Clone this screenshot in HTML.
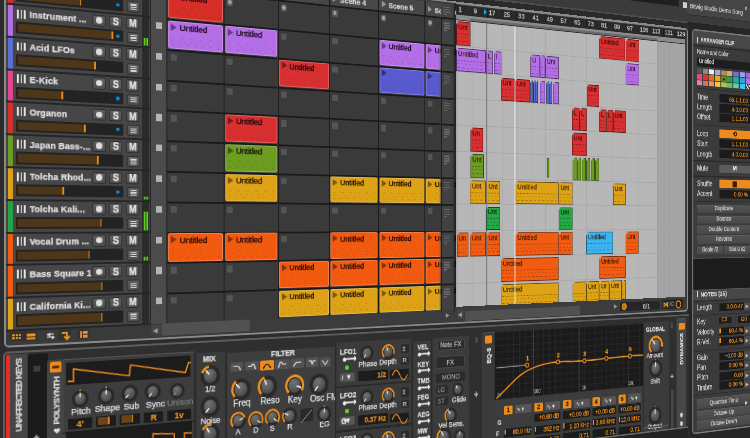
<!DOCTYPE html><html><head><meta charset="utf-8"><style>
html,body{margin:0;padding:0;background:#2a2a2a;width:750px;height:438px;overflow:hidden}
#w{position:absolute;left:0;top:0;width:1px;height:1px;transform-origin:0 0;transform:matrix3d(1,0.0937,0,0.0004219409282700422,0,1,0,0,0,0,1,0,0,0,0,1)}
#w div{position:absolute}
.t{white-space:nowrap;line-height:1;font-family:"Liberation Sans",sans-serif;-webkit-text-stroke:0.25px currentColor}
</style></head><body><svg width="0" height="0" style="position:absolute"><defs><radialGradient id="kg" cx="0.4" cy="0.3" r="0.8"><stop offset="0" stop-color="#747474"/><stop offset="1" stop-color="#404040"/></radialGradient></defs></svg><div id="w">
<div style="left:-50px;top:-200px;width:1300px;height:140px;background:#3b3b3b"></div>
<div style="left:-50px;top:-60px;width:1300px;height:1.6px;background:#4e4e4e"></div>
<div style="left:848px;top:-160px;width:103px;height:80px;background:#1f1f1f"></div>
<div style="left:968px;top:-160px;width:200px;height:89px;background:#454545"></div>
<div style="left:968px;top:-71.5px;width:200px;height:1.5px;background:#2a2a2a"></div>
<div style="left:-50px;top:-48px;width:1300px;height:600px;background:#2c2c2c"></div>
<div style="left:4px;top:-51px;width:965px;height:398.5px;background:#3a3a3a;border:2px solid #8a8a8a;border-radius:5px;box-sizing:border-box"></div>
<div style="left:6px;top:-29.8px;width:155px;height:32.8px;background:#464646"></div>
<div style="left:6px;top:-30.8px;width:155px;height:2px;background:#262626"></div>
<div style="left:8px;top:-28.8px;width:5px;height:30.8px;background:#d82e28"></div>
<div style="left:17.4px;top:-25px;width:1.8px;height:8.8px;background:#e4e4e4"></div>
<div style="left:20.6px;top:-25px;width:1.8px;height:8.8px;background:#e4e4e4"></div>
<div style="left:23.8px;top:-25px;width:1.8px;height:8.8px;background:#e4e4e4"></div>
<div class="t" style="left:30px;top:-24.39px;font-size:9.2px;color:#e4e4e4;font-weight:bold;letter-spacing:0.15px">Drums</div>
<div style="left:95.6px;top:-27.2px;width:15.3px;height:12.4px;background:linear-gradient(#5d5d5d,#4e4e4e);border:1px solid #2e2e2e;border-radius:2px;box-sizing:border-box"></div>
<div style="left:100.2px;top:-24.6px;width:6.5px;height:6.5px;background:#dedede;border-radius:50%"></div>
<div style="left:114.1px;top:-27.2px;width:15.3px;height:12.4px;background:linear-gradient(#5d5d5d,#4e4e4e);border:1px solid #2e2e2e;border-radius:2px;box-sizing:border-box"></div>
<div class="t" style="left:114.1px;top:-25.67px;width:15.3px;text-align:center;font-size:10px;color:#e8e8e8;font-weight:bold;">S</div>
<div style="left:133px;top:-27.2px;width:15.3px;height:12.4px;background:linear-gradient(#5d5d5d,#4e4e4e);border:1px solid #2e2e2e;border-radius:2px;box-sizing:border-box"></div>
<div class="t" style="left:133px;top:-25.67px;width:15.3px;text-align:center;font-size:10px;color:#e8e8e8;font-weight:bold;">M</div>
<div style="left:16px;top:-12.6px;width:114px;height:12.2px;background:#232323;border-radius:1px"></div>
<div style="left:17.8px;top:-10.6px;width:64.8px;height:8.3px;background:#4e3619"></div>
<div style="left:82.6px;top:-10.6px;width:1.7px;height:8.3px;background:#e88a1c"></div>
<div style="left:121.3px;top:-9.2px;width:5.4px;height:5.4px;background:#1a86c0;border-radius:50%;border:1.2px solid #0c2c44;box-sizing:border-box"></div>
<div style="left:134px;top:-11.8px;width:15px;height:12px;background:linear-gradient(#5d5d5d,#4e4e4e);border:1px solid #2e2e2e;border-radius:2px;box-sizing:border-box"></div>
<div style="left:138px;top:-8.6px;width:7px;height:1.3px;background:#d8d8d8"></div>
<div style="left:138px;top:-6.4px;width:7px;height:1.3px;background:#d8d8d8"></div>
<div style="left:138px;top:-4.2px;width:7px;height:1.3px;background:#d8d8d8"></div>
<div style="left:151px;top:-28.8px;width:8px;height:30.8px;background:#2b2b2b"></div>
<div style="left:161px;top:-29.8px;width:18px;height:32.8px;background:#4b4b4b"></div>
<div style="left:159.5px;top:-29.8px;width:1.8px;height:32.8px;background:#1e1e1e"></div>
<div style="left:166.6px;top:-24.8px;width:7.3px;height:7.3px;background:#b4b4b4"></div>
<div style="left:6px;top:3px;width:155px;height:32.8px;background:#464646"></div>
<div style="left:6px;top:2px;width:155px;height:2px;background:#262626"></div>
<div style="left:8px;top:4px;width:5px;height:30.8px;background:#b46ee6"></div>
<div style="left:17.4px;top:7.8px;width:1.8px;height:8.8px;background:#e4e4e4"></div>
<div style="left:20.6px;top:7.8px;width:1.8px;height:8.8px;background:#e4e4e4"></div>
<div style="left:23.8px;top:7.8px;width:1.8px;height:8.8px;background:#e4e4e4"></div>
<div class="t" style="left:30px;top:8.41px;font-size:9.2px;color:#e4e4e4;font-weight:bold;letter-spacing:0.15px">Instrument ...</div>
<div style="left:95.6px;top:5.6px;width:15.3px;height:12.4px;background:linear-gradient(#5d5d5d,#4e4e4e);border:1px solid #2e2e2e;border-radius:2px;box-sizing:border-box"></div>
<div style="left:100.2px;top:8.2px;width:6.5px;height:6.5px;background:#dedede;border-radius:50%"></div>
<div style="left:114.1px;top:5.6px;width:15.3px;height:12.4px;background:linear-gradient(#5d5d5d,#4e4e4e);border:1px solid #2e2e2e;border-radius:2px;box-sizing:border-box"></div>
<div class="t" style="left:114.1px;top:7.13px;width:15.3px;text-align:center;font-size:10px;color:#e8e8e8;font-weight:bold;">S</div>
<div style="left:133px;top:5.6px;width:15.3px;height:12.4px;background:linear-gradient(#5d5d5d,#4e4e4e);border:1px solid #2e2e2e;border-radius:2px;box-sizing:border-box"></div>
<div class="t" style="left:133px;top:7.13px;width:15.3px;text-align:center;font-size:10px;color:#e8e8e8;font-weight:bold;">M</div>
<div style="left:16px;top:20.2px;width:114px;height:12.2px;background:#232323;border-radius:1px"></div>
<div style="left:17.8px;top:22.2px;width:99.3px;height:8.3px;background:#4e3619"></div>
<div style="left:117.1px;top:22.2px;width:1.7px;height:8.3px;background:#e88a1c"></div>
<div style="left:121.3px;top:23.6px;width:5.4px;height:5.4px;background:#1a86c0;border-radius:50%;border:1.2px solid #0c2c44;box-sizing:border-box"></div>
<div style="left:134px;top:21px;width:15px;height:12px;background:linear-gradient(#5d5d5d,#4e4e4e);border:1px solid #2e2e2e;border-radius:2px;box-sizing:border-box"></div>
<div style="left:138px;top:24.2px;width:7px;height:1.3px;background:#d8d8d8"></div>
<div style="left:138px;top:26.4px;width:7px;height:1.3px;background:#d8d8d8"></div>
<div style="left:138px;top:28.6px;width:7px;height:1.3px;background:#d8d8d8"></div>
<div style="left:151px;top:4px;width:8px;height:30.8px;background:#2b2b2b"></div>
<div style="left:161px;top:3px;width:18px;height:32.8px;background:#4b4b4b"></div>
<div style="left:159.5px;top:3px;width:1.8px;height:32.8px;background:#1e1e1e"></div>
<div style="left:166.6px;top:8px;width:7.3px;height:7.3px;background:#b4b4b4"></div>
<div style="left:6px;top:35.8px;width:155px;height:32.8px;background:#464646"></div>
<div style="left:6px;top:34.8px;width:155px;height:2px;background:#262626"></div>
<div style="left:8px;top:36.8px;width:5px;height:30.8px;background:#5c6cd8"></div>
<div style="left:17.4px;top:40.6px;width:1.8px;height:8.8px;background:#e4e4e4"></div>
<div style="left:20.6px;top:40.6px;width:1.8px;height:8.8px;background:#e4e4e4"></div>
<div style="left:23.8px;top:40.6px;width:1.8px;height:8.8px;background:#e4e4e4"></div>
<div class="t" style="left:30px;top:41.21px;font-size:9.2px;color:#e4e4e4;font-weight:bold;letter-spacing:0.15px">Acid LFOs</div>
<div style="left:95.6px;top:38.4px;width:15.3px;height:12.4px;background:linear-gradient(#5d5d5d,#4e4e4e);border:1px solid #2e2e2e;border-radius:2px;box-sizing:border-box"></div>
<div style="left:100.2px;top:41px;width:6.5px;height:6.5px;background:#dedede;border-radius:50%"></div>
<div style="left:114.1px;top:38.4px;width:15.3px;height:12.4px;background:linear-gradient(#5d5d5d,#4e4e4e);border:1px solid #2e2e2e;border-radius:2px;box-sizing:border-box"></div>
<div class="t" style="left:114.1px;top:39.94px;width:15.3px;text-align:center;font-size:10px;color:#e8e8e8;font-weight:bold;">S</div>
<div style="left:133px;top:38.4px;width:15.3px;height:12.4px;background:linear-gradient(#5d5d5d,#4e4e4e);border:1px solid #2e2e2e;border-radius:2px;box-sizing:border-box"></div>
<div class="t" style="left:133px;top:39.94px;width:15.3px;text-align:center;font-size:10px;color:#e8e8e8;font-weight:bold;">M</div>
<div style="left:16px;top:53px;width:114px;height:12.2px;background:#232323;border-radius:1px"></div>
<div style="left:17.8px;top:55px;width:80.6px;height:8.3px;background:#4e3619"></div>
<div style="left:98.4px;top:55px;width:1.7px;height:8.3px;background:#e88a1c"></div>
<div style="left:134px;top:53.8px;width:15px;height:12px;background:linear-gradient(#5d5d5d,#4e4e4e);border:1px solid #2e2e2e;border-radius:2px;box-sizing:border-box"></div>
<div style="left:138px;top:57px;width:7px;height:1.3px;background:#d8d8d8"></div>
<div style="left:138px;top:59.2px;width:7px;height:1.3px;background:#d8d8d8"></div>
<div style="left:138px;top:61.4px;width:7px;height:1.3px;background:#d8d8d8"></div>
<div style="left:151px;top:36.8px;width:8px;height:30.8px;background:#2b2b2b"></div>
<div style="left:161px;top:35.8px;width:18px;height:32.8px;background:#4b4b4b"></div>
<div style="left:159.5px;top:35.8px;width:1.8px;height:32.8px;background:#1e1e1e"></div>
<div style="left:166.6px;top:40.8px;width:7.3px;height:7.3px;background:#b4b4b4"></div>
<div style="left:6px;top:68.6px;width:155px;height:32.8px;background:#464646"></div>
<div style="left:6px;top:67.6px;width:155px;height:2px;background:#262626"></div>
<div style="left:8px;top:69.6px;width:5px;height:30.8px;background:#e4458e"></div>
<div style="left:17.4px;top:73.4px;width:1.8px;height:8.8px;background:#e4e4e4"></div>
<div style="left:20.6px;top:73.4px;width:1.8px;height:8.8px;background:#e4e4e4"></div>
<div style="left:23.8px;top:73.4px;width:1.8px;height:8.8px;background:#e4e4e4"></div>
<div class="t" style="left:30px;top:74.01px;font-size:9.2px;color:#e4e4e4;font-weight:bold;letter-spacing:0.15px">E-Kick</div>
<div style="left:95.6px;top:71.2px;width:15.3px;height:12.4px;background:linear-gradient(#5d5d5d,#4e4e4e);border:1px solid #2e2e2e;border-radius:2px;box-sizing:border-box"></div>
<div style="left:100.2px;top:73.8px;width:6.5px;height:6.5px;background:#dedede;border-radius:50%"></div>
<div style="left:114.1px;top:71.2px;width:15.3px;height:12.4px;background:linear-gradient(#5d5d5d,#4e4e4e);border:1px solid #2e2e2e;border-radius:2px;box-sizing:border-box"></div>
<div class="t" style="left:114.1px;top:72.73px;width:15.3px;text-align:center;font-size:10px;color:#e8e8e8;font-weight:bold;">S</div>
<div style="left:133px;top:71.2px;width:15.3px;height:12.4px;background:linear-gradient(#5d5d5d,#4e4e4e);border:1px solid #2e2e2e;border-radius:2px;box-sizing:border-box"></div>
<div class="t" style="left:133px;top:72.73px;width:15.3px;text-align:center;font-size:10px;color:#e8e8e8;font-weight:bold;">M</div>
<div style="left:16px;top:85.8px;width:114px;height:12.2px;background:#232323;border-radius:1px"></div>
<div style="left:17.8px;top:87.8px;width:45.1px;height:8.3px;background:#4e3619"></div>
<div style="left:62.9px;top:87.8px;width:1.7px;height:8.3px;background:#e88a1c"></div>
<div style="left:121.3px;top:89.2px;width:5.4px;height:5.4px;background:#1a86c0;border-radius:50%;border:1.2px solid #0c2c44;box-sizing:border-box"></div>
<div style="left:134px;top:86.6px;width:15px;height:12px;background:linear-gradient(#5d5d5d,#4e4e4e);border:1px solid #2e2e2e;border-radius:2px;box-sizing:border-box"></div>
<div style="left:138px;top:89.8px;width:7px;height:1.3px;background:#d8d8d8"></div>
<div style="left:138px;top:92px;width:7px;height:1.3px;background:#d8d8d8"></div>
<div style="left:138px;top:94.2px;width:7px;height:1.3px;background:#d8d8d8"></div>
<div style="left:151px;top:69.6px;width:8px;height:30.8px;background:#2b2b2b"></div>
<div style="left:161px;top:68.6px;width:18px;height:32.8px;background:#4b4b4b"></div>
<div style="left:159.5px;top:68.6px;width:1.8px;height:32.8px;background:#1e1e1e"></div>
<div style="left:166.6px;top:73.6px;width:7.3px;height:7.3px;background:#b4b4b4"></div>
<div style="left:6px;top:101.4px;width:155px;height:32.8px;background:#464646"></div>
<div style="left:6px;top:100.4px;width:155px;height:2px;background:#262626"></div>
<div style="left:8px;top:102.4px;width:5px;height:30.8px;background:#d83030"></div>
<div style="left:17.4px;top:106.2px;width:1.8px;height:8.8px;background:#e4e4e4"></div>
<div style="left:20.6px;top:106.2px;width:1.8px;height:8.8px;background:#e4e4e4"></div>
<div style="left:23.8px;top:106.2px;width:1.8px;height:8.8px;background:#e4e4e4"></div>
<div class="t" style="left:30px;top:106.81px;font-size:9.2px;color:#e4e4e4;font-weight:bold;letter-spacing:0.15px">Organon</div>
<div style="left:95.6px;top:104px;width:15.3px;height:12.4px;background:linear-gradient(#5d5d5d,#4e4e4e);border:1px solid #2e2e2e;border-radius:2px;box-sizing:border-box"></div>
<div style="left:100.2px;top:106.6px;width:6.5px;height:6.5px;background:#dedede;border-radius:50%"></div>
<div style="left:114.1px;top:104px;width:15.3px;height:12.4px;background:linear-gradient(#5d5d5d,#4e4e4e);border:1px solid #2e2e2e;border-radius:2px;box-sizing:border-box"></div>
<div class="t" style="left:114.1px;top:105.53px;width:15.3px;text-align:center;font-size:10px;color:#e8e8e8;font-weight:bold;">S</div>
<div style="left:133px;top:104px;width:15.3px;height:12.4px;background:linear-gradient(#5d5d5d,#4e4e4e);border:1px solid #2e2e2e;border-radius:2px;box-sizing:border-box"></div>
<div class="t" style="left:133px;top:105.53px;width:15.3px;text-align:center;font-size:10px;color:#e8e8e8;font-weight:bold;">M</div>
<div style="left:16px;top:118.6px;width:114px;height:12.2px;background:#232323;border-radius:1px"></div>
<div style="left:17.8px;top:120.6px;width:69.6px;height:8.3px;background:#4e3619"></div>
<div style="left:87.4px;top:120.6px;width:1.7px;height:8.3px;background:#e88a1c"></div>
<div style="left:121.3px;top:122px;width:5.4px;height:5.4px;background:#1a86c0;border-radius:50%;border:1.2px solid #0c2c44;box-sizing:border-box"></div>
<div style="left:134px;top:119.4px;width:15px;height:12px;background:linear-gradient(#5d5d5d,#4e4e4e);border:1px solid #2e2e2e;border-radius:2px;box-sizing:border-box"></div>
<div style="left:138px;top:122.6px;width:7px;height:1.3px;background:#d8d8d8"></div>
<div style="left:138px;top:124.8px;width:7px;height:1.3px;background:#d8d8d8"></div>
<div style="left:138px;top:127px;width:7px;height:1.3px;background:#d8d8d8"></div>
<div style="left:151px;top:102.4px;width:8px;height:30.8px;background:#2b2b2b"></div>
<div style="left:161px;top:101.4px;width:18px;height:32.8px;background:#4b4b4b"></div>
<div style="left:159.5px;top:101.4px;width:1.8px;height:32.8px;background:#1e1e1e"></div>
<div style="left:166.6px;top:106.4px;width:7.3px;height:7.3px;background:#b4b4b4"></div>
<div style="left:6px;top:134.2px;width:155px;height:32.8px;background:#464646"></div>
<div style="left:6px;top:133.2px;width:155px;height:2px;background:#262626"></div>
<div style="left:8px;top:135.2px;width:5px;height:30.8px;background:#6c9c22"></div>
<div style="left:17.4px;top:139px;width:1.8px;height:8.8px;background:#e4e4e4"></div>
<div style="left:20.6px;top:139px;width:1.8px;height:8.8px;background:#e4e4e4"></div>
<div style="left:23.8px;top:139px;width:1.8px;height:8.8px;background:#e4e4e4"></div>
<div class="t" style="left:30px;top:139.61px;font-size:9.2px;color:#e4e4e4;font-weight:bold;letter-spacing:0.15px">Japan Bass-...</div>
<div style="left:95.6px;top:136.8px;width:15.3px;height:12.4px;background:linear-gradient(#5d5d5d,#4e4e4e);border:1px solid #2e2e2e;border-radius:2px;box-sizing:border-box"></div>
<div style="left:100.2px;top:139.4px;width:6.5px;height:6.5px;background:#dedede;border-radius:50%"></div>
<div style="left:114.1px;top:136.8px;width:15.3px;height:12.4px;background:linear-gradient(#5d5d5d,#4e4e4e);border:1px solid #2e2e2e;border-radius:2px;box-sizing:border-box"></div>
<div class="t" style="left:114.1px;top:138.33px;width:15.3px;text-align:center;font-size:10px;color:#e8e8e8;font-weight:bold;">S</div>
<div style="left:133px;top:136.8px;width:15.3px;height:12.4px;background:linear-gradient(#5d5d5d,#4e4e4e);border:1px solid #2e2e2e;border-radius:2px;box-sizing:border-box"></div>
<div class="t" style="left:133px;top:138.33px;width:15.3px;text-align:center;font-size:10px;color:#e8e8e8;font-weight:bold;">M</div>
<div style="left:16px;top:151.4px;width:114px;height:12.2px;background:#232323;border-radius:1px"></div>
<div style="left:17.8px;top:153.4px;width:83.1px;height:8.3px;background:#4e3619"></div>
<div style="left:100.9px;top:153.4px;width:1.7px;height:8.3px;background:#e88a1c"></div>
<div style="left:134px;top:152.2px;width:15px;height:12px;background:linear-gradient(#5d5d5d,#4e4e4e);border:1px solid #2e2e2e;border-radius:2px;box-sizing:border-box"></div>
<div style="left:138px;top:155.4px;width:7px;height:1.3px;background:#d8d8d8"></div>
<div style="left:138px;top:157.6px;width:7px;height:1.3px;background:#d8d8d8"></div>
<div style="left:138px;top:159.8px;width:7px;height:1.3px;background:#d8d8d8"></div>
<div style="left:151px;top:135.2px;width:8px;height:30.8px;background:#2b2b2b"></div>
<div style="left:161px;top:134.2px;width:18px;height:32.8px;background:#4b4b4b"></div>
<div style="left:159.5px;top:134.2px;width:1.8px;height:32.8px;background:#1e1e1e"></div>
<div style="left:166.6px;top:139.2px;width:7.3px;height:7.3px;background:#b4b4b4"></div>
<div style="left:6px;top:167px;width:155px;height:32.8px;background:#464646"></div>
<div style="left:6px;top:166px;width:155px;height:2px;background:#262626"></div>
<div style="left:8px;top:168px;width:5px;height:30.8px;background:#dea216"></div>
<div style="left:17.4px;top:171.8px;width:1.8px;height:8.8px;background:#e4e4e4"></div>
<div style="left:20.6px;top:171.8px;width:1.8px;height:8.8px;background:#e4e4e4"></div>
<div style="left:23.8px;top:171.8px;width:1.8px;height:8.8px;background:#e4e4e4"></div>
<div class="t" style="left:30px;top:172.41px;font-size:9.2px;color:#e4e4e4;font-weight:bold;letter-spacing:0.15px">Tolcha Rhod...</div>
<div style="left:95.6px;top:169.6px;width:15.3px;height:12.4px;background:linear-gradient(#5d5d5d,#4e4e4e);border:1px solid #2e2e2e;border-radius:2px;box-sizing:border-box"></div>
<div style="left:100.2px;top:172.2px;width:6.5px;height:6.5px;background:#dedede;border-radius:50%"></div>
<div style="left:114.1px;top:169.6px;width:15.3px;height:12.4px;background:linear-gradient(#5d5d5d,#4e4e4e);border:1px solid #2e2e2e;border-radius:2px;box-sizing:border-box"></div>
<div class="t" style="left:114.1px;top:171.13px;width:15.3px;text-align:center;font-size:10px;color:#e8e8e8;font-weight:bold;">S</div>
<div style="left:133px;top:169.6px;width:15.3px;height:12.4px;background:linear-gradient(#5d5d5d,#4e4e4e);border:1px solid #2e2e2e;border-radius:2px;box-sizing:border-box"></div>
<div class="t" style="left:133px;top:171.13px;width:15.3px;text-align:center;font-size:10px;color:#e8e8e8;font-weight:bold;">M</div>
<div style="left:16px;top:184.2px;width:114px;height:12.2px;background:#232323;border-radius:1px"></div>
<div style="left:17.8px;top:186.2px;width:46.2px;height:8.3px;background:#4e3619"></div>
<div style="left:64px;top:186.2px;width:1.7px;height:8.3px;background:#e88a1c"></div>
<div style="left:121.3px;top:187.6px;width:5.4px;height:5.4px;background:#1a86c0;border-radius:50%;border:1.2px solid #0c2c44;box-sizing:border-box"></div>
<div style="left:134px;top:185px;width:15px;height:12px;background:linear-gradient(#5d5d5d,#4e4e4e);border:1px solid #2e2e2e;border-radius:2px;box-sizing:border-box"></div>
<div style="left:138px;top:188.2px;width:7px;height:1.3px;background:#d8d8d8"></div>
<div style="left:138px;top:190.4px;width:7px;height:1.3px;background:#d8d8d8"></div>
<div style="left:138px;top:192.6px;width:7px;height:1.3px;background:#d8d8d8"></div>
<div style="left:151px;top:168px;width:8px;height:30.8px;background:#2b2b2b"></div>
<div style="left:161px;top:167px;width:18px;height:32.8px;background:#4b4b4b"></div>
<div style="left:159.5px;top:167px;width:1.8px;height:32.8px;background:#1e1e1e"></div>
<div style="left:166.6px;top:172px;width:7.3px;height:7.3px;background:#b4b4b4"></div>
<div style="left:6px;top:199.8px;width:155px;height:32.8px;background:#464646"></div>
<div style="left:6px;top:198.8px;width:155px;height:2px;background:#262626"></div>
<div style="left:8px;top:200.8px;width:5px;height:30.8px;background:#22a644"></div>
<div style="left:17.4px;top:204.6px;width:1.8px;height:8.8px;background:#e4e4e4"></div>
<div style="left:20.6px;top:204.6px;width:1.8px;height:8.8px;background:#e4e4e4"></div>
<div style="left:23.8px;top:204.6px;width:1.8px;height:8.8px;background:#e4e4e4"></div>
<div class="t" style="left:30px;top:205.21px;font-size:9.2px;color:#e4e4e4;font-weight:bold;letter-spacing:0.15px">Tolcha Kali...</div>
<div style="left:95.6px;top:202.4px;width:15.3px;height:12.4px;background:linear-gradient(#5d5d5d,#4e4e4e);border:1px solid #2e2e2e;border-radius:2px;box-sizing:border-box"></div>
<div style="left:100.2px;top:205px;width:6.5px;height:6.5px;background:#dedede;border-radius:50%"></div>
<div style="left:114.1px;top:202.4px;width:15.3px;height:12.4px;background:linear-gradient(#5d5d5d,#4e4e4e);border:1px solid #2e2e2e;border-radius:2px;box-sizing:border-box"></div>
<div class="t" style="left:114.1px;top:203.93px;width:15.3px;text-align:center;font-size:10px;color:#e8e8e8;font-weight:bold;">S</div>
<div style="left:133px;top:202.4px;width:15.3px;height:12.4px;background:linear-gradient(#5d5d5d,#4e4e4e);border:1px solid #2e2e2e;border-radius:2px;box-sizing:border-box"></div>
<div class="t" style="left:133px;top:203.93px;width:15.3px;text-align:center;font-size:10px;color:#e8e8e8;font-weight:bold;">M</div>
<div style="left:16px;top:217px;width:114px;height:12.2px;background:#232323;border-radius:1px"></div>
<div style="left:17.8px;top:219px;width:86.9px;height:8.3px;background:#4e3619"></div>
<div style="left:104.7px;top:219px;width:1.7px;height:8.3px;background:#e88a1c"></div>
<div style="left:134px;top:217.8px;width:15px;height:12px;background:linear-gradient(#5d5d5d,#4e4e4e);border:1px solid #2e2e2e;border-radius:2px;box-sizing:border-box"></div>
<div style="left:138px;top:221px;width:7px;height:1.3px;background:#d8d8d8"></div>
<div style="left:138px;top:223.2px;width:7px;height:1.3px;background:#d8d8d8"></div>
<div style="left:138px;top:225.4px;width:7px;height:1.3px;background:#d8d8d8"></div>
<div style="left:151px;top:200.8px;width:8px;height:30.8px;background:#2b2b2b"></div>
<div style="left:161px;top:199.8px;width:18px;height:32.8px;background:#4b4b4b"></div>
<div style="left:159.5px;top:199.8px;width:1.8px;height:32.8px;background:#1e1e1e"></div>
<div style="left:166.6px;top:204.8px;width:7.3px;height:7.3px;background:#b4b4b4"></div>
<div style="left:6px;top:232.6px;width:155px;height:32.8px;background:#464646"></div>
<div style="left:6px;top:231.6px;width:155px;height:2px;background:#262626"></div>
<div style="left:8px;top:233.6px;width:5px;height:30.8px;background:#f25a10"></div>
<div style="left:17.4px;top:237.4px;width:1.8px;height:8.8px;background:#e4e4e4"></div>
<div style="left:20.6px;top:237.4px;width:1.8px;height:8.8px;background:#e4e4e4"></div>
<div style="left:23.8px;top:237.4px;width:1.8px;height:8.8px;background:#e4e4e4"></div>
<div class="t" style="left:30px;top:238.01px;font-size:9.2px;color:#e4e4e4;font-weight:bold;letter-spacing:0.15px">Vocal Drum ...</div>
<div style="left:95.6px;top:235.2px;width:15.3px;height:12.4px;background:linear-gradient(#5d5d5d,#4e4e4e);border:1px solid #2e2e2e;border-radius:2px;box-sizing:border-box"></div>
<div style="left:100.2px;top:237.8px;width:6.5px;height:6.5px;background:#dedede;border-radius:50%"></div>
<div style="left:114.1px;top:235.2px;width:15.3px;height:12.4px;background:linear-gradient(#5d5d5d,#4e4e4e);border:1px solid #2e2e2e;border-radius:2px;box-sizing:border-box"></div>
<div class="t" style="left:114.1px;top:236.73px;width:15.3px;text-align:center;font-size:10px;color:#e8e8e8;font-weight:bold;">S</div>
<div style="left:133px;top:235.2px;width:15.3px;height:12.4px;background:linear-gradient(#5d5d5d,#4e4e4e);border:1px solid #2e2e2e;border-radius:2px;box-sizing:border-box"></div>
<div class="t" style="left:133px;top:236.73px;width:15.3px;text-align:center;font-size:10px;color:#e8e8e8;font-weight:bold;">M</div>
<div style="left:16px;top:249.8px;width:114px;height:12.2px;background:#232323;border-radius:1px"></div>
<div style="left:17.8px;top:251.8px;width:73.9px;height:8.3px;background:#4e3619"></div>
<div style="left:91.7px;top:251.8px;width:1.7px;height:8.3px;background:#e88a1c"></div>
<div style="left:134px;top:250.6px;width:15px;height:12px;background:linear-gradient(#5d5d5d,#4e4e4e);border:1px solid #2e2e2e;border-radius:2px;box-sizing:border-box"></div>
<div style="left:138px;top:253.8px;width:7px;height:1.3px;background:#d8d8d8"></div>
<div style="left:138px;top:256px;width:7px;height:1.3px;background:#d8d8d8"></div>
<div style="left:138px;top:258.2px;width:7px;height:1.3px;background:#d8d8d8"></div>
<div style="left:151px;top:233.6px;width:8px;height:30.8px;background:#2b2b2b"></div>
<div style="left:161px;top:232.6px;width:18px;height:32.8px;background:#4b4b4b"></div>
<div style="left:159.5px;top:232.6px;width:1.8px;height:32.8px;background:#1e1e1e"></div>
<div style="left:166.6px;top:237.6px;width:7.3px;height:7.3px;background:#b4b4b4"></div>
<div style="left:6px;top:265.4px;width:155px;height:32.8px;background:#464646"></div>
<div style="left:6px;top:264.4px;width:155px;height:2px;background:#262626"></div>
<div style="left:8px;top:266.4px;width:5px;height:30.8px;background:#f25a10"></div>
<div style="left:17.4px;top:270.2px;width:1.8px;height:8.8px;background:#e4e4e4"></div>
<div style="left:20.6px;top:270.2px;width:1.8px;height:8.8px;background:#e4e4e4"></div>
<div style="left:23.8px;top:270.2px;width:1.8px;height:8.8px;background:#e4e4e4"></div>
<div class="t" style="left:30px;top:270.81px;font-size:9.2px;color:#e4e4e4;font-weight:bold;letter-spacing:0.15px">Bass Square 1</div>
<div style="left:95.6px;top:268px;width:15.3px;height:12.4px;background:linear-gradient(#5d5d5d,#4e4e4e);border:1px solid #2e2e2e;border-radius:2px;box-sizing:border-box"></div>
<div style="left:100.2px;top:270.6px;width:6.5px;height:6.5px;background:#dedede;border-radius:50%"></div>
<div style="left:114.1px;top:268px;width:15.3px;height:12.4px;background:linear-gradient(#5d5d5d,#4e4e4e);border:1px solid #2e2e2e;border-radius:2px;box-sizing:border-box"></div>
<div class="t" style="left:114.1px;top:269.54px;width:15.3px;text-align:center;font-size:10px;color:#e8e8e8;font-weight:bold;">S</div>
<div style="left:133px;top:268px;width:15.3px;height:12.4px;background:linear-gradient(#5d5d5d,#4e4e4e);border:1px solid #2e2e2e;border-radius:2px;box-sizing:border-box"></div>
<div class="t" style="left:133px;top:269.54px;width:15.3px;text-align:center;font-size:10px;color:#e8e8e8;font-weight:bold;">M</div>
<div style="left:16px;top:282.6px;width:114px;height:12.2px;background:#232323;border-radius:1px"></div>
<div style="left:17.8px;top:284.6px;width:88px;height:8.3px;background:#4e3619"></div>
<div style="left:105.8px;top:284.6px;width:1.7px;height:8.3px;background:#e88a1c"></div>
<div style="left:134px;top:283.4px;width:15px;height:12px;background:linear-gradient(#5d5d5d,#4e4e4e);border:1px solid #2e2e2e;border-radius:2px;box-sizing:border-box"></div>
<div style="left:138px;top:286.6px;width:7px;height:1.3px;background:#d8d8d8"></div>
<div style="left:138px;top:288.8px;width:7px;height:1.3px;background:#d8d8d8"></div>
<div style="left:138px;top:291px;width:7px;height:1.3px;background:#d8d8d8"></div>
<div style="left:151px;top:266.4px;width:8px;height:30.8px;background:#2b2b2b"></div>
<div style="left:161px;top:265.4px;width:18px;height:32.8px;background:#4b4b4b"></div>
<div style="left:159.5px;top:265.4px;width:1.8px;height:32.8px;background:#1e1e1e"></div>
<div style="left:166.6px;top:270.4px;width:7.3px;height:7.3px;background:#b4b4b4"></div>
<div style="left:6px;top:298.2px;width:155px;height:32.8px;background:#464646"></div>
<div style="left:6px;top:297.2px;width:155px;height:2px;background:#262626"></div>
<div style="left:8px;top:299.2px;width:5px;height:30.8px;background:#dea216"></div>
<div style="left:17.4px;top:303px;width:1.8px;height:8.8px;background:#e4e4e4"></div>
<div style="left:20.6px;top:303px;width:1.8px;height:8.8px;background:#e4e4e4"></div>
<div style="left:23.8px;top:303px;width:1.8px;height:8.8px;background:#e4e4e4"></div>
<div class="t" style="left:30px;top:303.61px;font-size:9.2px;color:#e4e4e4;font-weight:bold;letter-spacing:0.15px">California Ki...</div>
<div style="left:95.6px;top:300.8px;width:15.3px;height:12.4px;background:linear-gradient(#5d5d5d,#4e4e4e);border:1px solid #2e2e2e;border-radius:2px;box-sizing:border-box"></div>
<div style="left:100.2px;top:303.4px;width:6.5px;height:6.5px;background:#dedede;border-radius:50%"></div>
<div style="left:114.1px;top:300.8px;width:15.3px;height:12.4px;background:linear-gradient(#5d5d5d,#4e4e4e);border:1px solid #2e2e2e;border-radius:2px;box-sizing:border-box"></div>
<div class="t" style="left:114.1px;top:302.34px;width:15.3px;text-align:center;font-size:10px;color:#e8e8e8;font-weight:bold;">S</div>
<div style="left:133px;top:300.8px;width:15.3px;height:12.4px;background:linear-gradient(#5d5d5d,#4e4e4e);border:1px solid #2e2e2e;border-radius:2px;box-sizing:border-box"></div>
<div class="t" style="left:133px;top:302.34px;width:15.3px;text-align:center;font-size:10px;color:#e8e8e8;font-weight:bold;">M</div>
<div style="left:16px;top:315.4px;width:114px;height:12.2px;background:#232323;border-radius:1px"></div>
<div style="left:17.8px;top:317.4px;width:88px;height:8.3px;background:#4e3619"></div>
<div style="left:105.8px;top:317.4px;width:1.7px;height:8.3px;background:#e88a1c"></div>
<div style="left:134px;top:316.2px;width:15px;height:12px;background:linear-gradient(#5d5d5d,#4e4e4e);border:1px solid #2e2e2e;border-radius:2px;box-sizing:border-box"></div>
<div style="left:138px;top:319.4px;width:7px;height:1.3px;background:#d8d8d8"></div>
<div style="left:138px;top:321.6px;width:7px;height:1.3px;background:#d8d8d8"></div>
<div style="left:138px;top:323.8px;width:7px;height:1.3px;background:#d8d8d8"></div>
<div style="left:151px;top:299.2px;width:8px;height:30.8px;background:#2b2b2b"></div>
<div style="left:161px;top:298.2px;width:18px;height:32.8px;background:#4b4b4b"></div>
<div style="left:159.5px;top:298.2px;width:1.8px;height:32.8px;background:#1e1e1e"></div>
<div style="left:166.6px;top:303.2px;width:7.3px;height:7.3px;background:#b4b4b4"></div>
<div style="left:152.5px;top:25.8px;width:2.2px;height:8px;background:#5ad21e"></div>
<div style="left:155.5px;top:25.8px;width:2.2px;height:8px;background:#5ad21e"></div>
<div style="left:152.5px;top:210.6px;width:2.2px;height:20px;background:#5ad21e"></div>
<div style="left:155.5px;top:210.6px;width:2.2px;height:20px;background:#5ad21e"></div>
<div style="left:152.5px;top:194.8px;width:2.2px;height:3px;background:#5ad21e"></div>
<div style="left:155.5px;top:194.8px;width:2.2px;height:3px;background:#5ad21e"></div>
<div style="left:152.5px;top:259.4px;width:2.2px;height:4px;background:#5ad21e"></div>
<div style="left:155.5px;top:259.4px;width:2.2px;height:4px;background:#5ad21e"></div>
<div style="left:6px;top:330px;width:155px;height:2px;background:#262626"></div>
<div style="left:179.3px;top:-29.8px;width:67.6px;height:32.8px;background:#3a3a3a;border-left:1.8px solid #1a1a1a;border-top:2px solid #1a1a1a;box-sizing:border-box"></div>
<div style="left:183.6px;top:-24.8px;width:7.3px;height:7.3px;background:#555"></div>
<div style="left:246.9px;top:-29.8px;width:67.6px;height:32.8px;background:#3a3a3a;border-left:1.8px solid #1a1a1a;border-top:2px solid #1a1a1a;box-sizing:border-box"></div>
<div style="left:251.2px;top:-24.8px;width:7.3px;height:7.3px;background:#555"></div>
<div style="left:314.5px;top:-29.8px;width:67.6px;height:32.8px;background:#3a3a3a;border-left:1.8px solid #1a1a1a;border-top:2px solid #1a1a1a;box-sizing:border-box"></div>
<div style="left:318.8px;top:-24.8px;width:7.3px;height:7.3px;background:#555"></div>
<div style="left:382.1px;top:-29.8px;width:67.6px;height:32.8px;background:#3a3a3a;border-left:1.8px solid #1a1a1a;border-top:2px solid #1a1a1a;box-sizing:border-box"></div>
<div style="left:386.4px;top:-24.8px;width:7.3px;height:7.3px;background:#555"></div>
<div style="left:449.7px;top:-29.8px;width:67.6px;height:32.8px;background:#3a3a3a;border-left:1.8px solid #1a1a1a;border-top:2px solid #1a1a1a;box-sizing:border-box"></div>
<div style="left:454px;top:-24.8px;width:7.3px;height:7.3px;background:#555"></div>
<div style="left:517.3px;top:-29.8px;width:67.6px;height:32.8px;background:#3a3a3a;border-left:1.8px solid #1a1a1a;border-top:2px solid #1a1a1a;box-sizing:border-box"></div>
<div style="left:521.6px;top:-24.8px;width:7.3px;height:7.3px;background:#555"></div>
<div style="left:179.3px;top:3px;width:67.6px;height:32.8px;background:#3a3a3a;border-left:1.8px solid #1a1a1a;border-top:2px solid #1a1a1a;box-sizing:border-box"></div>
<div style="left:183.6px;top:8px;width:7.3px;height:7.3px;background:#555"></div>
<div style="left:246.9px;top:3px;width:67.6px;height:32.8px;background:#3a3a3a;border-left:1.8px solid #1a1a1a;border-top:2px solid #1a1a1a;box-sizing:border-box"></div>
<div style="left:251.2px;top:8px;width:7.3px;height:7.3px;background:#555"></div>
<div style="left:314.5px;top:3px;width:67.6px;height:32.8px;background:#3a3a3a;border-left:1.8px solid #1a1a1a;border-top:2px solid #1a1a1a;box-sizing:border-box"></div>
<div style="left:318.8px;top:8px;width:7.3px;height:7.3px;background:#555"></div>
<div style="left:382.1px;top:3px;width:67.6px;height:32.8px;background:#3a3a3a;border-left:1.8px solid #1a1a1a;border-top:2px solid #1a1a1a;box-sizing:border-box"></div>
<div style="left:386.4px;top:8px;width:7.3px;height:7.3px;background:#555"></div>
<div style="left:449.7px;top:3px;width:67.6px;height:32.8px;background:#3a3a3a;border-left:1.8px solid #1a1a1a;border-top:2px solid #1a1a1a;box-sizing:border-box"></div>
<div style="left:454px;top:8px;width:7.3px;height:7.3px;background:#555"></div>
<div style="left:517.3px;top:3px;width:67.6px;height:32.8px;background:#3a3a3a;border-left:1.8px solid #1a1a1a;border-top:2px solid #1a1a1a;box-sizing:border-box"></div>
<div style="left:521.6px;top:8px;width:7.3px;height:7.3px;background:#555"></div>
<div style="left:179.3px;top:35.8px;width:67.6px;height:32.8px;background:#3a3a3a;border-left:1.8px solid #1a1a1a;border-top:2px solid #1a1a1a;box-sizing:border-box"></div>
<div style="left:183.6px;top:40.8px;width:7.3px;height:7.3px;background:#555"></div>
<div style="left:246.9px;top:35.8px;width:67.6px;height:32.8px;background:#3a3a3a;border-left:1.8px solid #1a1a1a;border-top:2px solid #1a1a1a;box-sizing:border-box"></div>
<div style="left:251.2px;top:40.8px;width:7.3px;height:7.3px;background:#555"></div>
<div style="left:314.5px;top:35.8px;width:67.6px;height:32.8px;background:#3a3a3a;border-left:1.8px solid #1a1a1a;border-top:2px solid #1a1a1a;box-sizing:border-box"></div>
<div style="left:318.8px;top:40.8px;width:7.3px;height:7.3px;background:#555"></div>
<div style="left:382.1px;top:35.8px;width:67.6px;height:32.8px;background:#3a3a3a;border-left:1.8px solid #1a1a1a;border-top:2px solid #1a1a1a;box-sizing:border-box"></div>
<div style="left:386.4px;top:40.8px;width:7.3px;height:7.3px;background:#555"></div>
<div style="left:449.7px;top:35.8px;width:67.6px;height:32.8px;background:#3a3a3a;border-left:1.8px solid #1a1a1a;border-top:2px solid #1a1a1a;box-sizing:border-box"></div>
<div style="left:454px;top:40.8px;width:7.3px;height:7.3px;background:#555"></div>
<div style="left:517.3px;top:35.8px;width:67.6px;height:32.8px;background:#3a3a3a;border-left:1.8px solid #1a1a1a;border-top:2px solid #1a1a1a;box-sizing:border-box"></div>
<div style="left:521.6px;top:40.8px;width:7.3px;height:7.3px;background:#555"></div>
<div style="left:179.3px;top:68.6px;width:67.6px;height:32.8px;background:#3a3a3a;border-left:1.8px solid #1a1a1a;border-top:2px solid #1a1a1a;box-sizing:border-box"></div>
<div style="left:183.6px;top:73.6px;width:7.3px;height:7.3px;background:#555"></div>
<div style="left:246.9px;top:68.6px;width:67.6px;height:32.8px;background:#3a3a3a;border-left:1.8px solid #1a1a1a;border-top:2px solid #1a1a1a;box-sizing:border-box"></div>
<div style="left:251.2px;top:73.6px;width:7.3px;height:7.3px;background:#555"></div>
<div style="left:314.5px;top:68.6px;width:67.6px;height:32.8px;background:#3a3a3a;border-left:1.8px solid #1a1a1a;border-top:2px solid #1a1a1a;box-sizing:border-box"></div>
<div style="left:318.8px;top:73.6px;width:7.3px;height:7.3px;background:#555"></div>
<div style="left:382.1px;top:68.6px;width:67.6px;height:32.8px;background:#3a3a3a;border-left:1.8px solid #1a1a1a;border-top:2px solid #1a1a1a;box-sizing:border-box"></div>
<div style="left:386.4px;top:73.6px;width:7.3px;height:7.3px;background:#555"></div>
<div style="left:449.7px;top:68.6px;width:67.6px;height:32.8px;background:#3a3a3a;border-left:1.8px solid #1a1a1a;border-top:2px solid #1a1a1a;box-sizing:border-box"></div>
<div style="left:454px;top:73.6px;width:7.3px;height:7.3px;background:#555"></div>
<div style="left:517.3px;top:68.6px;width:67.6px;height:32.8px;background:#3a3a3a;border-left:1.8px solid #1a1a1a;border-top:2px solid #1a1a1a;box-sizing:border-box"></div>
<div style="left:521.6px;top:73.6px;width:7.3px;height:7.3px;background:#555"></div>
<div style="left:179.3px;top:101.4px;width:67.6px;height:32.8px;background:#3a3a3a;border-left:1.8px solid #1a1a1a;border-top:2px solid #1a1a1a;box-sizing:border-box"></div>
<div style="left:183.6px;top:106.4px;width:7.3px;height:7.3px;background:#555"></div>
<div style="left:246.9px;top:101.4px;width:67.6px;height:32.8px;background:#3a3a3a;border-left:1.8px solid #1a1a1a;border-top:2px solid #1a1a1a;box-sizing:border-box"></div>
<div style="left:251.2px;top:106.4px;width:7.3px;height:7.3px;background:#555"></div>
<div style="left:314.5px;top:101.4px;width:67.6px;height:32.8px;background:#3a3a3a;border-left:1.8px solid #1a1a1a;border-top:2px solid #1a1a1a;box-sizing:border-box"></div>
<div style="left:318.8px;top:106.4px;width:7.3px;height:7.3px;background:#555"></div>
<div style="left:382.1px;top:101.4px;width:67.6px;height:32.8px;background:#3a3a3a;border-left:1.8px solid #1a1a1a;border-top:2px solid #1a1a1a;box-sizing:border-box"></div>
<div style="left:386.4px;top:106.4px;width:7.3px;height:7.3px;background:#555"></div>
<div style="left:449.7px;top:101.4px;width:67.6px;height:32.8px;background:#3a3a3a;border-left:1.8px solid #1a1a1a;border-top:2px solid #1a1a1a;box-sizing:border-box"></div>
<div style="left:454px;top:106.4px;width:7.3px;height:7.3px;background:#555"></div>
<div style="left:517.3px;top:101.4px;width:67.6px;height:32.8px;background:#3a3a3a;border-left:1.8px solid #1a1a1a;border-top:2px solid #1a1a1a;box-sizing:border-box"></div>
<div style="left:521.6px;top:106.4px;width:7.3px;height:7.3px;background:#555"></div>
<div style="left:179.3px;top:134.2px;width:67.6px;height:32.8px;background:#3a3a3a;border-left:1.8px solid #1a1a1a;border-top:2px solid #1a1a1a;box-sizing:border-box"></div>
<div style="left:183.6px;top:139.2px;width:7.3px;height:7.3px;background:#555"></div>
<div style="left:246.9px;top:134.2px;width:67.6px;height:32.8px;background:#3a3a3a;border-left:1.8px solid #1a1a1a;border-top:2px solid #1a1a1a;box-sizing:border-box"></div>
<div style="left:251.2px;top:139.2px;width:7.3px;height:7.3px;background:#555"></div>
<div style="left:314.5px;top:134.2px;width:67.6px;height:32.8px;background:#3a3a3a;border-left:1.8px solid #1a1a1a;border-top:2px solid #1a1a1a;box-sizing:border-box"></div>
<div style="left:318.8px;top:139.2px;width:7.3px;height:7.3px;background:#555"></div>
<div style="left:382.1px;top:134.2px;width:67.6px;height:32.8px;background:#3a3a3a;border-left:1.8px solid #1a1a1a;border-top:2px solid #1a1a1a;box-sizing:border-box"></div>
<div style="left:386.4px;top:139.2px;width:7.3px;height:7.3px;background:#555"></div>
<div style="left:449.7px;top:134.2px;width:67.6px;height:32.8px;background:#3a3a3a;border-left:1.8px solid #1a1a1a;border-top:2px solid #1a1a1a;box-sizing:border-box"></div>
<div style="left:454px;top:139.2px;width:7.3px;height:7.3px;background:#555"></div>
<div style="left:517.3px;top:134.2px;width:67.6px;height:32.8px;background:#3a3a3a;border-left:1.8px solid #1a1a1a;border-top:2px solid #1a1a1a;box-sizing:border-box"></div>
<div style="left:521.6px;top:139.2px;width:7.3px;height:7.3px;background:#555"></div>
<div style="left:179.3px;top:167px;width:67.6px;height:32.8px;background:#3a3a3a;border-left:1.8px solid #1a1a1a;border-top:2px solid #1a1a1a;box-sizing:border-box"></div>
<div style="left:183.6px;top:172px;width:7.3px;height:7.3px;background:#555"></div>
<div style="left:246.9px;top:167px;width:67.6px;height:32.8px;background:#3a3a3a;border-left:1.8px solid #1a1a1a;border-top:2px solid #1a1a1a;box-sizing:border-box"></div>
<div style="left:251.2px;top:172px;width:7.3px;height:7.3px;background:#555"></div>
<div style="left:314.5px;top:167px;width:67.6px;height:32.8px;background:#3a3a3a;border-left:1.8px solid #1a1a1a;border-top:2px solid #1a1a1a;box-sizing:border-box"></div>
<div style="left:318.8px;top:172px;width:7.3px;height:7.3px;background:#555"></div>
<div style="left:382.1px;top:167px;width:67.6px;height:32.8px;background:#3a3a3a;border-left:1.8px solid #1a1a1a;border-top:2px solid #1a1a1a;box-sizing:border-box"></div>
<div style="left:386.4px;top:172px;width:7.3px;height:7.3px;background:#555"></div>
<div style="left:449.7px;top:167px;width:67.6px;height:32.8px;background:#3a3a3a;border-left:1.8px solid #1a1a1a;border-top:2px solid #1a1a1a;box-sizing:border-box"></div>
<div style="left:454px;top:172px;width:7.3px;height:7.3px;background:#555"></div>
<div style="left:517.3px;top:167px;width:67.6px;height:32.8px;background:#3a3a3a;border-left:1.8px solid #1a1a1a;border-top:2px solid #1a1a1a;box-sizing:border-box"></div>
<div style="left:521.6px;top:172px;width:7.3px;height:7.3px;background:#555"></div>
<div style="left:179.3px;top:199.8px;width:67.6px;height:32.8px;background:#3a3a3a;border-left:1.8px solid #1a1a1a;border-top:2px solid #1a1a1a;box-sizing:border-box"></div>
<div style="left:183.6px;top:204.8px;width:7.3px;height:7.3px;background:#555"></div>
<div style="left:246.9px;top:199.8px;width:67.6px;height:32.8px;background:#3a3a3a;border-left:1.8px solid #1a1a1a;border-top:2px solid #1a1a1a;box-sizing:border-box"></div>
<div style="left:251.2px;top:204.8px;width:7.3px;height:7.3px;background:#555"></div>
<div style="left:314.5px;top:199.8px;width:67.6px;height:32.8px;background:#3a3a3a;border-left:1.8px solid #1a1a1a;border-top:2px solid #1a1a1a;box-sizing:border-box"></div>
<div style="left:318.8px;top:204.8px;width:7.3px;height:7.3px;background:#555"></div>
<div style="left:382.1px;top:199.8px;width:67.6px;height:32.8px;background:#3a3a3a;border-left:1.8px solid #1a1a1a;border-top:2px solid #1a1a1a;box-sizing:border-box"></div>
<div style="left:386.4px;top:204.8px;width:7.3px;height:7.3px;background:#555"></div>
<div style="left:449.7px;top:199.8px;width:67.6px;height:32.8px;background:#3a3a3a;border-left:1.8px solid #1a1a1a;border-top:2px solid #1a1a1a;box-sizing:border-box"></div>
<div style="left:454px;top:204.8px;width:7.3px;height:7.3px;background:#555"></div>
<div style="left:517.3px;top:199.8px;width:67.6px;height:32.8px;background:#3a3a3a;border-left:1.8px solid #1a1a1a;border-top:2px solid #1a1a1a;box-sizing:border-box"></div>
<div style="left:521.6px;top:204.8px;width:7.3px;height:7.3px;background:#555"></div>
<div style="left:179.3px;top:232.6px;width:67.6px;height:32.8px;background:#3a3a3a;border-left:1.8px solid #1a1a1a;border-top:2px solid #1a1a1a;box-sizing:border-box"></div>
<div style="left:183.6px;top:237.6px;width:7.3px;height:7.3px;background:#555"></div>
<div style="left:246.9px;top:232.6px;width:67.6px;height:32.8px;background:#3a3a3a;border-left:1.8px solid #1a1a1a;border-top:2px solid #1a1a1a;box-sizing:border-box"></div>
<div style="left:251.2px;top:237.6px;width:7.3px;height:7.3px;background:#555"></div>
<div style="left:314.5px;top:232.6px;width:67.6px;height:32.8px;background:#3a3a3a;border-left:1.8px solid #1a1a1a;border-top:2px solid #1a1a1a;box-sizing:border-box"></div>
<div style="left:318.8px;top:237.6px;width:7.3px;height:7.3px;background:#555"></div>
<div style="left:382.1px;top:232.6px;width:67.6px;height:32.8px;background:#3a3a3a;border-left:1.8px solid #1a1a1a;border-top:2px solid #1a1a1a;box-sizing:border-box"></div>
<div style="left:386.4px;top:237.6px;width:7.3px;height:7.3px;background:#555"></div>
<div style="left:449.7px;top:232.6px;width:67.6px;height:32.8px;background:#3a3a3a;border-left:1.8px solid #1a1a1a;border-top:2px solid #1a1a1a;box-sizing:border-box"></div>
<div style="left:454px;top:237.6px;width:7.3px;height:7.3px;background:#555"></div>
<div style="left:517.3px;top:232.6px;width:67.6px;height:32.8px;background:#3a3a3a;border-left:1.8px solid #1a1a1a;border-top:2px solid #1a1a1a;box-sizing:border-box"></div>
<div style="left:521.6px;top:237.6px;width:7.3px;height:7.3px;background:#555"></div>
<div style="left:179.3px;top:265.4px;width:67.6px;height:32.8px;background:#3a3a3a;border-left:1.8px solid #1a1a1a;border-top:2px solid #1a1a1a;box-sizing:border-box"></div>
<div style="left:183.6px;top:270.4px;width:7.3px;height:7.3px;background:#555"></div>
<div style="left:246.9px;top:265.4px;width:67.6px;height:32.8px;background:#3a3a3a;border-left:1.8px solid #1a1a1a;border-top:2px solid #1a1a1a;box-sizing:border-box"></div>
<div style="left:251.2px;top:270.4px;width:7.3px;height:7.3px;background:#555"></div>
<div style="left:314.5px;top:265.4px;width:67.6px;height:32.8px;background:#3a3a3a;border-left:1.8px solid #1a1a1a;border-top:2px solid #1a1a1a;box-sizing:border-box"></div>
<div style="left:318.8px;top:270.4px;width:7.3px;height:7.3px;background:#555"></div>
<div style="left:382.1px;top:265.4px;width:67.6px;height:32.8px;background:#3a3a3a;border-left:1.8px solid #1a1a1a;border-top:2px solid #1a1a1a;box-sizing:border-box"></div>
<div style="left:386.4px;top:270.4px;width:7.3px;height:7.3px;background:#555"></div>
<div style="left:449.7px;top:265.4px;width:67.6px;height:32.8px;background:#3a3a3a;border-left:1.8px solid #1a1a1a;border-top:2px solid #1a1a1a;box-sizing:border-box"></div>
<div style="left:454px;top:270.4px;width:7.3px;height:7.3px;background:#555"></div>
<div style="left:517.3px;top:265.4px;width:67.6px;height:32.8px;background:#3a3a3a;border-left:1.8px solid #1a1a1a;border-top:2px solid #1a1a1a;box-sizing:border-box"></div>
<div style="left:521.6px;top:270.4px;width:7.3px;height:7.3px;background:#555"></div>
<div style="left:179.3px;top:298.2px;width:67.6px;height:32.8px;background:#3a3a3a;border-left:1.8px solid #1a1a1a;border-top:2px solid #1a1a1a;box-sizing:border-box"></div>
<div style="left:183.6px;top:303.2px;width:7.3px;height:7.3px;background:#555"></div>
<div style="left:246.9px;top:298.2px;width:67.6px;height:32.8px;background:#3a3a3a;border-left:1.8px solid #1a1a1a;border-top:2px solid #1a1a1a;box-sizing:border-box"></div>
<div style="left:251.2px;top:303.2px;width:7.3px;height:7.3px;background:#555"></div>
<div style="left:314.5px;top:298.2px;width:67.6px;height:32.8px;background:#3a3a3a;border-left:1.8px solid #1a1a1a;border-top:2px solid #1a1a1a;box-sizing:border-box"></div>
<div style="left:318.8px;top:303.2px;width:7.3px;height:7.3px;background:#555"></div>
<div style="left:382.1px;top:298.2px;width:67.6px;height:32.8px;background:#3a3a3a;border-left:1.8px solid #1a1a1a;border-top:2px solid #1a1a1a;box-sizing:border-box"></div>
<div style="left:386.4px;top:303.2px;width:7.3px;height:7.3px;background:#555"></div>
<div style="left:449.7px;top:298.2px;width:67.6px;height:32.8px;background:#3a3a3a;border-left:1.8px solid #1a1a1a;border-top:2px solid #1a1a1a;box-sizing:border-box"></div>
<div style="left:454px;top:303.2px;width:7.3px;height:7.3px;background:#555"></div>
<div style="left:517.3px;top:298.2px;width:67.6px;height:32.8px;background:#3a3a3a;border-left:1.8px solid #1a1a1a;border-top:2px solid #1a1a1a;box-sizing:border-box"></div>
<div style="left:521.6px;top:303.2px;width:7.3px;height:7.3px;background:#555"></div>
<div style="left:559.5px;top:-48px;width:6px;height:380px;background:#262626"></div>
<div style="left:161px;top:-47px;width:400px;height:17px;background:#474747"></div>
<div style="left:179.3px;top:-47px;width:1.6px;height:17px;background:#1d1d1d"></div>
<div style="left:184.3px;top:-42px;width:0;height:0;border-left:6px solid #999;border-top:4px solid transparent;border-bottom:4px solid transparent"></div>
<div class="t" style="left:194.3px;top:-42.04px;font-size:9.5px;color:#d8d8d8;font-weight:bold;">Scene 1</div>
<div style="left:246.9px;top:-47px;width:1.6px;height:17px;background:#1d1d1d"></div>
<div style="left:251.9px;top:-42px;width:0;height:0;border-left:6px solid #999;border-top:4px solid transparent;border-bottom:4px solid transparent"></div>
<div class="t" style="left:261.9px;top:-42.04px;font-size:9.5px;color:#d8d8d8;font-weight:bold;">Scene 2</div>
<div style="left:314.5px;top:-47px;width:1.6px;height:17px;background:#1d1d1d"></div>
<div style="left:319.5px;top:-42px;width:0;height:0;border-left:6px solid #999;border-top:4px solid transparent;border-bottom:4px solid transparent"></div>
<div class="t" style="left:329.5px;top:-42.04px;font-size:9.5px;color:#d8d8d8;font-weight:bold;">Scene 3</div>
<div style="left:382.1px;top:-47px;width:1.6px;height:17px;background:#1d1d1d"></div>
<div style="left:387.1px;top:-42px;width:0;height:0;border-left:6px solid #999;border-top:4px solid transparent;border-bottom:4px solid transparent"></div>
<div class="t" style="left:397.1px;top:-42.04px;font-size:9.5px;color:#d8d8d8;font-weight:bold;">Scene 4</div>
<div style="left:449.7px;top:-47px;width:1.6px;height:17px;background:#1d1d1d"></div>
<div style="left:454.7px;top:-42px;width:0;height:0;border-left:6px solid #999;border-top:4px solid transparent;border-bottom:4px solid transparent"></div>
<div class="t" style="left:464.7px;top:-42.04px;font-size:9.5px;color:#d8d8d8;font-weight:bold;">Scene 5</div>
<div style="left:517.3px;top:-47px;width:1.6px;height:17px;background:#1d1d1d"></div>
<div style="left:522.3px;top:-42px;width:0;height:0;border-left:6px solid #999;border-top:4px solid transparent;border-bottom:4px solid transparent"></div>
<div class="t" style="left:532.3px;top:-42.04px;font-size:9.5px;color:#d8d8d8;font-weight:bold;">Scene 6</div>
<div style="left:181.1px;top:4.8px;width:65.4px;height:30.2px;background:#b46ee6;border:1px solid rgba(255,255,255,0.25);border-radius:2px;box-sizing:border-box"></div>
<div style="left:184.3px;top:7.5px;width:0;height:0;border-left:7px solid rgba(0,0,0,0.45);border-top:4px solid transparent;border-bottom:4px solid transparent"></div>
<div class="t" style="left:194.3px;top:7.09px;font-size:9.7px;color:rgba(10,0,10,0.78);font-weight:normal;text-shadow:0.35px 0 0 rgba(10,0,10,0.6)">Untitled</div>
<div style="left:185.3px;top:23px;width:57.4px;height:1px;background:repeating-linear-gradient(90deg,rgba(0,0,0,0.13) 0 3px,transparent 3px 11px)"></div>
<div style="left:185.3px;top:26.5px;width:57.4px;height:1px;background:repeating-linear-gradient(90deg,rgba(0,0,0,0.1) 0 2px,transparent 2px 7px)"></div>
<div style="left:185.3px;top:30px;width:57.4px;height:1px;background:repeating-linear-gradient(90deg,rgba(0,0,0,0.13) 0 3px,transparent 3px 9px)"></div>
<div style="left:248.7px;top:4.8px;width:65.4px;height:30.2px;background:#b46ee6;border:1px solid rgba(255,255,255,0.25);border-radius:2px;box-sizing:border-box"></div>
<div style="left:251.9px;top:7.5px;width:0;height:0;border-left:7px solid rgba(0,0,0,0.45);border-top:4px solid transparent;border-bottom:4px solid transparent"></div>
<div class="t" style="left:261.9px;top:7.09px;font-size:9.7px;color:rgba(10,0,10,0.78);font-weight:normal;text-shadow:0.35px 0 0 rgba(10,0,10,0.6)">Untitled</div>
<div style="left:252.9px;top:23px;width:57.4px;height:1px;background:repeating-linear-gradient(90deg,rgba(0,0,0,0.13) 0 3px,transparent 3px 11px)"></div>
<div style="left:252.9px;top:26.5px;width:57.4px;height:1px;background:repeating-linear-gradient(90deg,rgba(0,0,0,0.1) 0 2px,transparent 2px 7px)"></div>
<div style="left:252.9px;top:30px;width:57.4px;height:1px;background:repeating-linear-gradient(90deg,rgba(0,0,0,0.13) 0 3px,transparent 3px 9px)"></div>
<div style="left:451.5px;top:4.8px;width:65.4px;height:30.2px;background:#b46ee6;border:1px solid rgba(255,255,255,0.25);border-radius:2px;box-sizing:border-box"></div>
<div style="left:454.7px;top:7.5px;width:0;height:0;border-left:7px solid rgba(0,0,0,0.45);border-top:4px solid transparent;border-bottom:4px solid transparent"></div>
<div class="t" style="left:464.7px;top:7.09px;font-size:9.7px;color:rgba(10,0,10,0.78);font-weight:normal;text-shadow:0.35px 0 0 rgba(10,0,10,0.6)">Untitled</div>
<div style="left:455.7px;top:23px;width:57.4px;height:1px;background:repeating-linear-gradient(90deg,rgba(0,0,0,0.13) 0 3px,transparent 3px 11px)"></div>
<div style="left:455.7px;top:26.5px;width:57.4px;height:1px;background:repeating-linear-gradient(90deg,rgba(0,0,0,0.1) 0 2px,transparent 2px 7px)"></div>
<div style="left:455.7px;top:30px;width:57.4px;height:1px;background:repeating-linear-gradient(90deg,rgba(0,0,0,0.13) 0 3px,transparent 3px 9px)"></div>
<div style="left:519.1px;top:4.8px;width:22.5px;height:30.2px;background:#b46ee6;border:1px solid rgba(255,255,255,0.25);border-radius:2px;box-sizing:border-box"></div>
<div style="left:522.3px;top:7.5px;width:0;height:0;border-left:7px solid rgba(0,0,0,0.45);border-top:4px solid transparent;border-bottom:4px solid transparent"></div>
<div class="t" style="left:532.3px;top:7.09px;font-size:9.7px;color:rgba(10,0,10,0.78);font-weight:normal;text-shadow:0.35px 0 0 rgba(10,0,10,0.6)">Untitled</div>
<div style="left:523.3px;top:23px;width:14.5px;height:1px;background:repeating-linear-gradient(90deg,rgba(0,0,0,0.13) 0 3px,transparent 3px 11px)"></div>
<div style="left:523.3px;top:26.5px;width:14.5px;height:1px;background:repeating-linear-gradient(90deg,rgba(0,0,0,0.1) 0 2px,transparent 2px 7px)"></div>
<div style="left:523.3px;top:30px;width:14.5px;height:1px;background:repeating-linear-gradient(90deg,rgba(0,0,0,0.13) 0 3px,transparent 3px 9px)"></div>
<div style="left:316.3px;top:37.6px;width:65.4px;height:30.2px;background:#d83030;border:1px solid rgba(255,255,255,0.25);border-radius:2px;box-sizing:border-box"></div>
<div style="left:319.5px;top:40.3px;width:0;height:0;border-left:7px solid rgba(0,0,0,0.45);border-top:4px solid transparent;border-bottom:4px solid transparent"></div>
<div class="t" style="left:329.5px;top:39.89px;font-size:9.7px;color:rgba(10,0,10,0.78);font-weight:normal;text-shadow:0.35px 0 0 rgba(10,0,10,0.6)">Untitled</div>
<div style="left:320.5px;top:55.8px;width:57.4px;height:1px;background:repeating-linear-gradient(90deg,rgba(0,0,0,0.13) 0 3px,transparent 3px 11px)"></div>
<div style="left:320.5px;top:59.3px;width:57.4px;height:1px;background:repeating-linear-gradient(90deg,rgba(0,0,0,0.1) 0 2px,transparent 2px 7px)"></div>
<div style="left:320.5px;top:62.8px;width:57.4px;height:1px;background:repeating-linear-gradient(90deg,rgba(0,0,0,0.13) 0 3px,transparent 3px 9px)"></div>
<div style="left:451.5px;top:37.6px;width:65.4px;height:30.2px;background:#5a5ad0;border:1px solid rgba(255,255,255,0.25);border-radius:2px;box-sizing:border-box"></div>
<div style="left:454.7px;top:40.3px;width:0;height:0;border-left:7px solid rgba(0,0,0,0.45);border-top:4px solid transparent;border-bottom:4px solid transparent"></div>
<div style="left:455.7px;top:55.8px;width:57.4px;height:1px;background:repeating-linear-gradient(90deg,rgba(0,0,0,0.13) 0 3px,transparent 3px 11px)"></div>
<div style="left:455.7px;top:59.3px;width:57.4px;height:1px;background:repeating-linear-gradient(90deg,rgba(0,0,0,0.1) 0 2px,transparent 2px 7px)"></div>
<div style="left:455.7px;top:62.8px;width:57.4px;height:1px;background:repeating-linear-gradient(90deg,rgba(0,0,0,0.13) 0 3px,transparent 3px 9px)"></div>
<div style="left:519.1px;top:37.6px;width:22.5px;height:30.2px;background:#5a5ad0;border:1px solid rgba(255,255,255,0.25);border-radius:2px;box-sizing:border-box"></div>
<div style="left:522.3px;top:40.3px;width:0;height:0;border-left:7px solid rgba(0,0,0,0.45);border-top:4px solid transparent;border-bottom:4px solid transparent"></div>
<div style="left:523.3px;top:55.8px;width:14.5px;height:1px;background:repeating-linear-gradient(90deg,rgba(0,0,0,0.13) 0 3px,transparent 3px 11px)"></div>
<div style="left:523.3px;top:59.3px;width:14.5px;height:1px;background:repeating-linear-gradient(90deg,rgba(0,0,0,0.1) 0 2px,transparent 2px 7px)"></div>
<div style="left:523.3px;top:62.8px;width:14.5px;height:1px;background:repeating-linear-gradient(90deg,rgba(0,0,0,0.13) 0 3px,transparent 3px 9px)"></div>
<div style="left:248.7px;top:103.2px;width:65.4px;height:30.2px;background:#d83030;border:1px solid rgba(255,255,255,0.25);border-radius:2px;box-sizing:border-box"></div>
<div style="left:251.9px;top:105.9px;width:0;height:0;border-left:7px solid rgba(0,0,0,0.45);border-top:4px solid transparent;border-bottom:4px solid transparent"></div>
<div class="t" style="left:261.9px;top:105.49px;font-size:9.7px;color:rgba(10,0,10,0.78);font-weight:normal;text-shadow:0.35px 0 0 rgba(10,0,10,0.6)">Untitled</div>
<div style="left:252.9px;top:121.4px;width:57.4px;height:1px;background:repeating-linear-gradient(90deg,rgba(0,0,0,0.13) 0 3px,transparent 3px 11px)"></div>
<div style="left:252.9px;top:124.9px;width:57.4px;height:1px;background:repeating-linear-gradient(90deg,rgba(0,0,0,0.1) 0 2px,transparent 2px 7px)"></div>
<div style="left:252.9px;top:128.4px;width:57.4px;height:1px;background:repeating-linear-gradient(90deg,rgba(0,0,0,0.13) 0 3px,transparent 3px 9px)"></div>
<div style="left:248.7px;top:136px;width:65.4px;height:30.2px;background:#6c9c22;border:1px solid rgba(255,255,255,0.25);border-radius:2px;box-sizing:border-box"></div>
<div style="left:251.9px;top:138.7px;width:0;height:0;border-left:7px solid rgba(0,0,0,0.45);border-top:4px solid transparent;border-bottom:4px solid transparent"></div>
<div class="t" style="left:261.9px;top:138.29px;font-size:9.7px;color:rgba(10,0,10,0.78);font-weight:normal;text-shadow:0.35px 0 0 rgba(10,0,10,0.6)">Untitled</div>
<div style="left:252.9px;top:154.2px;width:57.4px;height:1px;background:repeating-linear-gradient(90deg,rgba(0,0,0,0.13) 0 3px,transparent 3px 11px)"></div>
<div style="left:252.9px;top:157.7px;width:57.4px;height:1px;background:repeating-linear-gradient(90deg,rgba(0,0,0,0.1) 0 2px,transparent 2px 7px)"></div>
<div style="left:252.9px;top:161.2px;width:57.4px;height:1px;background:repeating-linear-gradient(90deg,rgba(0,0,0,0.13) 0 3px,transparent 3px 9px)"></div>
<div style="left:248.7px;top:168.8px;width:65.4px;height:30.2px;background:#dea216;border:1px solid rgba(255,255,255,0.25);border-radius:2px;box-sizing:border-box"></div>
<div style="left:251.9px;top:171.5px;width:0;height:0;border-left:7px solid rgba(0,0,0,0.45);border-top:4px solid transparent;border-bottom:4px solid transparent"></div>
<div class="t" style="left:261.9px;top:171.09px;font-size:9.7px;color:rgba(10,0,10,0.78);font-weight:normal;text-shadow:0.35px 0 0 rgba(10,0,10,0.6)">Untitled</div>
<div style="left:252.9px;top:187px;width:57.4px;height:1px;background:repeating-linear-gradient(90deg,rgba(0,0,0,0.13) 0 3px,transparent 3px 11px)"></div>
<div style="left:252.9px;top:190.5px;width:57.4px;height:1px;background:repeating-linear-gradient(90deg,rgba(0,0,0,0.1) 0 2px,transparent 2px 7px)"></div>
<div style="left:252.9px;top:194px;width:57.4px;height:1px;background:repeating-linear-gradient(90deg,rgba(0,0,0,0.13) 0 3px,transparent 3px 9px)"></div>
<div style="left:383.9px;top:168.8px;width:65.4px;height:30.2px;background:#dea216;border:1px solid rgba(255,255,255,0.25);border-radius:2px;box-sizing:border-box"></div>
<div style="left:387.1px;top:171.5px;width:0;height:0;border-left:7px solid rgba(0,0,0,0.45);border-top:4px solid transparent;border-bottom:4px solid transparent"></div>
<div class="t" style="left:397.1px;top:171.09px;font-size:9.7px;color:rgba(10,0,10,0.78);font-weight:normal;text-shadow:0.35px 0 0 rgba(10,0,10,0.6)">Untitled</div>
<div style="left:388.1px;top:187px;width:57.4px;height:1px;background:repeating-linear-gradient(90deg,rgba(0,0,0,0.13) 0 3px,transparent 3px 11px)"></div>
<div style="left:388.1px;top:190.5px;width:57.4px;height:1px;background:repeating-linear-gradient(90deg,rgba(0,0,0,0.1) 0 2px,transparent 2px 7px)"></div>
<div style="left:388.1px;top:194px;width:57.4px;height:1px;background:repeating-linear-gradient(90deg,rgba(0,0,0,0.13) 0 3px,transparent 3px 9px)"></div>
<div style="left:451.5px;top:168.8px;width:65.4px;height:30.2px;background:#dea216;border:1px solid rgba(255,255,255,0.25);border-radius:2px;box-sizing:border-box"></div>
<div style="left:454.7px;top:171.5px;width:0;height:0;border-left:7px solid rgba(0,0,0,0.45);border-top:4px solid transparent;border-bottom:4px solid transparent"></div>
<div class="t" style="left:464.7px;top:171.09px;font-size:9.7px;color:rgba(10,0,10,0.78);font-weight:normal;text-shadow:0.35px 0 0 rgba(10,0,10,0.6)">Untitled</div>
<div style="left:455.7px;top:187px;width:57.4px;height:1px;background:repeating-linear-gradient(90deg,rgba(0,0,0,0.13) 0 3px,transparent 3px 11px)"></div>
<div style="left:455.7px;top:190.5px;width:57.4px;height:1px;background:repeating-linear-gradient(90deg,rgba(0,0,0,0.1) 0 2px,transparent 2px 7px)"></div>
<div style="left:455.7px;top:194px;width:57.4px;height:1px;background:repeating-linear-gradient(90deg,rgba(0,0,0,0.13) 0 3px,transparent 3px 9px)"></div>
<div style="left:519.1px;top:168.8px;width:22.5px;height:30.2px;background:#dea216;border:1px solid rgba(255,255,255,0.25);border-radius:2px;box-sizing:border-box"></div>
<div style="left:522.3px;top:171.5px;width:0;height:0;border-left:7px solid rgba(0,0,0,0.45);border-top:4px solid transparent;border-bottom:4px solid transparent"></div>
<div class="t" style="left:532.3px;top:171.09px;font-size:9.7px;color:rgba(10,0,10,0.78);font-weight:normal;text-shadow:0.35px 0 0 rgba(10,0,10,0.6)">Untitled</div>
<div style="left:523.3px;top:187px;width:14.5px;height:1px;background:repeating-linear-gradient(90deg,rgba(0,0,0,0.13) 0 3px,transparent 3px 11px)"></div>
<div style="left:523.3px;top:190.5px;width:14.5px;height:1px;background:repeating-linear-gradient(90deg,rgba(0,0,0,0.1) 0 2px,transparent 2px 7px)"></div>
<div style="left:523.3px;top:194px;width:14.5px;height:1px;background:repeating-linear-gradient(90deg,rgba(0,0,0,0.13) 0 3px,transparent 3px 9px)"></div>
<div style="left:181.1px;top:234.4px;width:65.4px;height:30.2px;background:#f25a10;border:1px solid rgba(255,255,255,0.25);border-radius:2px;box-sizing:border-box"></div>
<div style="left:184.3px;top:237.1px;width:0;height:0;border-left:7px solid rgba(0,0,0,0.45);border-top:4px solid transparent;border-bottom:4px solid transparent"></div>
<div class="t" style="left:194.3px;top:236.69px;font-size:9.7px;color:rgba(10,0,10,0.78);font-weight:normal;text-shadow:0.35px 0 0 rgba(10,0,10,0.6)">Untitled</div>
<div style="left:185.3px;top:252.6px;width:57.4px;height:1px;background:repeating-linear-gradient(90deg,rgba(0,0,0,0.13) 0 3px,transparent 3px 11px)"></div>
<div style="left:185.3px;top:256.1px;width:57.4px;height:1px;background:repeating-linear-gradient(90deg,rgba(0,0,0,0.1) 0 2px,transparent 2px 7px)"></div>
<div style="left:185.3px;top:259.6px;width:57.4px;height:1px;background:repeating-linear-gradient(90deg,rgba(0,0,0,0.13) 0 3px,transparent 3px 9px)"></div>
<div style="left:248.7px;top:234.4px;width:65.4px;height:30.2px;background:#f25a10;border:1px solid rgba(255,255,255,0.25);border-radius:2px;box-sizing:border-box"></div>
<div style="left:251.9px;top:237.1px;width:0;height:0;border-left:7px solid rgba(0,0,0,0.45);border-top:4px solid transparent;border-bottom:4px solid transparent"></div>
<div class="t" style="left:261.9px;top:236.69px;font-size:9.7px;color:rgba(10,0,10,0.78);font-weight:normal;text-shadow:0.35px 0 0 rgba(10,0,10,0.6)">Untitled</div>
<div style="left:252.9px;top:252.6px;width:57.4px;height:1px;background:repeating-linear-gradient(90deg,rgba(0,0,0,0.13) 0 3px,transparent 3px 11px)"></div>
<div style="left:252.9px;top:256.1px;width:57.4px;height:1px;background:repeating-linear-gradient(90deg,rgba(0,0,0,0.1) 0 2px,transparent 2px 7px)"></div>
<div style="left:252.9px;top:259.6px;width:57.4px;height:1px;background:repeating-linear-gradient(90deg,rgba(0,0,0,0.13) 0 3px,transparent 3px 9px)"></div>
<div style="left:383.9px;top:234.4px;width:65.4px;height:30.2px;background:#f25a10;border:1px solid rgba(255,255,255,0.25);border-radius:2px;box-sizing:border-box"></div>
<div style="left:387.1px;top:237.1px;width:0;height:0;border-left:7px solid rgba(0,0,0,0.45);border-top:4px solid transparent;border-bottom:4px solid transparent"></div>
<div class="t" style="left:397.1px;top:236.69px;font-size:9.7px;color:rgba(10,0,10,0.78);font-weight:normal;text-shadow:0.35px 0 0 rgba(10,0,10,0.6)">Untitled</div>
<div style="left:388.1px;top:252.6px;width:57.4px;height:1px;background:repeating-linear-gradient(90deg,rgba(0,0,0,0.13) 0 3px,transparent 3px 11px)"></div>
<div style="left:388.1px;top:256.1px;width:57.4px;height:1px;background:repeating-linear-gradient(90deg,rgba(0,0,0,0.1) 0 2px,transparent 2px 7px)"></div>
<div style="left:388.1px;top:259.6px;width:57.4px;height:1px;background:repeating-linear-gradient(90deg,rgba(0,0,0,0.13) 0 3px,transparent 3px 9px)"></div>
<div style="left:451.5px;top:234.4px;width:65.4px;height:30.2px;background:#f25a10;border:1px solid rgba(255,255,255,0.25);border-radius:2px;box-sizing:border-box"></div>
<div style="left:454.7px;top:237.1px;width:0;height:0;border-left:7px solid rgba(0,0,0,0.45);border-top:4px solid transparent;border-bottom:4px solid transparent"></div>
<div class="t" style="left:464.7px;top:236.69px;font-size:9.7px;color:rgba(10,0,10,0.78);font-weight:normal;text-shadow:0.35px 0 0 rgba(10,0,10,0.6)">Untitled</div>
<div style="left:455.7px;top:252.6px;width:57.4px;height:1px;background:repeating-linear-gradient(90deg,rgba(0,0,0,0.13) 0 3px,transparent 3px 11px)"></div>
<div style="left:455.7px;top:256.1px;width:57.4px;height:1px;background:repeating-linear-gradient(90deg,rgba(0,0,0,0.1) 0 2px,transparent 2px 7px)"></div>
<div style="left:455.7px;top:259.6px;width:57.4px;height:1px;background:repeating-linear-gradient(90deg,rgba(0,0,0,0.13) 0 3px,transparent 3px 9px)"></div>
<div style="left:519.1px;top:234.4px;width:22.5px;height:30.2px;background:#f25a10;border:1px solid rgba(255,255,255,0.25);border-radius:2px;box-sizing:border-box"></div>
<div style="left:522.3px;top:237.1px;width:0;height:0;border-left:7px solid rgba(0,0,0,0.45);border-top:4px solid transparent;border-bottom:4px solid transparent"></div>
<div class="t" style="left:532.3px;top:236.69px;font-size:9.7px;color:rgba(10,0,10,0.78);font-weight:normal;text-shadow:0.35px 0 0 rgba(10,0,10,0.6)">Untitled</div>
<div style="left:523.3px;top:252.6px;width:14.5px;height:1px;background:repeating-linear-gradient(90deg,rgba(0,0,0,0.13) 0 3px,transparent 3px 11px)"></div>
<div style="left:523.3px;top:256.1px;width:14.5px;height:1px;background:repeating-linear-gradient(90deg,rgba(0,0,0,0.1) 0 2px,transparent 2px 7px)"></div>
<div style="left:523.3px;top:259.6px;width:14.5px;height:1px;background:repeating-linear-gradient(90deg,rgba(0,0,0,0.13) 0 3px,transparent 3px 9px)"></div>
<div style="left:316.3px;top:267.2px;width:65.4px;height:30.2px;background:#f25a10;border:1px solid rgba(255,255,255,0.25);border-radius:2px;box-sizing:border-box"></div>
<div style="left:319.5px;top:269.9px;width:0;height:0;border-left:7px solid rgba(0,0,0,0.45);border-top:4px solid transparent;border-bottom:4px solid transparent"></div>
<div class="t" style="left:329.5px;top:269.49px;font-size:9.7px;color:rgba(10,0,10,0.78);font-weight:normal;text-shadow:0.35px 0 0 rgba(10,0,10,0.6)">Untitled</div>
<div style="left:320.5px;top:285.4px;width:57.4px;height:1px;background:repeating-linear-gradient(90deg,rgba(0,0,0,0.13) 0 3px,transparent 3px 11px)"></div>
<div style="left:320.5px;top:288.9px;width:57.4px;height:1px;background:repeating-linear-gradient(90deg,rgba(0,0,0,0.1) 0 2px,transparent 2px 7px)"></div>
<div style="left:320.5px;top:292.4px;width:57.4px;height:1px;background:repeating-linear-gradient(90deg,rgba(0,0,0,0.13) 0 3px,transparent 3px 9px)"></div>
<div style="left:383.9px;top:267.2px;width:65.4px;height:30.2px;background:#f25a10;border:1px solid rgba(255,255,255,0.25);border-radius:2px;box-sizing:border-box"></div>
<div style="left:387.1px;top:269.9px;width:0;height:0;border-left:7px solid rgba(0,0,0,0.45);border-top:4px solid transparent;border-bottom:4px solid transparent"></div>
<div class="t" style="left:397.1px;top:269.49px;font-size:9.7px;color:rgba(10,0,10,0.78);font-weight:normal;text-shadow:0.35px 0 0 rgba(10,0,10,0.6)">Untitled</div>
<div style="left:388.1px;top:285.4px;width:57.4px;height:1px;background:repeating-linear-gradient(90deg,rgba(0,0,0,0.13) 0 3px,transparent 3px 11px)"></div>
<div style="left:388.1px;top:288.9px;width:57.4px;height:1px;background:repeating-linear-gradient(90deg,rgba(0,0,0,0.1) 0 2px,transparent 2px 7px)"></div>
<div style="left:388.1px;top:292.4px;width:57.4px;height:1px;background:repeating-linear-gradient(90deg,rgba(0,0,0,0.13) 0 3px,transparent 3px 9px)"></div>
<div style="left:451.5px;top:267.2px;width:65.4px;height:30.2px;background:#f25a10;border:1px solid rgba(255,255,255,0.25);border-radius:2px;box-sizing:border-box"></div>
<div style="left:454.7px;top:269.9px;width:0;height:0;border-left:7px solid rgba(0,0,0,0.45);border-top:4px solid transparent;border-bottom:4px solid transparent"></div>
<div class="t" style="left:464.7px;top:269.49px;font-size:9.7px;color:rgba(10,0,10,0.78);font-weight:normal;text-shadow:0.35px 0 0 rgba(10,0,10,0.6)">Untitled</div>
<div style="left:455.7px;top:285.4px;width:57.4px;height:1px;background:repeating-linear-gradient(90deg,rgba(0,0,0,0.13) 0 3px,transparent 3px 11px)"></div>
<div style="left:455.7px;top:288.9px;width:57.4px;height:1px;background:repeating-linear-gradient(90deg,rgba(0,0,0,0.1) 0 2px,transparent 2px 7px)"></div>
<div style="left:455.7px;top:292.4px;width:57.4px;height:1px;background:repeating-linear-gradient(90deg,rgba(0,0,0,0.13) 0 3px,transparent 3px 9px)"></div>
<div style="left:519.1px;top:267.2px;width:22.5px;height:30.2px;background:#f25a10;border:1px solid rgba(255,255,255,0.25);border-radius:2px;box-sizing:border-box"></div>
<div style="left:522.3px;top:269.9px;width:0;height:0;border-left:7px solid rgba(0,0,0,0.45);border-top:4px solid transparent;border-bottom:4px solid transparent"></div>
<div class="t" style="left:532.3px;top:269.49px;font-size:9.7px;color:rgba(10,0,10,0.78);font-weight:normal;text-shadow:0.35px 0 0 rgba(10,0,10,0.6)">Untitled</div>
<div style="left:523.3px;top:285.4px;width:14.5px;height:1px;background:repeating-linear-gradient(90deg,rgba(0,0,0,0.13) 0 3px,transparent 3px 11px)"></div>
<div style="left:523.3px;top:288.9px;width:14.5px;height:1px;background:repeating-linear-gradient(90deg,rgba(0,0,0,0.1) 0 2px,transparent 2px 7px)"></div>
<div style="left:523.3px;top:292.4px;width:14.5px;height:1px;background:repeating-linear-gradient(90deg,rgba(0,0,0,0.13) 0 3px,transparent 3px 9px)"></div>
<div style="left:316.3px;top:300px;width:65.4px;height:30.2px;background:#dea216;border:1px solid rgba(255,255,255,0.25);border-radius:2px;box-sizing:border-box"></div>
<div style="left:319.5px;top:302.7px;width:0;height:0;border-left:7px solid rgba(0,0,0,0.45);border-top:4px solid transparent;border-bottom:4px solid transparent"></div>
<div class="t" style="left:329.5px;top:302.29px;font-size:9.7px;color:rgba(10,0,10,0.78);font-weight:normal;text-shadow:0.35px 0 0 rgba(10,0,10,0.6)">Untitled</div>
<div style="left:320.5px;top:318.2px;width:57.4px;height:1px;background:repeating-linear-gradient(90deg,rgba(0,0,0,0.13) 0 3px,transparent 3px 11px)"></div>
<div style="left:320.5px;top:321.7px;width:57.4px;height:1px;background:repeating-linear-gradient(90deg,rgba(0,0,0,0.1) 0 2px,transparent 2px 7px)"></div>
<div style="left:320.5px;top:325.2px;width:57.4px;height:1px;background:repeating-linear-gradient(90deg,rgba(0,0,0,0.13) 0 3px,transparent 3px 9px)"></div>
<div style="left:383.9px;top:300px;width:65.4px;height:30.2px;background:#dea216;border:1px solid rgba(255,255,255,0.25);border-radius:2px;box-sizing:border-box"></div>
<div style="left:387.1px;top:302.7px;width:0;height:0;border-left:7px solid rgba(0,0,0,0.45);border-top:4px solid transparent;border-bottom:4px solid transparent"></div>
<div class="t" style="left:397.1px;top:302.29px;font-size:9.7px;color:rgba(10,0,10,0.78);font-weight:normal;text-shadow:0.35px 0 0 rgba(10,0,10,0.6)">Untitled</div>
<div style="left:388.1px;top:318.2px;width:57.4px;height:1px;background:repeating-linear-gradient(90deg,rgba(0,0,0,0.13) 0 3px,transparent 3px 11px)"></div>
<div style="left:388.1px;top:321.7px;width:57.4px;height:1px;background:repeating-linear-gradient(90deg,rgba(0,0,0,0.1) 0 2px,transparent 2px 7px)"></div>
<div style="left:388.1px;top:325.2px;width:57.4px;height:1px;background:repeating-linear-gradient(90deg,rgba(0,0,0,0.13) 0 3px,transparent 3px 9px)"></div>
<div style="left:451.5px;top:300px;width:65.4px;height:30.2px;background:#dea216;border:1px solid rgba(255,255,255,0.25);border-radius:2px;box-sizing:border-box"></div>
<div style="left:454.7px;top:302.7px;width:0;height:0;border-left:7px solid rgba(0,0,0,0.45);border-top:4px solid transparent;border-bottom:4px solid transparent"></div>
<div class="t" style="left:464.7px;top:302.29px;font-size:9.7px;color:rgba(10,0,10,0.78);font-weight:normal;text-shadow:0.35px 0 0 rgba(10,0,10,0.6)">Untitled</div>
<div style="left:455.7px;top:318.2px;width:57.4px;height:1px;background:repeating-linear-gradient(90deg,rgba(0,0,0,0.13) 0 3px,transparent 3px 11px)"></div>
<div style="left:455.7px;top:321.7px;width:57.4px;height:1px;background:repeating-linear-gradient(90deg,rgba(0,0,0,0.1) 0 2px,transparent 2px 7px)"></div>
<div style="left:455.7px;top:325.2px;width:57.4px;height:1px;background:repeating-linear-gradient(90deg,rgba(0,0,0,0.13) 0 3px,transparent 3px 9px)"></div>
<div style="left:519.1px;top:300px;width:22.5px;height:30.2px;background:#dea216;border:1px solid rgba(255,255,255,0.25);border-radius:2px;box-sizing:border-box"></div>
<div style="left:522.3px;top:302.7px;width:0;height:0;border-left:7px solid rgba(0,0,0,0.45);border-top:4px solid transparent;border-bottom:4px solid transparent"></div>
<div class="t" style="left:532.3px;top:302.29px;font-size:9.7px;color:rgba(10,0,10,0.78);font-weight:normal;text-shadow:0.35px 0 0 rgba(10,0,10,0.6)">Untitled</div>
<div style="left:523.3px;top:318.2px;width:14.5px;height:1px;background:repeating-linear-gradient(90deg,rgba(0,0,0,0.13) 0 3px,transparent 3px 11px)"></div>
<div style="left:523.3px;top:321.7px;width:14.5px;height:1px;background:repeating-linear-gradient(90deg,rgba(0,0,0,0.1) 0 2px,transparent 2px 7px)"></div>
<div style="left:523.3px;top:325.2px;width:14.5px;height:1px;background:repeating-linear-gradient(90deg,rgba(0,0,0,0.13) 0 3px,transparent 3px 9px)"></div>
<div style="left:181.1px;top:-28px;width:65.4px;height:30.2px;background:#d82e28;border:1px solid rgba(255,255,255,0.25);border-radius:2px;box-sizing:border-box"></div>
<div style="left:184.3px;top:-25.3px;width:0;height:0;border-left:7px solid rgba(0,0,0,0.45);border-top:4px solid transparent;border-bottom:4px solid transparent"></div>
<div class="t" style="left:194.3px;top:-25.71px;font-size:9.7px;color:rgba(10,0,10,0.78);font-weight:normal;text-shadow:0.35px 0 0 rgba(10,0,10,0.6)">Untitled</div>
<div style="left:185.3px;top:-9.8px;width:57.4px;height:1px;background:repeating-linear-gradient(90deg,rgba(0,0,0,0.13) 0 3px,transparent 3px 11px)"></div>
<div style="left:185.3px;top:-6.3px;width:57.4px;height:1px;background:repeating-linear-gradient(90deg,rgba(0,0,0,0.1) 0 2px,transparent 2px 7px)"></div>
<div style="left:185.3px;top:-2.8px;width:57.4px;height:1px;background:repeating-linear-gradient(90deg,rgba(0,0,0,0.13) 0 3px,transparent 3px 9px)"></div>
<div style="left:539px;top:-29.8px;width:3px;height:32.8px;background:linear-gradient(90deg,rgba(58,58,58,0),rgba(58,58,58,0.8))"></div>
<div style="left:541.8px;top:-29.8px;width:19px;height:32.8px;background:rgba(66,66,66,0.94);border-top:2px solid #1a1a1a;border-left:1.6px solid #1d1d1d;box-sizing:border-box"></div>
<div style="left:546px;top:-23.8px;width:9px;height:1.4px;background:#6a6a6a"></div>
<div style="left:546px;top:-20.8px;width:9px;height:1.4px;background:#6a6a6a"></div>
<div style="left:546px;top:-17.8px;width:9px;height:1.4px;background:#6a6a6a"></div>
<div style="left:546px;top:-14.8px;width:5px;height:1.4px;background:#6a6a6a"></div>
<div style="left:539px;top:3px;width:3px;height:32.8px;background:linear-gradient(90deg,rgba(58,58,58,0),rgba(58,58,58,0.8))"></div>
<div style="left:541.8px;top:3px;width:19px;height:32.8px;background:rgba(66,66,66,0.94);border-top:2px solid #1a1a1a;border-left:1.6px solid #1d1d1d;box-sizing:border-box"></div>
<div style="left:546px;top:9px;width:9px;height:1.4px;background:#6a6a6a"></div>
<div style="left:546px;top:12px;width:9px;height:1.4px;background:#6a6a6a"></div>
<div style="left:546px;top:15px;width:9px;height:1.4px;background:#6a6a6a"></div>
<div style="left:546px;top:18px;width:5px;height:1.4px;background:#6a6a6a"></div>
<div style="left:539px;top:35.8px;width:3px;height:32.8px;background:linear-gradient(90deg,rgba(58,58,58,0),rgba(58,58,58,0.8))"></div>
<div style="left:541.8px;top:35.8px;width:19px;height:32.8px;background:rgba(66,66,66,0.94);border-top:2px solid #1a1a1a;border-left:1.6px solid #1d1d1d;box-sizing:border-box"></div>
<div style="left:546px;top:41.8px;width:9px;height:1.4px;background:#6a6a6a"></div>
<div style="left:546px;top:44.8px;width:9px;height:1.4px;background:#6a6a6a"></div>
<div style="left:546px;top:47.8px;width:9px;height:1.4px;background:#6a6a6a"></div>
<div style="left:546px;top:50.8px;width:5px;height:1.4px;background:#6a6a6a"></div>
<div style="left:539px;top:68.6px;width:3px;height:32.8px;background:linear-gradient(90deg,rgba(58,58,58,0),rgba(58,58,58,0.8))"></div>
<div style="left:541.8px;top:68.6px;width:19px;height:32.8px;background:rgba(66,66,66,0.94);border-top:2px solid #1a1a1a;border-left:1.6px solid #1d1d1d;box-sizing:border-box"></div>
<div style="left:546px;top:74.6px;width:9px;height:1.4px;background:#6a6a6a"></div>
<div style="left:546px;top:77.6px;width:9px;height:1.4px;background:#6a6a6a"></div>
<div style="left:546px;top:80.6px;width:9px;height:1.4px;background:#6a6a6a"></div>
<div style="left:546px;top:83.6px;width:5px;height:1.4px;background:#6a6a6a"></div>
<div style="left:539px;top:101.4px;width:3px;height:32.8px;background:linear-gradient(90deg,rgba(58,58,58,0),rgba(58,58,58,0.8))"></div>
<div style="left:541.8px;top:101.4px;width:19px;height:32.8px;background:rgba(66,66,66,0.94);border-top:2px solid #1a1a1a;border-left:1.6px solid #1d1d1d;box-sizing:border-box"></div>
<div style="left:546px;top:107.4px;width:9px;height:1.4px;background:#6a6a6a"></div>
<div style="left:546px;top:110.4px;width:9px;height:1.4px;background:#6a6a6a"></div>
<div style="left:546px;top:113.4px;width:9px;height:1.4px;background:#6a6a6a"></div>
<div style="left:546px;top:116.4px;width:5px;height:1.4px;background:#6a6a6a"></div>
<div style="left:539px;top:134.2px;width:3px;height:32.8px;background:linear-gradient(90deg,rgba(58,58,58,0),rgba(58,58,58,0.8))"></div>
<div style="left:541.8px;top:134.2px;width:19px;height:32.8px;background:rgba(66,66,66,0.94);border-top:2px solid #1a1a1a;border-left:1.6px solid #1d1d1d;box-sizing:border-box"></div>
<div style="left:546px;top:140.2px;width:9px;height:1.4px;background:#6a6a6a"></div>
<div style="left:546px;top:143.2px;width:9px;height:1.4px;background:#6a6a6a"></div>
<div style="left:546px;top:146.2px;width:9px;height:1.4px;background:#6a6a6a"></div>
<div style="left:546px;top:149.2px;width:5px;height:1.4px;background:#6a6a6a"></div>
<div style="left:539px;top:167px;width:3px;height:32.8px;background:linear-gradient(90deg,rgba(58,58,58,0),rgba(58,58,58,0.8))"></div>
<div style="left:541.8px;top:167px;width:19px;height:32.8px;background:rgba(66,66,66,0.94);border-top:2px solid #1a1a1a;border-left:1.6px solid #1d1d1d;box-sizing:border-box"></div>
<div style="left:546px;top:173px;width:9px;height:1.4px;background:#6a6a6a"></div>
<div style="left:546px;top:176px;width:9px;height:1.4px;background:#6a6a6a"></div>
<div style="left:546px;top:179px;width:9px;height:1.4px;background:#6a6a6a"></div>
<div style="left:546px;top:182px;width:5px;height:1.4px;background:#6a6a6a"></div>
<div style="left:539px;top:199.8px;width:3px;height:32.8px;background:linear-gradient(90deg,rgba(58,58,58,0),rgba(58,58,58,0.8))"></div>
<div style="left:541.8px;top:199.8px;width:19px;height:32.8px;background:rgba(66,66,66,0.94);border-top:2px solid #1a1a1a;border-left:1.6px solid #1d1d1d;box-sizing:border-box"></div>
<div style="left:546px;top:205.8px;width:9px;height:1.4px;background:#6a6a6a"></div>
<div style="left:546px;top:208.8px;width:9px;height:1.4px;background:#6a6a6a"></div>
<div style="left:546px;top:211.8px;width:9px;height:1.4px;background:#6a6a6a"></div>
<div style="left:546px;top:214.8px;width:5px;height:1.4px;background:#6a6a6a"></div>
<div style="left:539px;top:232.6px;width:3px;height:32.8px;background:linear-gradient(90deg,rgba(58,58,58,0),rgba(58,58,58,0.8))"></div>
<div style="left:541.8px;top:232.6px;width:19px;height:32.8px;background:rgba(66,66,66,0.94);border-top:2px solid #1a1a1a;border-left:1.6px solid #1d1d1d;box-sizing:border-box"></div>
<div style="left:546px;top:238.6px;width:9px;height:1.4px;background:#6a6a6a"></div>
<div style="left:546px;top:241.6px;width:9px;height:1.4px;background:#6a6a6a"></div>
<div style="left:546px;top:244.6px;width:9px;height:1.4px;background:#6a6a6a"></div>
<div style="left:546px;top:247.6px;width:5px;height:1.4px;background:#6a6a6a"></div>
<div style="left:539px;top:265.4px;width:3px;height:32.8px;background:linear-gradient(90deg,rgba(58,58,58,0),rgba(58,58,58,0.8))"></div>
<div style="left:541.8px;top:265.4px;width:19px;height:32.8px;background:rgba(66,66,66,0.94);border-top:2px solid #1a1a1a;border-left:1.6px solid #1d1d1d;box-sizing:border-box"></div>
<div style="left:546px;top:271.4px;width:9px;height:1.4px;background:#6a6a6a"></div>
<div style="left:546px;top:274.4px;width:9px;height:1.4px;background:#6a6a6a"></div>
<div style="left:546px;top:277.4px;width:9px;height:1.4px;background:#6a6a6a"></div>
<div style="left:546px;top:280.4px;width:5px;height:1.4px;background:#6a6a6a"></div>
<div style="left:539px;top:298.2px;width:3px;height:32.8px;background:linear-gradient(90deg,rgba(58,58,58,0),rgba(58,58,58,0.8))"></div>
<div style="left:541.8px;top:298.2px;width:19px;height:32.8px;background:rgba(66,66,66,0.94);border-top:2px solid #1a1a1a;border-left:1.6px solid #1d1d1d;box-sizing:border-box"></div>
<div style="left:546px;top:304.2px;width:9px;height:1.4px;background:#6a6a6a"></div>
<div style="left:546px;top:307.2px;width:9px;height:1.4px;background:#6a6a6a"></div>
<div style="left:546px;top:310.2px;width:9px;height:1.4px;background:#6a6a6a"></div>
<div style="left:546px;top:313.2px;width:5px;height:1.4px;background:#6a6a6a"></div>
<div style="left:541.8px;top:-47px;width:19px;height:17px;background:rgba(66,66,66,0.94)"></div>
<div style="left:546px;top:-43px;width:9px;height:1.4px;background:#6a6a6a"></div>
<div style="left:546px;top:-40px;width:9px;height:1.4px;background:#6a6a6a"></div>
<div style="left:546px;top:-37px;width:9px;height:1.4px;background:#6a6a6a"></div>
<div style="left:546px;top:-34px;width:5px;height:1.4px;background:#6a6a6a"></div>
<div style="left:251.4px;top:-24.8px;width:6.8px;height:6.8px;background:#a0a0a0;border-radius:50%;border:1px solid #555;box-sizing:border-box"></div>
<div style="left:319px;top:-24.8px;width:6.8px;height:6.8px;background:#a0a0a0;border-radius:50%;border:1px solid #555;box-sizing:border-box"></div>
<div style="left:386.6px;top:-24.8px;width:6.8px;height:6.8px;background:#a0a0a0;border-radius:50%;border:1px solid #555;box-sizing:border-box"></div>
<div style="left:454.2px;top:-24.8px;width:6.8px;height:6.8px;background:#a0a0a0;border-radius:50%;border:1px solid #555;box-sizing:border-box"></div>
<div style="left:521.8px;top:-24.8px;width:6.8px;height:6.8px;background:#a0a0a0;border-radius:50%;border:1px solid #555;box-sizing:border-box"></div>
<div style="left:6px;top:331.5px;width:555px;height:13px;background:#3a3a3a"></div>
<div style="left:565px;top:-47px;width:398.5px;height:19px;background:#2a2a2a"></div>
<div style="left:565px;top:-35.5px;width:398.5px;height:6.5px;background:#8c8c8c"></div>
<div style="left:565px;top:-28px;width:398.5px;height:356px;background:#b7b7b7"></div>
<div style="left:565px;top:-51px;width:398.5px;height:2.5px;background:#8a8a8a"></div>
<div style="left:586.26px;top:-32px;width:323.87px;height:3px;background:#6a6a6a"></div>
<div class="t" style="left:568.3px;top:-46.63px;font-size:9.6px;color:#cfcfcf;font-weight:normal;">1</div>
<div style="left:565.5px;top:-48.5px;width:1px;height:13px;background:#1e1e1e"></div>
<div style="left:565.5px;top:-28px;width:1px;height:356px;background:#a9a9a9"></div>
<div class="t" style="left:592px;top:-46.63px;font-size:9.6px;color:#cfcfcf;font-weight:normal;">9</div>
<div style="left:589.2px;top:-48.5px;width:1px;height:13px;background:#1e1e1e"></div>
<div style="left:589.2px;top:-28px;width:1px;height:356px;background:#a9a9a9"></div>
<div class="t" style="left:615.7px;top:-46.63px;font-size:9.6px;color:#cfcfcf;font-weight:normal;">17</div>
<div style="left:612.9px;top:-48.5px;width:1px;height:13px;background:#1e1e1e"></div>
<div style="left:612.9px;top:-28px;width:1px;height:356px;background:#a9a9a9"></div>
<div class="t" style="left:639.4px;top:-46.63px;font-size:9.6px;color:#cfcfcf;font-weight:normal;">25</div>
<div style="left:636.6px;top:-48.5px;width:1px;height:13px;background:#1e1e1e"></div>
<div style="left:636.6px;top:-28px;width:1px;height:356px;background:#a9a9a9"></div>
<div class="t" style="left:663.1px;top:-46.63px;font-size:9.6px;color:#cfcfcf;font-weight:normal;">33</div>
<div style="left:660.3px;top:-48.5px;width:1px;height:13px;background:#1e1e1e"></div>
<div style="left:660.3px;top:-28px;width:1px;height:356px;background:#a9a9a9"></div>
<div class="t" style="left:686.8px;top:-46.63px;font-size:9.6px;color:#cfcfcf;font-weight:normal;">41</div>
<div style="left:684px;top:-48.5px;width:1px;height:13px;background:#1e1e1e"></div>
<div style="left:684px;top:-28px;width:1px;height:356px;background:#a9a9a9"></div>
<div class="t" style="left:710.5px;top:-46.63px;font-size:9.6px;color:#cfcfcf;font-weight:normal;">49</div>
<div style="left:707.7px;top:-48.5px;width:1px;height:13px;background:#1e1e1e"></div>
<div style="left:707.7px;top:-28px;width:1px;height:356px;background:#a9a9a9"></div>
<div class="t" style="left:734.2px;top:-46.63px;font-size:9.6px;color:#cfcfcf;font-weight:normal;">57</div>
<div style="left:731.4px;top:-48.5px;width:1px;height:13px;background:#1e1e1e"></div>
<div style="left:731.4px;top:-28px;width:1px;height:356px;background:#a9a9a9"></div>
<div class="t" style="left:757.9px;top:-46.63px;font-size:9.6px;color:#cfcfcf;font-weight:normal;">65</div>
<div style="left:755.1px;top:-48.5px;width:1px;height:13px;background:#1e1e1e"></div>
<div style="left:755.1px;top:-28px;width:1px;height:356px;background:#a9a9a9"></div>
<div class="t" style="left:781.6px;top:-46.63px;font-size:9.6px;color:#cfcfcf;font-weight:normal;">73</div>
<div style="left:778.8px;top:-48.5px;width:1px;height:13px;background:#1e1e1e"></div>
<div style="left:778.8px;top:-28px;width:1px;height:356px;background:#a9a9a9"></div>
<div class="t" style="left:805.3px;top:-46.63px;font-size:9.6px;color:#cfcfcf;font-weight:normal;">81</div>
<div style="left:802.5px;top:-48.5px;width:1px;height:13px;background:#1e1e1e"></div>
<div style="left:802.5px;top:-28px;width:1px;height:356px;background:#a9a9a9"></div>
<div class="t" style="left:829px;top:-46.63px;font-size:9.6px;color:#cfcfcf;font-weight:normal;">89</div>
<div style="left:826.2px;top:-48.5px;width:1px;height:13px;background:#1e1e1e"></div>
<div style="left:826.2px;top:-28px;width:1px;height:356px;background:#a9a9a9"></div>
<div class="t" style="left:852.7px;top:-46.63px;font-size:9.6px;color:#cfcfcf;font-weight:normal;">97</div>
<div style="left:849.9px;top:-48.5px;width:1px;height:13px;background:#1e1e1e"></div>
<div style="left:849.9px;top:-28px;width:1px;height:356px;background:#a9a9a9"></div>
<div class="t" style="left:876.4px;top:-46.63px;font-size:9.6px;color:#cfcfcf;font-weight:normal;">105</div>
<div style="left:873.6px;top:-48.5px;width:1px;height:13px;background:#1e1e1e"></div>
<div style="left:873.6px;top:-28px;width:1px;height:356px;background:#a9a9a9"></div>
<div class="t" style="left:900.1px;top:-46.63px;font-size:9.6px;color:#cfcfcf;font-weight:normal;">113</div>
<div style="left:897.3px;top:-48.5px;width:1px;height:13px;background:#1e1e1e"></div>
<div style="left:897.3px;top:-28px;width:1px;height:356px;background:#a9a9a9"></div>
<div class="t" style="left:923.8px;top:-46.63px;font-size:9.6px;color:#cfcfcf;font-weight:normal;">121</div>
<div style="left:921px;top:-48.5px;width:1px;height:13px;background:#1e1e1e"></div>
<div style="left:921px;top:-28px;width:1px;height:356px;background:#a9a9a9"></div>
<div class="t" style="left:947.5px;top:-46.63px;font-size:9.6px;color:#cfcfcf;font-weight:normal;">129</div>
<div style="left:944.7px;top:-48.5px;width:1px;height:13px;background:#1e1e1e"></div>
<div style="left:944.7px;top:-28px;width:1px;height:356px;background:#a9a9a9"></div>
<div style="left:909.15px;top:-28px;width:54.35px;height:356px;background:#a4a4a4"></div>
<div style="left:909.15px;top:-28px;width:1px;height:356px;background:#999"></div>
<div style="left:932.85px;top:-28px;width:1px;height:356px;background:#999"></div>
<div style="left:565px;top:2.5px;width:398.5px;height:1px;background:#a6a6a6"></div>
<div style="left:565px;top:35.3px;width:398.5px;height:1px;background:#a6a6a6"></div>
<div style="left:565px;top:68.1px;width:398.5px;height:1px;background:#a6a6a6"></div>
<div style="left:565px;top:100.9px;width:398.5px;height:1px;background:#a6a6a6"></div>
<div style="left:565px;top:133.7px;width:398.5px;height:1px;background:#a6a6a6"></div>
<div style="left:565px;top:166.5px;width:398.5px;height:1px;background:#a6a6a6"></div>
<div style="left:565px;top:199.3px;width:398.5px;height:1px;background:#a6a6a6"></div>
<div style="left:565px;top:232.1px;width:398.5px;height:1px;background:#a6a6a6"></div>
<div style="left:565px;top:264.9px;width:398.5px;height:1px;background:#a6a6a6"></div>
<div style="left:565px;top:297.7px;width:398.5px;height:1px;background:#a6a6a6"></div>
<div style="left:565px;top:330.5px;width:398.5px;height:1px;background:#a6a6a6"></div>
<div style="left:564.95px;top:-27.1px;width:22.1px;height:29.8px;background:#d83030;border:1px solid rgba(0,0,0,0.55);box-sizing:border-box;clip-path:polygon(4px 0,100% 0,100% 100%,0 100%,0 4px)"></div>
<div style="left:564.95px;top:-27.1px;width:4px;height:4px;background:linear-gradient(135deg,#9ab 50%,transparent 50%)"></div>
<div class="t" style="left:567.95px;top:-25.26px;font-size:9.4px;color:rgba(30,8,0,0.8);font-weight:normal;overflow:hidden;width:18.6px">Unt</div>
<div style="left:566.95px;top:-12.3px;width:18.1px;height:1px;background:repeating-linear-gradient(90deg,rgba(0,0,0,0.35) 0 3px,transparent 3px 5px)"></div>
<div style="left:566.95px;top:-7.8px;width:18.1px;height:1px;background:repeating-linear-gradient(90deg,rgba(0,0,0,0.25) 0 2px,transparent 2px 6px)"></div>
<div style="left:566.95px;top:-3.3px;width:18.1px;height:1px;background:repeating-linear-gradient(90deg,rgba(0,0,0,0.3) 0 4px,transparent 4px 7px)"></div>
<div style="left:802.31px;top:-27.1px;width:46.54px;height:29.8px;background:#d83030;border:1px solid rgba(0,0,0,0.55);box-sizing:border-box;clip-path:polygon(4px 0,100% 0,100% 100%,0 100%,0 4px)"></div>
<div style="left:802.31px;top:-27.1px;width:4px;height:4px;background:linear-gradient(135deg,#9ab 50%,transparent 50%)"></div>
<div class="t" style="left:805.31px;top:-25.26px;font-size:9.4px;color:rgba(30,8,0,0.8);font-weight:normal;overflow:hidden;width:43.04px">Untitled</div>
<div style="left:804.31px;top:-12.3px;width:42.54px;height:1px;background:repeating-linear-gradient(90deg,rgba(0,0,0,0.35) 0 3px,transparent 3px 5px)"></div>
<div style="left:804.31px;top:-7.8px;width:42.54px;height:1px;background:repeating-linear-gradient(90deg,rgba(0,0,0,0.25) 0 2px,transparent 2px 6px)"></div>
<div style="left:804.31px;top:-3.3px;width:42.54px;height:1px;background:repeating-linear-gradient(90deg,rgba(0,0,0,0.3) 0 4px,transparent 4px 7px)"></div>
<div style="left:850.33px;top:-27.1px;width:24.18px;height:29.8px;background:#d83030;border:1px solid rgba(0,0,0,0.55);box-sizing:border-box;clip-path:polygon(4px 0,100% 0,100% 100%,0 100%,0 4px)"></div>
<div style="left:850.33px;top:-27.1px;width:4px;height:4px;background:linear-gradient(135deg,#9ab 50%,transparent 50%)"></div>
<div class="t" style="left:853.33px;top:-25.26px;font-size:9.4px;color:rgba(30,8,0,0.8);font-weight:normal;overflow:hidden;width:20.68px">Unt</div>
<div style="left:852.33px;top:-12.3px;width:20.18px;height:1px;background:repeating-linear-gradient(90deg,rgba(0,0,0,0.35) 0 3px,transparent 3px 5px)"></div>
<div style="left:852.33px;top:-7.8px;width:20.18px;height:1px;background:repeating-linear-gradient(90deg,rgba(0,0,0,0.25) 0 2px,transparent 2px 6px)"></div>
<div style="left:852.33px;top:-3.3px;width:20.18px;height:1px;background:repeating-linear-gradient(90deg,rgba(0,0,0,0.3) 0 4px,transparent 4px 7px)"></div>
<div style="left:564.64px;top:5.7px;width:46.73px;height:29.8px;background:#b46ee6;border:1px solid rgba(0,0,0,0.55);box-sizing:border-box;clip-path:polygon(4px 0,100% 0,100% 100%,0 100%,0 4px)"></div>
<div style="left:564.64px;top:5.7px;width:4px;height:4px;background:linear-gradient(135deg,#9ab 50%,transparent 50%)"></div>
<div class="t" style="left:567.64px;top:7.54px;font-size:9.4px;color:rgba(30,8,0,0.8);font-weight:normal;overflow:hidden;width:43.23px">Untitled</div>
<div style="left:566.64px;top:20.5px;width:42.73px;height:1px;background:repeating-linear-gradient(90deg,rgba(0,0,0,0.35) 0 3px,transparent 3px 5px)"></div>
<div style="left:566.64px;top:25px;width:42.73px;height:1px;background:repeating-linear-gradient(90deg,rgba(0,0,0,0.25) 0 2px,transparent 2px 6px)"></div>
<div style="left:566.64px;top:29.5px;width:42.73px;height:1px;background:repeating-linear-gradient(90deg,rgba(0,0,0,0.3) 0 4px,transparent 4px 7px)"></div>
<div style="left:611.37px;top:5.7px;width:10.8px;height:29.8px;background:#b46ee6;border:1px solid rgba(0,0,0,0.55);box-sizing:border-box;clip-path:polygon(4px 0,100% 0,100% 100%,0 100%,0 4px)"></div>
<div style="left:611.37px;top:5.7px;width:4px;height:4px;background:linear-gradient(135deg,#9ab 50%,transparent 50%)"></div>
<div class="t" style="left:614.37px;top:7.54px;font-size:9.4px;color:rgba(30,8,0,0.8);font-weight:normal;overflow:hidden;width:7.3px">L</div>
<div style="left:613.37px;top:20.5px;width:6.8px;height:1px;background:repeating-linear-gradient(90deg,rgba(0,0,0,0.35) 0 3px,transparent 3px 5px)"></div>
<div style="left:613.37px;top:25px;width:6.8px;height:1px;background:repeating-linear-gradient(90deg,rgba(0,0,0,0.25) 0 2px,transparent 2px 6px)"></div>
<div style="left:613.37px;top:29.5px;width:6.8px;height:1px;background:repeating-linear-gradient(90deg,rgba(0,0,0,0.3) 0 4px,transparent 4px 7px)"></div>
<div style="left:623.76px;top:5.7px;width:12.02px;height:29.8px;background:#b46ee6;border:1px solid rgba(0,0,0,0.55);box-sizing:border-box;clip-path:polygon(4px 0,100% 0,100% 100%,0 100%,0 4px)"></div>
<div style="left:623.76px;top:5.7px;width:4px;height:4px;background:linear-gradient(135deg,#9ab 50%,transparent 50%)"></div>
<div class="t" style="left:626.76px;top:7.54px;font-size:9.4px;color:rgba(30,8,0,0.8);font-weight:normal;overflow:hidden;width:8.52px">l</div>
<div style="left:625.76px;top:20.5px;width:8.02px;height:1px;background:repeating-linear-gradient(90deg,rgba(0,0,0,0.35) 0 3px,transparent 3px 5px)"></div>
<div style="left:625.76px;top:25px;width:8.02px;height:1px;background:repeating-linear-gradient(90deg,rgba(0,0,0,0.25) 0 2px,transparent 2px 6px)"></div>
<div style="left:625.76px;top:29.5px;width:8.02px;height:1px;background:repeating-linear-gradient(90deg,rgba(0,0,0,0.3) 0 4px,transparent 4px 7px)"></div>
<div style="left:683.33px;top:5.7px;width:15.35px;height:29.8px;background:#b46ee6;border:1px solid rgba(0,0,0,0.55);box-sizing:border-box;clip-path:polygon(4px 0,100% 0,100% 100%,0 100%,0 4px)"></div>
<div style="left:683.33px;top:5.7px;width:4px;height:4px;background:linear-gradient(135deg,#9ab 50%,transparent 50%)"></div>
<div class="t" style="left:686.33px;top:7.54px;font-size:9.4px;color:rgba(30,8,0,0.8);font-weight:normal;overflow:hidden;width:11.85px">U</div>
<div style="left:685.33px;top:20.5px;width:11.35px;height:1px;background:repeating-linear-gradient(90deg,rgba(0,0,0,0.35) 0 3px,transparent 3px 5px)"></div>
<div style="left:685.33px;top:25px;width:11.35px;height:1px;background:repeating-linear-gradient(90deg,rgba(0,0,0,0.25) 0 2px,transparent 2px 6px)"></div>
<div style="left:685.33px;top:29.5px;width:11.35px;height:1px;background:repeating-linear-gradient(90deg,rgba(0,0,0,0.3) 0 4px,transparent 4px 7px)"></div>
<div style="left:698.67px;top:5.7px;width:9.08px;height:29.8px;background:#b46ee6;border:1px solid rgba(0,0,0,0.55);box-sizing:border-box;clip-path:polygon(4px 0,100% 0,100% 100%,0 100%,0 4px)"></div>
<div style="left:698.67px;top:5.7px;width:4px;height:4px;background:linear-gradient(135deg,#9ab 50%,transparent 50%)"></div>
<div style="left:700.67px;top:20.5px;width:5.08px;height:1px;background:repeating-linear-gradient(90deg,rgba(0,0,0,0.35) 0 3px,transparent 3px 5px)"></div>
<div style="left:700.67px;top:25px;width:5.08px;height:1px;background:repeating-linear-gradient(90deg,rgba(0,0,0,0.25) 0 2px,transparent 2px 6px)"></div>
<div style="left:700.67px;top:29.5px;width:5.08px;height:1px;background:repeating-linear-gradient(90deg,rgba(0,0,0,0.3) 0 4px,transparent 4px 7px)"></div>
<div style="left:707.75px;top:5.7px;width:23.45px;height:29.8px;background:#b46ee6;border:1px solid rgba(0,0,0,0.55);box-sizing:border-box;clip-path:polygon(4px 0,100% 0,100% 100%,0 100%,0 4px)"></div>
<div style="left:707.75px;top:5.7px;width:4px;height:4px;background:linear-gradient(135deg,#9ab 50%,transparent 50%)"></div>
<div class="t" style="left:710.75px;top:7.54px;font-size:9.4px;color:rgba(30,8,0,0.8);font-weight:normal;overflow:hidden;width:19.95px">Unt</div>
<div style="left:709.75px;top:20.5px;width:19.45px;height:1px;background:repeating-linear-gradient(90deg,rgba(0,0,0,0.35) 0 3px,transparent 3px 5px)"></div>
<div style="left:709.75px;top:25px;width:19.45px;height:1px;background:repeating-linear-gradient(90deg,rgba(0,0,0,0.25) 0 2px,transparent 2px 6px)"></div>
<div style="left:709.75px;top:29.5px;width:19.45px;height:1px;background:repeating-linear-gradient(90deg,rgba(0,0,0,0.3) 0 4px,transparent 4px 7px)"></div>
<div style="left:850.33px;top:5.7px;width:24.18px;height:29.8px;background:#b46ee6;border:1px solid rgba(0,0,0,0.55);box-sizing:border-box;clip-path:polygon(4px 0,100% 0,100% 100%,0 100%,0 4px)"></div>
<div style="left:850.33px;top:5.7px;width:4px;height:4px;background:linear-gradient(135deg,#9ab 50%,transparent 50%)"></div>
<div class="t" style="left:853.33px;top:7.54px;font-size:9.4px;color:rgba(30,8,0,0.8);font-weight:normal;overflow:hidden;width:20.68px">Unt</div>
<div style="left:852.33px;top:20.5px;width:20.18px;height:1px;background:repeating-linear-gradient(90deg,rgba(0,0,0,0.35) 0 3px,transparent 3px 5px)"></div>
<div style="left:852.33px;top:25px;width:20.18px;height:1px;background:repeating-linear-gradient(90deg,rgba(0,0,0,0.25) 0 2px,transparent 2px 6px)"></div>
<div style="left:852.33px;top:29.5px;width:20.18px;height:1px;background:repeating-linear-gradient(90deg,rgba(0,0,0,0.3) 0 4px,transparent 4px 7px)"></div>
<div style="left:634.65px;top:38.5px;width:23.32px;height:29.8px;background:#d83030;border:1px solid rgba(0,0,0,0.55);box-sizing:border-box;clip-path:polygon(4px 0,100% 0,100% 100%,0 100%,0 4px)"></div>
<div style="left:634.65px;top:38.5px;width:4px;height:4px;background:linear-gradient(135deg,#9ab 50%,transparent 50%)"></div>
<div class="t" style="left:637.65px;top:40.34px;font-size:9.4px;color:rgba(30,8,0,0.8);font-weight:normal;overflow:hidden;width:19.82px">Unt</div>
<div style="left:636.65px;top:53.3px;width:19.32px;height:1px;background:repeating-linear-gradient(90deg,rgba(0,0,0,0.35) 0 3px,transparent 3px 5px)"></div>
<div style="left:636.65px;top:57.8px;width:19.32px;height:1px;background:repeating-linear-gradient(90deg,rgba(0,0,0,0.25) 0 2px,transparent 2px 6px)"></div>
<div style="left:636.65px;top:62.3px;width:19.32px;height:1px;background:repeating-linear-gradient(90deg,rgba(0,0,0,0.3) 0 4px,transparent 4px 7px)"></div>
<div style="left:657.98px;top:38.5px;width:25.35px;height:29.8px;background:#d83030;border:1px solid rgba(0,0,0,0.55);box-sizing:border-box;clip-path:polygon(4px 0,100% 0,100% 100%,0 100%,0 4px)"></div>
<div style="left:657.98px;top:38.5px;width:4px;height:4px;background:linear-gradient(135deg,#9ab 50%,transparent 50%)"></div>
<div class="t" style="left:660.98px;top:40.34px;font-size:9.4px;color:rgba(30,8,0,0.8);font-weight:normal;overflow:hidden;width:21.85px">Unt</div>
<div style="left:659.98px;top:53.3px;width:21.35px;height:1px;background:repeating-linear-gradient(90deg,rgba(0,0,0,0.35) 0 3px,transparent 3px 5px)"></div>
<div style="left:659.98px;top:57.8px;width:21.35px;height:1px;background:repeating-linear-gradient(90deg,rgba(0,0,0,0.25) 0 2px,transparent 2px 6px)"></div>
<div style="left:659.98px;top:62.3px;width:21.35px;height:1px;background:repeating-linear-gradient(90deg,rgba(0,0,0,0.3) 0 4px,transparent 4px 7px)"></div>
<div style="left:779.72px;top:38.5px;width:22.59px;height:29.8px;background:#d83030;border:1px solid rgba(0,0,0,0.55);box-sizing:border-box;clip-path:polygon(4px 0,100% 0,100% 100%,0 100%,0 4px)"></div>
<div style="left:779.72px;top:38.5px;width:4px;height:4px;background:linear-gradient(135deg,#9ab 50%,transparent 50%)"></div>
<div class="t" style="left:782.72px;top:40.34px;font-size:9.4px;color:rgba(30,8,0,0.8);font-weight:normal;overflow:hidden;width:19.09px">Unt</div>
<div style="left:781.72px;top:53.3px;width:18.59px;height:1px;background:repeating-linear-gradient(90deg,rgba(0,0,0,0.35) 0 3px,transparent 3px 5px)"></div>
<div style="left:781.72px;top:57.8px;width:18.59px;height:1px;background:repeating-linear-gradient(90deg,rgba(0,0,0,0.25) 0 2px,transparent 2px 6px)"></div>
<div style="left:781.72px;top:62.3px;width:18.59px;height:1px;background:repeating-linear-gradient(90deg,rgba(0,0,0,0.3) 0 4px,transparent 4px 7px)"></div>
<div style="left:753.97px;top:71.3px;width:13.09px;height:29.8px;background:#d83030;border:1px solid rgba(0,0,0,0.55);box-sizing:border-box;clip-path:polygon(4px 0,100% 0,100% 100%,0 100%,0 4px)"></div>
<div style="left:753.97px;top:71.3px;width:4px;height:4px;background:linear-gradient(135deg,#9ab 50%,transparent 50%)"></div>
<div class="t" style="left:756.97px;top:73.14px;font-size:9.4px;color:rgba(30,8,0,0.8);font-weight:normal;overflow:hidden;width:9.59px">L</div>
<div style="left:755.97px;top:86.1px;width:9.09px;height:1px;background:repeating-linear-gradient(90deg,rgba(0,0,0,0.35) 0 3px,transparent 3px 5px)"></div>
<div style="left:755.97px;top:90.6px;width:9.09px;height:1px;background:repeating-linear-gradient(90deg,rgba(0,0,0,0.25) 0 2px,transparent 2px 6px)"></div>
<div style="left:755.97px;top:95.1px;width:9.09px;height:1px;background:repeating-linear-gradient(90deg,rgba(0,0,0,0.3) 0 4px,transparent 4px 7px)"></div>
<div style="left:767.06px;top:71.3px;width:12.67px;height:29.8px;background:#d83030;border:1px solid rgba(0,0,0,0.55);box-sizing:border-box;clip-path:polygon(4px 0,100% 0,100% 100%,0 100%,0 4px)"></div>
<div style="left:767.06px;top:71.3px;width:4px;height:4px;background:linear-gradient(135deg,#9ab 50%,transparent 50%)"></div>
<div class="t" style="left:770.06px;top:73.14px;font-size:9.4px;color:rgba(30,8,0,0.8);font-weight:normal;overflow:hidden;width:9.17px">L</div>
<div style="left:769.06px;top:86.1px;width:8.67px;height:1px;background:repeating-linear-gradient(90deg,rgba(0,0,0,0.35) 0 3px,transparent 3px 5px)"></div>
<div style="left:769.06px;top:90.6px;width:8.67px;height:1px;background:repeating-linear-gradient(90deg,rgba(0,0,0,0.25) 0 2px,transparent 2px 6px)"></div>
<div style="left:769.06px;top:95.1px;width:8.67px;height:1px;background:repeating-linear-gradient(90deg,rgba(0,0,0,0.3) 0 4px,transparent 4px 7px)"></div>
<div style="left:802.31px;top:71.3px;width:12.23px;height:29.8px;background:#d83030;border:1px solid rgba(0,0,0,0.55);box-sizing:border-box;clip-path:polygon(4px 0,100% 0,100% 100%,0 100%,0 4px)"></div>
<div style="left:802.31px;top:71.3px;width:4px;height:4px;background:linear-gradient(135deg,#9ab 50%,transparent 50%)"></div>
<div class="t" style="left:805.31px;top:73.14px;font-size:9.4px;color:rgba(30,8,0,0.8);font-weight:normal;overflow:hidden;width:8.73px">L</div>
<div style="left:804.31px;top:86.1px;width:8.23px;height:1px;background:repeating-linear-gradient(90deg,rgba(0,0,0,0.35) 0 3px,transparent 3px 5px)"></div>
<div style="left:804.31px;top:90.6px;width:8.23px;height:1px;background:repeating-linear-gradient(90deg,rgba(0,0,0,0.25) 0 2px,transparent 2px 6px)"></div>
<div style="left:804.31px;top:95.1px;width:8.23px;height:1px;background:repeating-linear-gradient(90deg,rgba(0,0,0,0.3) 0 4px,transparent 4px 7px)"></div>
<div style="left:814.54px;top:71.3px;width:12.32px;height:29.8px;background:#d83030;border:1px solid rgba(0,0,0,0.55);box-sizing:border-box;clip-path:polygon(4px 0,100% 0,100% 100%,0 100%,0 4px)"></div>
<div style="left:814.54px;top:71.3px;width:4px;height:4px;background:linear-gradient(135deg,#9ab 50%,transparent 50%)"></div>
<div class="t" style="left:817.54px;top:73.14px;font-size:9.4px;color:rgba(30,8,0,0.8);font-weight:normal;overflow:hidden;width:8.82px">L</div>
<div style="left:816.54px;top:86.1px;width:8.32px;height:1px;background:repeating-linear-gradient(90deg,rgba(0,0,0,0.35) 0 3px,transparent 3px 5px)"></div>
<div style="left:816.54px;top:90.6px;width:8.32px;height:1px;background:repeating-linear-gradient(90deg,rgba(0,0,0,0.25) 0 2px,transparent 2px 6px)"></div>
<div style="left:816.54px;top:95.1px;width:8.32px;height:1px;background:repeating-linear-gradient(90deg,rgba(0,0,0,0.3) 0 4px,transparent 4px 7px)"></div>
<div style="left:826.87px;top:71.3px;width:23.46px;height:29.8px;background:#d83030;border:1px solid rgba(0,0,0,0.55);box-sizing:border-box;clip-path:polygon(4px 0,100% 0,100% 100%,0 100%,0 4px)"></div>
<div style="left:826.87px;top:71.3px;width:4px;height:4px;background:linear-gradient(135deg,#9ab 50%,transparent 50%)"></div>
<div class="t" style="left:829.87px;top:73.14px;font-size:9.4px;color:rgba(30,8,0,0.8);font-weight:normal;overflow:hidden;width:19.96px">Unt</div>
<div style="left:828.87px;top:86.1px;width:19.46px;height:1px;background:repeating-linear-gradient(90deg,rgba(0,0,0,0.35) 0 3px,transparent 3px 5px)"></div>
<div style="left:828.87px;top:90.6px;width:19.46px;height:1px;background:repeating-linear-gradient(90deg,rgba(0,0,0,0.25) 0 2px,transparent 2px 6px)"></div>
<div style="left:828.87px;top:95.1px;width:19.46px;height:1px;background:repeating-linear-gradient(90deg,rgba(0,0,0,0.3) 0 4px,transparent 4px 7px)"></div>
<div style="left:587.04px;top:104.1px;width:20.38px;height:29.8px;background:#d83030;border:1px solid rgba(0,0,0,0.55);box-sizing:border-box;clip-path:polygon(4px 0,100% 0,100% 100%,0 100%,0 4px)"></div>
<div style="left:587.04px;top:104.1px;width:4px;height:4px;background:linear-gradient(135deg,#9ab 50%,transparent 50%)"></div>
<div class="t" style="left:590.04px;top:105.94px;font-size:9.4px;color:rgba(30,8,0,0.8);font-weight:normal;overflow:hidden;width:16.88px">Un</div>
<div style="left:589.04px;top:118.9px;width:16.38px;height:1px;background:repeating-linear-gradient(90deg,rgba(0,0,0,0.35) 0 3px,transparent 3px 5px)"></div>
<div style="left:589.04px;top:123.4px;width:16.38px;height:1px;background:repeating-linear-gradient(90deg,rgba(0,0,0,0.25) 0 2px,transparent 2px 6px)"></div>
<div style="left:589.04px;top:127.9px;width:16.38px;height:1px;background:repeating-linear-gradient(90deg,rgba(0,0,0,0.3) 0 4px,transparent 4px 7px)"></div>
<div style="left:753.97px;top:104.1px;width:25.75px;height:29.8px;background:#d83030;border:1px solid rgba(0,0,0,0.55);box-sizing:border-box;clip-path:polygon(4px 0,100% 0,100% 100%,0 100%,0 4px)"></div>
<div style="left:753.97px;top:104.1px;width:4px;height:4px;background:linear-gradient(135deg,#9ab 50%,transparent 50%)"></div>
<div class="t" style="left:756.97px;top:105.94px;font-size:9.4px;color:rgba(30,8,0,0.8);font-weight:normal;overflow:hidden;width:22.25px">Unt</div>
<div style="left:755.97px;top:118.9px;width:21.75px;height:1px;background:repeating-linear-gradient(90deg,rgba(0,0,0,0.35) 0 3px,transparent 3px 5px)"></div>
<div style="left:755.97px;top:123.4px;width:21.75px;height:1px;background:repeating-linear-gradient(90deg,rgba(0,0,0,0.25) 0 2px,transparent 2px 6px)"></div>
<div style="left:755.97px;top:127.9px;width:21.75px;height:1px;background:repeating-linear-gradient(90deg,rgba(0,0,0,0.3) 0 4px,transparent 4px 7px)"></div>
<div style="left:587.04px;top:136.9px;width:21.17px;height:29.8px;background:#6c9c22;border:1px solid rgba(0,0,0,0.55);box-sizing:border-box;clip-path:polygon(4px 0,100% 0,100% 100%,0 100%,0 4px)"></div>
<div style="left:587.04px;top:136.9px;width:4px;height:4px;background:linear-gradient(135deg,#9ab 50%,transparent 50%)"></div>
<div class="t" style="left:590.04px;top:138.74px;font-size:9.4px;color:rgba(30,8,0,0.8);font-weight:normal;overflow:hidden;width:17.67px">Unt</div>
<div style="left:589.04px;top:151.7px;width:17.17px;height:1px;background:repeating-linear-gradient(90deg,rgba(0,0,0,0.35) 0 3px,transparent 3px 5px)"></div>
<div style="left:589.04px;top:156.2px;width:17.17px;height:1px;background:repeating-linear-gradient(90deg,rgba(0,0,0,0.25) 0 2px,transparent 2px 6px)"></div>
<div style="left:589.04px;top:160.7px;width:17.17px;height:1px;background:repeating-linear-gradient(90deg,rgba(0,0,0,0.3) 0 4px,transparent 4px 7px)"></div>
<div style="left:586.26px;top:169.7px;width:24.79px;height:29.8px;background:#dea216;border:1px solid rgba(0,0,0,0.55);box-sizing:border-box;clip-path:polygon(4px 0,100% 0,100% 100%,0 100%,0 4px)"></div>
<div style="left:586.26px;top:169.7px;width:4px;height:4px;background:linear-gradient(135deg,#9ab 50%,transparent 50%)"></div>
<div class="t" style="left:589.26px;top:171.54px;font-size:9.4px;color:rgba(30,8,0,0.8);font-weight:normal;overflow:hidden;width:21.29px">Unt</div>
<div style="left:588.26px;top:184.5px;width:20.79px;height:1px;background:repeating-linear-gradient(90deg,rgba(0,0,0,0.35) 0 3px,transparent 3px 5px)"></div>
<div style="left:588.26px;top:189px;width:20.79px;height:1px;background:repeating-linear-gradient(90deg,rgba(0,0,0,0.25) 0 2px,transparent 2px 6px)"></div>
<div style="left:588.26px;top:193.5px;width:20.79px;height:1px;background:repeating-linear-gradient(90deg,rgba(0,0,0,0.3) 0 4px,transparent 4px 7px)"></div>
<div style="left:612.16px;top:169.7px;width:22.17px;height:29.8px;background:#dea216;border:1px solid rgba(0,0,0,0.55);box-sizing:border-box;clip-path:polygon(4px 0,100% 0,100% 100%,0 100%,0 4px)"></div>
<div style="left:612.16px;top:169.7px;width:4px;height:4px;background:linear-gradient(135deg,#9ab 50%,transparent 50%)"></div>
<div class="t" style="left:615.16px;top:171.54px;font-size:9.4px;color:rgba(30,8,0,0.8);font-weight:normal;overflow:hidden;width:18.67px">Unt</div>
<div style="left:614.16px;top:184.5px;width:18.17px;height:1px;background:repeating-linear-gradient(90deg,rgba(0,0,0,0.35) 0 3px,transparent 3px 5px)"></div>
<div style="left:614.16px;top:189px;width:18.17px;height:1px;background:repeating-linear-gradient(90deg,rgba(0,0,0,0.25) 0 2px,transparent 2px 6px)"></div>
<div style="left:614.16px;top:193.5px;width:18.17px;height:1px;background:repeating-linear-gradient(90deg,rgba(0,0,0,0.3) 0 4px,transparent 4px 7px)"></div>
<div style="left:659.12px;top:169.7px;width:71.57px;height:29.8px;background:#dea216;border:1px solid rgba(0,0,0,0.55);box-sizing:border-box;clip-path:polygon(4px 0,100% 0,100% 100%,0 100%,0 4px)"></div>
<div style="left:659.12px;top:169.7px;width:4px;height:4px;background:linear-gradient(135deg,#9ab 50%,transparent 50%)"></div>
<div class="t" style="left:662.12px;top:171.54px;font-size:9.4px;color:rgba(30,8,0,0.8);font-weight:normal;overflow:hidden;width:68.07px">Untitled</div>
<div style="left:661.12px;top:184.5px;width:67.57px;height:1px;background:repeating-linear-gradient(90deg,rgba(0,0,0,0.35) 0 3px,transparent 3px 5px)"></div>
<div style="left:661.12px;top:189px;width:67.57px;height:1px;background:repeating-linear-gradient(90deg,rgba(0,0,0,0.25) 0 2px,transparent 2px 6px)"></div>
<div style="left:661.12px;top:193.5px;width:67.57px;height:1px;background:repeating-linear-gradient(90deg,rgba(0,0,0,0.3) 0 4px,transparent 4px 7px)"></div>
<div style="left:731.2px;top:169.7px;width:23.46px;height:29.8px;background:#dea216;border:1px solid rgba(0,0,0,0.55);box-sizing:border-box;clip-path:polygon(4px 0,100% 0,100% 100%,0 100%,0 4px)"></div>
<div style="left:731.2px;top:169.7px;width:4px;height:4px;background:linear-gradient(135deg,#9ab 50%,transparent 50%)"></div>
<div class="t" style="left:734.2px;top:171.54px;font-size:9.4px;color:rgba(30,8,0,0.8);font-weight:normal;overflow:hidden;width:19.96px">Unt</div>
<div style="left:733.2px;top:184.5px;width:19.46px;height:1px;background:repeating-linear-gradient(90deg,rgba(0,0,0,0.35) 0 3px,transparent 3px 5px)"></div>
<div style="left:733.2px;top:189px;width:19.46px;height:1px;background:repeating-linear-gradient(90deg,rgba(0,0,0,0.25) 0 2px,transparent 2px 6px)"></div>
<div style="left:733.2px;top:193.5px;width:19.46px;height:1px;background:repeating-linear-gradient(90deg,rgba(0,0,0,0.3) 0 4px,transparent 4px 7px)"></div>
<div style="left:826.87px;top:169.7px;width:23.46px;height:29.8px;background:#dea216;border:1px solid rgba(0,0,0,0.55);box-sizing:border-box;clip-path:polygon(4px 0,100% 0,100% 100%,0 100%,0 4px)"></div>
<div style="left:826.87px;top:169.7px;width:4px;height:4px;background:linear-gradient(135deg,#9ab 50%,transparent 50%)"></div>
<div class="t" style="left:829.87px;top:171.54px;font-size:9.4px;color:rgba(30,8,0,0.8);font-weight:normal;overflow:hidden;width:19.96px">Unt</div>
<div style="left:828.87px;top:184.5px;width:19.46px;height:1px;background:repeating-linear-gradient(90deg,rgba(0,0,0,0.35) 0 3px,transparent 3px 5px)"></div>
<div style="left:828.87px;top:189px;width:19.46px;height:1px;background:repeating-linear-gradient(90deg,rgba(0,0,0,0.25) 0 2px,transparent 2px 6px)"></div>
<div style="left:828.87px;top:193.5px;width:19.46px;height:1px;background:repeating-linear-gradient(90deg,rgba(0,0,0,0.3) 0 4px,transparent 4px 7px)"></div>
<div style="left:611.05px;top:202.5px;width:23.28px;height:29.8px;background:#22a844;border:1px solid rgba(0,0,0,0.55);box-sizing:border-box;clip-path:polygon(4px 0,100% 0,100% 100%,0 100%,0 4px)"></div>
<div style="left:611.05px;top:202.5px;width:4px;height:4px;background:linear-gradient(135deg,#9ab 50%,transparent 50%)"></div>
<div class="t" style="left:614.05px;top:204.34px;font-size:9.4px;color:rgba(30,8,0,0.8);font-weight:normal;overflow:hidden;width:19.78px">Unt</div>
<div style="left:613.05px;top:217.3px;width:19.28px;height:1px;background:repeating-linear-gradient(90deg,rgba(0,0,0,0.35) 0 3px,transparent 3px 5px)"></div>
<div style="left:613.05px;top:221.8px;width:19.28px;height:1px;background:repeating-linear-gradient(90deg,rgba(0,0,0,0.25) 0 2px,transparent 2px 6px)"></div>
<div style="left:613.05px;top:226.3px;width:19.28px;height:1px;background:repeating-linear-gradient(90deg,rgba(0,0,0,0.3) 0 4px,transparent 4px 7px)"></div>
<div style="left:731.2px;top:202.5px;width:23.46px;height:29.8px;background:#22a844;border:1px solid rgba(0,0,0,0.55);box-sizing:border-box;clip-path:polygon(4px 0,100% 0,100% 100%,0 100%,0 4px)"></div>
<div style="left:731.2px;top:202.5px;width:4px;height:4px;background:linear-gradient(135deg,#9ab 50%,transparent 50%)"></div>
<div class="t" style="left:734.2px;top:204.34px;font-size:9.4px;color:rgba(30,8,0,0.8);font-weight:normal;overflow:hidden;width:19.96px">Unt</div>
<div style="left:733.2px;top:217.3px;width:19.46px;height:1px;background:repeating-linear-gradient(90deg,rgba(0,0,0,0.35) 0 3px,transparent 3px 5px)"></div>
<div style="left:733.2px;top:221.8px;width:19.46px;height:1px;background:repeating-linear-gradient(90deg,rgba(0,0,0,0.25) 0 2px,transparent 2px 6px)"></div>
<div style="left:733.2px;top:226.3px;width:19.46px;height:1px;background:repeating-linear-gradient(90deg,rgba(0,0,0,0.3) 0 4px,transparent 4px 7px)"></div>
<div style="left:565.56px;top:235.3px;width:18.06px;height:29.8px;background:#f25c12;border:1px solid rgba(0,0,0,0.55);box-sizing:border-box;clip-path:polygon(4px 0,100% 0,100% 100%,0 100%,0 4px)"></div>
<div style="left:565.56px;top:235.3px;width:4px;height:4px;background:linear-gradient(135deg,#9ab 50%,transparent 50%)"></div>
<div class="t" style="left:568.56px;top:237.14px;font-size:9.4px;color:rgba(30,8,0,0.8);font-weight:normal;overflow:hidden;width:14.56px">Un</div>
<div style="left:567.56px;top:250.1px;width:14.06px;height:1px;background:repeating-linear-gradient(90deg,rgba(0,0,0,0.35) 0 3px,transparent 3px 5px)"></div>
<div style="left:567.56px;top:254.6px;width:14.06px;height:1px;background:repeating-linear-gradient(90deg,rgba(0,0,0,0.25) 0 2px,transparent 2px 6px)"></div>
<div style="left:567.56px;top:259.1px;width:14.06px;height:1px;background:repeating-linear-gradient(90deg,rgba(0,0,0,0.3) 0 4px,transparent 4px 7px)"></div>
<div style="left:586.26px;top:235.3px;width:24.79px;height:29.8px;background:#f25c12;border:1px solid rgba(0,0,0,0.55);box-sizing:border-box;clip-path:polygon(4px 0,100% 0,100% 100%,0 100%,0 4px)"></div>
<div style="left:586.26px;top:235.3px;width:4px;height:4px;background:linear-gradient(135deg,#9ab 50%,transparent 50%)"></div>
<div class="t" style="left:589.26px;top:237.14px;font-size:9.4px;color:rgba(30,8,0,0.8);font-weight:normal;overflow:hidden;width:21.29px">Unt</div>
<div style="left:588.26px;top:250.1px;width:20.79px;height:1px;background:repeating-linear-gradient(90deg,rgba(0,0,0,0.35) 0 3px,transparent 3px 5px)"></div>
<div style="left:588.26px;top:254.6px;width:20.79px;height:1px;background:repeating-linear-gradient(90deg,rgba(0,0,0,0.25) 0 2px,transparent 2px 6px)"></div>
<div style="left:588.26px;top:259.1px;width:20.79px;height:1px;background:repeating-linear-gradient(90deg,rgba(0,0,0,0.3) 0 4px,transparent 4px 7px)"></div>
<div style="left:612.16px;top:235.3px;width:22.17px;height:29.8px;background:#f25c12;border:1px solid rgba(0,0,0,0.55);box-sizing:border-box;clip-path:polygon(4px 0,100% 0,100% 100%,0 100%,0 4px)"></div>
<div style="left:612.16px;top:235.3px;width:4px;height:4px;background:linear-gradient(135deg,#9ab 50%,transparent 50%)"></div>
<div class="t" style="left:615.16px;top:237.14px;font-size:9.4px;color:rgba(30,8,0,0.8);font-weight:normal;overflow:hidden;width:18.67px">Unt</div>
<div style="left:614.16px;top:250.1px;width:18.17px;height:1px;background:repeating-linear-gradient(90deg,rgba(0,0,0,0.35) 0 3px,transparent 3px 5px)"></div>
<div style="left:614.16px;top:254.6px;width:18.17px;height:1px;background:repeating-linear-gradient(90deg,rgba(0,0,0,0.25) 0 2px,transparent 2px 6px)"></div>
<div style="left:614.16px;top:259.1px;width:18.17px;height:1px;background:repeating-linear-gradient(90deg,rgba(0,0,0,0.3) 0 4px,transparent 4px 7px)"></div>
<div style="left:659.12px;top:235.3px;width:71.57px;height:29.8px;background:#f25c12;border:1px solid rgba(0,0,0,0.55);box-sizing:border-box;clip-path:polygon(4px 0,100% 0,100% 100%,0 100%,0 4px)"></div>
<div style="left:659.12px;top:235.3px;width:4px;height:4px;background:linear-gradient(135deg,#9ab 50%,transparent 50%)"></div>
<div class="t" style="left:662.12px;top:237.14px;font-size:9.4px;color:rgba(30,8,0,0.8);font-weight:normal;overflow:hidden;width:68.07px">Untitled</div>
<div style="left:661.12px;top:250.1px;width:67.57px;height:1px;background:repeating-linear-gradient(90deg,rgba(0,0,0,0.35) 0 3px,transparent 3px 5px)"></div>
<div style="left:661.12px;top:254.6px;width:67.57px;height:1px;background:repeating-linear-gradient(90deg,rgba(0,0,0,0.25) 0 2px,transparent 2px 6px)"></div>
<div style="left:661.12px;top:259.1px;width:67.57px;height:1px;background:repeating-linear-gradient(90deg,rgba(0,0,0,0.3) 0 4px,transparent 4px 7px)"></div>
<div style="left:731.2px;top:235.3px;width:23.46px;height:29.8px;background:#f25c12;border:1px solid rgba(0,0,0,0.55);box-sizing:border-box;clip-path:polygon(4px 0,100% 0,100% 100%,0 100%,0 4px)"></div>
<div style="left:731.2px;top:235.3px;width:4px;height:4px;background:linear-gradient(135deg,#9ab 50%,transparent 50%)"></div>
<div class="t" style="left:734.2px;top:237.14px;font-size:9.4px;color:rgba(30,8,0,0.8);font-weight:normal;overflow:hidden;width:19.96px">Unt</div>
<div style="left:733.2px;top:250.1px;width:19.46px;height:1px;background:repeating-linear-gradient(90deg,rgba(0,0,0,0.35) 0 3px,transparent 3px 5px)"></div>
<div style="left:733.2px;top:254.6px;width:19.46px;height:1px;background:repeating-linear-gradient(90deg,rgba(0,0,0,0.25) 0 2px,transparent 2px 6px)"></div>
<div style="left:733.2px;top:259.1px;width:19.46px;height:1px;background:repeating-linear-gradient(90deg,rgba(0,0,0,0.3) 0 4px,transparent 4px 7px)"></div>
<div style="left:779.02px;top:235.3px;width:47.85px;height:29.8px;background:#3cb4f0;border:1px solid rgba(0,0,0,0.55);box-sizing:border-box;clip-path:polygon(4px 0,100% 0,100% 100%,0 100%,0 4px)"></div>
<div style="left:779.02px;top:235.3px;width:4px;height:4px;background:linear-gradient(135deg,#9ab 50%,transparent 50%)"></div>
<div class="t" style="left:782.02px;top:237.14px;font-size:9.4px;color:rgba(30,8,0,0.8);font-weight:normal;overflow:hidden;width:44.35px">Untitled</div>
<div style="left:781.02px;top:250.1px;width:43.85px;height:1px;background:repeating-linear-gradient(90deg,rgba(0,0,0,0.35) 0 3px,transparent 3px 5px)"></div>
<div style="left:781.02px;top:254.6px;width:43.85px;height:1px;background:repeating-linear-gradient(90deg,rgba(0,0,0,0.25) 0 2px,transparent 2px 6px)"></div>
<div style="left:781.02px;top:259.1px;width:43.85px;height:1px;background:repeating-linear-gradient(90deg,rgba(0,0,0,0.3) 0 4px,transparent 4px 7px)"></div>
<div style="left:850.33px;top:235.3px;width:23.81px;height:29.8px;background:#f25c12;border:1px solid rgba(0,0,0,0.55);box-sizing:border-box;clip-path:polygon(4px 0,100% 0,100% 100%,0 100%,0 4px)"></div>
<div style="left:850.33px;top:235.3px;width:4px;height:4px;background:linear-gradient(135deg,#9ab 50%,transparent 50%)"></div>
<div class="t" style="left:853.33px;top:237.14px;font-size:9.4px;color:rgba(30,8,0,0.8);font-weight:normal;overflow:hidden;width:20.31px">Unt</div>
<div style="left:852.33px;top:250.1px;width:19.81px;height:1px;background:repeating-linear-gradient(90deg,rgba(0,0,0,0.35) 0 3px,transparent 3px 5px)"></div>
<div style="left:852.33px;top:254.6px;width:19.81px;height:1px;background:repeating-linear-gradient(90deg,rgba(0,0,0,0.25) 0 2px,transparent 2px 6px)"></div>
<div style="left:852.33px;top:259.1px;width:19.81px;height:1px;background:repeating-linear-gradient(90deg,rgba(0,0,0,0.3) 0 4px,transparent 4px 7px)"></div>
<div style="left:635.3px;top:268.1px;width:95.39px;height:29.8px;background:#f25c12;border:1px solid rgba(0,0,0,0.55);box-sizing:border-box;clip-path:polygon(4px 0,100% 0,100% 100%,0 100%,0 4px)"></div>
<div style="left:635.3px;top:268.1px;width:4px;height:4px;background:linear-gradient(135deg,#9ab 50%,transparent 50%)"></div>
<div class="t" style="left:638.3px;top:269.94px;font-size:9.4px;color:rgba(30,8,0,0.8);font-weight:normal;overflow:hidden;width:91.89px">Untitled</div>
<div style="left:637.3px;top:282.9px;width:91.39px;height:1px;background:repeating-linear-gradient(90deg,rgba(0,0,0,0.35) 0 3px,transparent 3px 5px)"></div>
<div style="left:637.3px;top:287.4px;width:91.39px;height:1px;background:repeating-linear-gradient(90deg,rgba(0,0,0,0.25) 0 2px,transparent 2px 6px)"></div>
<div style="left:637.3px;top:291.9px;width:91.39px;height:1px;background:repeating-linear-gradient(90deg,rgba(0,0,0,0.3) 0 4px,transparent 4px 7px)"></div>
<div style="left:802.49px;top:268.1px;width:47.84px;height:29.8px;background:#f25c12;border:1px solid rgba(0,0,0,0.55);box-sizing:border-box;clip-path:polygon(4px 0,100% 0,100% 100%,0 100%,0 4px)"></div>
<div style="left:802.49px;top:268.1px;width:4px;height:4px;background:linear-gradient(135deg,#9ab 50%,transparent 50%)"></div>
<div class="t" style="left:805.49px;top:269.94px;font-size:9.4px;color:rgba(30,8,0,0.8);font-weight:normal;overflow:hidden;width:44.34px">Untitled</div>
<div style="left:804.49px;top:282.9px;width:43.84px;height:1px;background:repeating-linear-gradient(90deg,rgba(0,0,0,0.35) 0 3px,transparent 3px 5px)"></div>
<div style="left:804.49px;top:287.4px;width:43.84px;height:1px;background:repeating-linear-gradient(90deg,rgba(0,0,0,0.25) 0 2px,transparent 2px 6px)"></div>
<div style="left:804.49px;top:291.9px;width:43.84px;height:1px;background:repeating-linear-gradient(90deg,rgba(0,0,0,0.3) 0 4px,transparent 4px 7px)"></div>
<div style="left:635.3px;top:300.9px;width:95.39px;height:29.8px;background:#dea216;border:1px solid rgba(0,0,0,0.55);box-sizing:border-box;clip-path:polygon(4px 0,100% 0,100% 100%,0 100%,0 4px)"></div>
<div style="left:635.3px;top:300.9px;width:4px;height:4px;background:linear-gradient(135deg,#9ab 50%,transparent 50%)"></div>
<div class="t" style="left:638.3px;top:302.74px;font-size:9.4px;color:rgba(30,8,0,0.8);font-weight:normal;overflow:hidden;width:91.89px">Untitled</div>
<div style="left:637.3px;top:315.7px;width:91.39px;height:1px;background:repeating-linear-gradient(90deg,rgba(0,0,0,0.35) 0 3px,transparent 3px 5px)"></div>
<div style="left:637.3px;top:320.2px;width:91.39px;height:1px;background:repeating-linear-gradient(90deg,rgba(0,0,0,0.25) 0 2px,transparent 2px 6px)"></div>
<div style="left:637.3px;top:324.7px;width:91.39px;height:1px;background:repeating-linear-gradient(90deg,rgba(0,0,0,0.3) 0 4px,transparent 4px 7px)"></div>
<div style="left:755.36px;top:300.9px;width:23.65px;height:29.8px;background:#dea216;border:1px solid rgba(0,0,0,0.55);box-sizing:border-box;clip-path:polygon(4px 0,100% 0,100% 100%,0 100%,0 4px)"></div>
<div style="left:755.36px;top:300.9px;width:4px;height:4px;background:linear-gradient(135deg,#9ab 50%,transparent 50%)"></div>
<div style="left:757.36px;top:315.7px;width:19.65px;height:1px;background:repeating-linear-gradient(90deg,rgba(0,0,0,0.35) 0 3px,transparent 3px 5px)"></div>
<div style="left:757.36px;top:320.2px;width:19.65px;height:1px;background:repeating-linear-gradient(90deg,rgba(0,0,0,0.25) 0 2px,transparent 2px 6px)"></div>
<div style="left:757.36px;top:324.7px;width:19.65px;height:1px;background:repeating-linear-gradient(90deg,rgba(0,0,0,0.3) 0 4px,transparent 4px 7px)"></div>
<div style="left:779.02px;top:300.9px;width:23.48px;height:29.8px;background:#dea216;border:1px solid rgba(0,0,0,0.55);box-sizing:border-box;clip-path:polygon(4px 0,100% 0,100% 100%,0 100%,0 4px)"></div>
<div style="left:779.02px;top:300.9px;width:4px;height:4px;background:linear-gradient(135deg,#9ab 50%,transparent 50%)"></div>
<div class="t" style="left:782.02px;top:302.74px;font-size:9.4px;color:rgba(30,8,0,0.8);font-weight:normal;overflow:hidden;width:19.98px">Unt</div>
<div style="left:781.02px;top:315.7px;width:19.48px;height:1px;background:repeating-linear-gradient(90deg,rgba(0,0,0,0.35) 0 3px,transparent 3px 5px)"></div>
<div style="left:781.02px;top:320.2px;width:19.48px;height:1px;background:repeating-linear-gradient(90deg,rgba(0,0,0,0.25) 0 2px,transparent 2px 6px)"></div>
<div style="left:781.02px;top:324.7px;width:19.48px;height:1px;background:repeating-linear-gradient(90deg,rgba(0,0,0,0.3) 0 4px,transparent 4px 7px)"></div>
<div style="left:802.49px;top:300.9px;width:17.66px;height:29.8px;background:#dea216;border:1px solid rgba(0,0,0,0.55);box-sizing:border-box;clip-path:polygon(4px 0,100% 0,100% 100%,0 100%,0 4px)"></div>
<div style="left:802.49px;top:300.9px;width:4px;height:4px;background:linear-gradient(135deg,#9ab 50%,transparent 50%)"></div>
<div class="t" style="left:805.49px;top:302.74px;font-size:9.4px;color:rgba(30,8,0,0.8);font-weight:normal;overflow:hidden;width:14.16px">Ur</div>
<div style="left:804.49px;top:315.7px;width:13.66px;height:1px;background:repeating-linear-gradient(90deg,rgba(0,0,0,0.35) 0 3px,transparent 3px 5px)"></div>
<div style="left:804.49px;top:320.2px;width:13.66px;height:1px;background:repeating-linear-gradient(90deg,rgba(0,0,0,0.25) 0 2px,transparent 2px 6px)"></div>
<div style="left:804.49px;top:324.7px;width:13.66px;height:1px;background:repeating-linear-gradient(90deg,rgba(0,0,0,0.3) 0 4px,transparent 4px 7px)"></div>
<div style="left:820.15px;top:300.9px;width:23.18px;height:29.8px;background:#dea216;border:1px solid rgba(0,0,0,0.55);box-sizing:border-box;clip-path:polygon(4px 0,100% 0,100% 100%,0 100%,0 4px)"></div>
<div style="left:820.15px;top:300.9px;width:4px;height:4px;background:linear-gradient(135deg,#9ab 50%,transparent 50%)"></div>
<div class="t" style="left:823.15px;top:302.74px;font-size:9.4px;color:rgba(30,8,0,0.8);font-weight:normal;overflow:hidden;width:19.68px">Unt</div>
<div style="left:822.15px;top:315.7px;width:19.18px;height:1px;background:repeating-linear-gradient(90deg,rgba(0,0,0,0.35) 0 3px,transparent 3px 5px)"></div>
<div style="left:822.15px;top:320.2px;width:19.18px;height:1px;background:repeating-linear-gradient(90deg,rgba(0,0,0,0.25) 0 2px,transparent 2px 6px)"></div>
<div style="left:822.15px;top:324.7px;width:19.18px;height:1px;background:repeating-linear-gradient(90deg,rgba(0,0,0,0.3) 0 4px,transparent 4px 7px)"></div>
<div style="left:843.33px;top:300.9px;width:7px;height:29.8px;background:#dea216;border:1px solid rgba(0,0,0,0.55);box-sizing:border-box;clip-path:polygon(4px 0,100% 0,100% 100%,0 100%,0 4px)"></div>
<div style="left:843.33px;top:300.9px;width:4px;height:4px;background:linear-gradient(135deg,#9ab 50%,transparent 50%)"></div>
<div style="left:845.33px;top:315.7px;width:3px;height:1px;background:repeating-linear-gradient(90deg,rgba(0,0,0,0.35) 0 3px,transparent 3px 5px)"></div>
<div style="left:845.33px;top:320.2px;width:3px;height:1px;background:repeating-linear-gradient(90deg,rgba(0,0,0,0.25) 0 2px,transparent 2px 6px)"></div>
<div style="left:845.33px;top:324.7px;width:3px;height:1px;background:repeating-linear-gradient(90deg,rgba(0,0,0,0.3) 0 4px,transparent 4px 7px)"></div>
<div style="left:683.33px;top:38.5px;width:3.9px;height:29.8px;background:#5a66d8;border:1px solid rgba(0,0,0,0.55);box-sizing:border-box;clip-path:polygon(4px 0,100% 0,100% 100%,0 100%,0 4px)"></div>
<div style="left:687.83px;top:38.5px;width:3.9px;height:29.8px;background:#5a66d8;border:1px solid rgba(0,0,0,0.55);box-sizing:border-box;clip-path:polygon(4px 0,100% 0,100% 100%,0 100%,0 4px)"></div>
<div style="left:692.33px;top:38.5px;width:3.9px;height:29.8px;background:#5a66d8;border:1px solid rgba(0,0,0,0.55);box-sizing:border-box;clip-path:polygon(4px 0,100% 0,100% 100%,0 100%,0 4px)"></div>
<div style="left:698.67px;top:38.5px;width:9.08px;height:29.8px;background:#b46ee6;border:1px solid rgba(0,0,0,0.55);box-sizing:border-box;clip-path:polygon(4px 0,100% 0,100% 100%,0 100%,0 4px)"></div>
<div style="left:698.67px;top:38.5px;width:4px;height:4px;background:linear-gradient(135deg,#9ab 50%,transparent 50%)"></div>
<div style="left:700.67px;top:53.3px;width:5.08px;height:1px;background:repeating-linear-gradient(90deg,rgba(0,0,0,0.35) 0 3px,transparent 3px 5px)"></div>
<div style="left:700.67px;top:57.8px;width:5.08px;height:1px;background:repeating-linear-gradient(90deg,rgba(0,0,0,0.25) 0 2px,transparent 2px 6px)"></div>
<div style="left:700.67px;top:62.3px;width:5.08px;height:1px;background:repeating-linear-gradient(90deg,rgba(0,0,0,0.3) 0 4px,transparent 4px 7px)"></div>
<div style="left:709.78px;top:38.5px;width:4.82px;height:29.8px;background:#5a66d8;border:1px solid rgba(0,0,0,0.55);box-sizing:border-box;clip-path:polygon(4px 0,100% 0,100% 100%,0 100%,0 4px)"></div>
<div style="left:715.2px;top:38.5px;width:4.82px;height:29.8px;background:#5a66d8;border:1px solid rgba(0,0,0,0.55);box-sizing:border-box;clip-path:polygon(4px 0,100% 0,100% 100%,0 100%,0 4px)"></div>
<div style="left:721.64px;top:38.5px;width:9.56px;height:29.8px;background:#b46ee6;border:1px solid rgba(0,0,0,0.55);box-sizing:border-box;clip-path:polygon(4px 0,100% 0,100% 100%,0 100%,0 4px)"></div>
<div style="left:721.64px;top:38.5px;width:4px;height:4px;background:linear-gradient(135deg,#9ab 50%,transparent 50%)"></div>
<div style="left:723.64px;top:53.3px;width:5.56px;height:1px;background:repeating-linear-gradient(90deg,rgba(0,0,0,0.35) 0 3px,transparent 3px 5px)"></div>
<div style="left:723.64px;top:57.8px;width:5.56px;height:1px;background:repeating-linear-gradient(90deg,rgba(0,0,0,0.25) 0 2px,transparent 2px 6px)"></div>
<div style="left:723.64px;top:62.3px;width:5.56px;height:1px;background:repeating-linear-gradient(90deg,rgba(0,0,0,0.3) 0 4px,transparent 4px 7px)"></div>
<div style="left:755.36px;top:136.9px;width:7.26px;height:29.8px;background:#6c9c22;border:1px solid rgba(0,0,0,0.55);box-sizing:border-box;clip-path:polygon(4px 0,100% 0,100% 100%,0 100%,0 4px)"></div>
<div style="left:763.22px;top:136.9px;width:7.26px;height:29.8px;background:#6c9c22;border:1px solid rgba(0,0,0,0.55);box-sizing:border-box;clip-path:polygon(4px 0,100% 0,100% 100%,0 100%,0 4px)"></div>
<div style="left:771.07px;top:136.9px;width:7.26px;height:29.8px;background:#6c9c22;border:1px solid rgba(0,0,0,0.55);box-sizing:border-box;clip-path:polygon(4px 0,100% 0,100% 100%,0 100%,0 4px)"></div>
<div style="left:778.93px;top:136.9px;width:7.26px;height:29.8px;background:#6c9c22;border:1px solid rgba(0,0,0,0.55);box-sizing:border-box;clip-path:polygon(4px 0,100% 0,100% 100%,0 100%,0 4px)"></div>
<div style="left:786.78px;top:136.9px;width:7.26px;height:29.8px;background:#6c9c22;border:1px solid rgba(0,0,0,0.55);box-sizing:border-box;clip-path:polygon(4px 0,100% 0,100% 100%,0 100%,0 4px)"></div>
<div style="left:794.64px;top:136.9px;width:7.26px;height:29.8px;background:#6c9c22;border:1px solid rgba(0,0,0,0.55);box-sizing:border-box;clip-path:polygon(4px 0,100% 0,100% 100%,0 100%,0 4px)"></div>
<div style="left:710.79px;top:139.2px;width:4.23px;height:24.8px;background:#6c9c22;border:1px solid rgba(0,0,0,0.5);box-sizing:border-box"></div>
<div style="left:611.5px;top:-28px;width:1.8px;height:356px;background:rgba(70,70,70,0.75)"></div>
<div style="left:607.5px;top:-46px;width:0;height:0;border-left:5px solid #28a0e8;border-top:4.5px solid transparent;border-bottom:4.5px solid transparent"></div>
<div style="left:657.33px;top:-28px;width:1.4px;height:356px;background:rgba(255,255,255,0.55)"></div>
<div style="left:969px;top:-60px;width:200px;height:600px;background:#262626"></div>
<div style="left:978.38px;top:-51px;width:200px;height:573px;background:#3b3b3b;border:2px solid #7c7c7c;border-radius:5px;box-sizing:border-box"></div>
<div style="left:980.38px;top:-49px;width:200px;height:17.5px;background:#474747"></div>
<div style="left:980.38px;top:272.5px;width:200px;height:1.5px;background:#5a5a5a"></div>
<div style="left:980.38px;top:274px;width:200px;height:43.6px;background:#1c1c1c"></div>
<div style="left:980.38px;top:317.6px;width:200px;height:1.5px;background:#5a5a5a"></div>
<div style="left:980.38px;top:319.1px;width:200px;height:14px;background:#474747"></div>
<div class="t" style="left:987.38px;top:-41.36px;font-size:10.69px;color:#ddd;font-weight:bold;">&#8505;</div>
<div class="t" style="left:994.42px;top:-40.96px;font-size:8.64px;color:#d6d6d6;font-weight:bold;letter-spacing:-0.2px">ARRANGER CLIP</div>
<div style="left:980.38px;top:-28.68px;width:200px;height:1.2px;background:#2a2a2a"></div>
<div class="t" style="left:987.38px;top:-23.83px;font-size:9.22px;color:#d0d0d0;font-weight:normal;letter-spacing:-0.2px">Name and Color</div>
<div style="left:987.38px;top:-11.2px;width:131.38px;height:11.76px;background:#1e1e1e"></div>
<div class="t" style="left:991.4px;top:-10.82px;font-size:8.98px;color:#d8d8d8;font-weight:normal;">Untitled</div>
<div style="left:987.4px;top:3.8px;width:11px;height:7.4px;background:#555"></div>
<div style="left:999.4px;top:3.8px;width:11px;height:7.4px;background:#8a8a8a"></div>
<div style="left:1011px;top:3.8px;width:11px;height:7.4px;background:#ededed"></div>
<div style="left:1024px;top:3.8px;width:11px;height:7.4px;background:#a8a8d8"></div>
<div style="left:1036.6px;top:3.8px;width:11px;height:7.4px;background:#b88c58"></div>
<div style="left:1049.3px;top:3.8px;width:11px;height:7.4px;background:#d0aa70"></div>
<div style="left:1062.3px;top:3.8px;width:11px;height:7.4px;background:#6e6ee0"></div>
<div style="left:1075.5px;top:3.8px;width:11px;height:7.4px;background:#9c9cf0"></div>
<div style="left:1087.9px;top:3.8px;width:11px;height:7.4px;background:#a864e0"></div>
<div style="left:987.4px;top:12.3px;width:11px;height:7.4px;background:#e04a8c"></div>
<div style="left:999.4px;top:12.3px;width:11px;height:7.4px;background:#e03232"></div>
<div style="left:1011px;top:12.3px;width:11px;height:7.4px;background:#f26414"></div>
<div style="left:1024px;top:12.3px;width:11px;height:7.4px;background:#e6ae14"></div>
<div style="left:1036.6px;top:12.3px;width:11px;height:7.4px;background:#5a8a1e"></div>
<div style="left:1049.3px;top:12.3px;width:11px;height:7.4px;background:#20a446"></div>
<div style="left:1062.3px;top:12.3px;width:11px;height:7.4px;background:#20ae96"></div>
<div style="left:1075.5px;top:12.3px;width:11px;height:7.4px;background:#28a6d8"></div>
<div style="left:1087.9px;top:12.3px;width:11px;height:7.4px;background:#b86ee6"></div>
<div style="left:987.4px;top:20.8px;width:11px;height:7.4px;background:#f07ab2"></div>
<div style="left:999.4px;top:20.8px;width:11px;height:7.4px;background:#f06464"></div>
<div style="left:1011px;top:20.8px;width:11px;height:7.4px;background:#f29446"></div>
<div style="left:1024px;top:20.8px;width:11px;height:7.4px;background:#f0c450"></div>
<div style="left:1036.6px;top:20.8px;width:11px;height:7.4px;background:#a6c850"></div>
<div style="left:1049.3px;top:20.8px;width:11px;height:7.4px;background:#5ec270"></div>
<div style="left:1062.3px;top:20.8px;width:11px;height:7.4px;background:#5ed2b2"></div>
<div style="left:1075.5px;top:20.8px;width:11px;height:7.4px;background:#40c2f2"></div>
<div style="left:1087.9px;top:20.8px;width:11px;height:7.4px;background:repeating-linear-gradient(45deg,#ddd 0 2px,#333 2px 4px)"></div>
<div style="left:1040.6px;top:14.8px;width:3px;height:3px;background:#111;border-radius:50%"></div>
<div style="left:980.38px;top:31.5px;width:200px;height:1.2px;background:#2a2a2a"></div>
<div class="t" style="left:987.38px;top:39.94px;font-size:10.14px;color:#cfcfcf;font-weight:normal;">Time</div>
<div style="left:1032.74px;top:37.88px;width:68.77px;height:12.61px;background:#1b1b1b;border-radius:1px"></div>
<div class="t" style="left:732.74px;width:360.21px;text-align:right;top:39.51px;font-size:9.54px;color:#f0921e;font-weight:normal;">65.1.1.00</div>
<div class="t" style="left:987.38px;top:54.15px;font-size:10.14px;color:#cfcfcf;font-weight:normal;">Length</div>
<div style="left:1032.74px;top:51.79px;width:68.77px;height:12.76px;background:#1b1b1b;border-radius:1px"></div>
<div class="t" style="left:732.74px;width:360.21px;text-align:right;top:53.57px;font-size:9.54px;color:#f0921e;font-weight:normal;">4.0.0.00</div>
<div class="t" style="left:987.38px;top:68.37px;font-size:10.14px;color:#cfcfcf;font-weight:normal;">Offset</div>
<div style="left:1032.74px;top:66.43px;width:68.77px;height:11.89px;background:#1b1b1b;border-radius:1px"></div>
<div class="t" style="left:732.74px;width:360.21px;text-align:right;top:67.34px;font-size:9.54px;color:#f0921e;font-weight:normal;">1.1.1.00</div>
<div style="left:980.38px;top:83.5px;width:200px;height:1.2px;background:#2a2a2a"></div>
<div class="t" style="left:987.38px;top:91.97px;font-size:10.14px;color:#cfcfcf;font-weight:normal;">Loop</div>
<div style="left:1032.74px;top:89.34px;width:68.77px;height:11.45px;background:#ef8b1c;border-radius:1px"></div>
<div class="t" style="left:1032.74px;width:64.48px;text-align:center;top:89.52px;font-size:9.54px;color:#3a2000;font-weight:bold;">&#10226;</div>
<div class="t" style="left:987.38px;top:106.19px;font-size:10.14px;color:#cfcfcf;font-weight:normal;">Start</div>
<div style="left:1032.74px;top:103.11px;width:68.77px;height:11.6px;background:#1b1b1b;border-radius:1px"></div>
<div class="t" style="left:732.74px;width:360.21px;text-align:right;top:103.72px;font-size:9.54px;color:#f0921e;font-weight:normal;">1.1.1.00</div>
<div class="t" style="left:987.38px;top:120.55px;font-size:10.14px;color:#cfcfcf;font-weight:normal;">Length</div>
<div style="left:1032.74px;top:117.6px;width:68.77px;height:12.32px;background:#1b1b1b;border-radius:1px"></div>
<div class="t" style="left:732.74px;width:360.21px;text-align:right;top:118.94px;font-size:9.54px;color:#f0921e;font-weight:normal;">4.0.0.00</div>
<div style="left:980.38px;top:134.35px;width:200px;height:1.2px;background:#2a2a2a"></div>
<div class="t" style="left:987.38px;top:140.88px;font-size:10.14px;color:#cfcfcf;font-weight:normal;">Mute</div>
<div style="left:1032.74px;top:140.07px;width:68.77px;height:10.58px;background:#5c5c5c;border-radius:1px"></div>
<div class="t" style="left:1032.74px;width:64.48px;text-align:center;top:139.34px;font-size:9.94px;color:#eee;font-weight:bold;">M</div>
<div style="left:980.38px;top:156.47px;width:200px;height:1.2px;background:#2a2a2a"></div>
<div class="t" style="left:987.38px;top:162.92px;font-size:10.14px;color:#cfcfcf;font-weight:normal;">Shuffle</div>
<div style="left:1032.74px;top:161.09px;width:68.77px;height:12.03px;background:#ef8b1c;border-radius:1px"></div>
<div class="t" style="left:1032.74px;width:64.48px;text-align:center;top:161.85px;font-size:9.54px;color:#3a2000;font-weight:bold;">&#9635;</div>
<div class="t" style="left:987.38px;top:177.13px;font-size:10.14px;color:#cfcfcf;font-weight:normal;">Accent</div>
<div style="left:1032.74px;top:175.58px;width:68.77px;height:12.18px;background:#1b1b1b;border-radius:1px"></div>
<div class="t" style="left:732.74px;width:360.21px;text-align:right;top:176.78px;font-size:9.54px;color:#f0921e;font-weight:normal;">0.00 %</div>
<div style="left:980.38px;top:191.81px;width:200px;height:1.2px;background:#2a2a2a"></div>
<div style="left:987.38px;top:197.94px;width:114.13px;height:11.51px;background:linear-gradient(#525252,#484848);border-top:1px solid #5e5e5e;border-radius:2px;box-sizing:border-box"></div>
<div class="t" style="left:987.38px;width:109.84px;text-align:center;top:198.45px;font-size:9.08px;color:#d0d0d0;font-weight:normal;">Duplicate</div>
<div style="left:987.38px;top:212.9px;width:114.13px;height:11.37px;background:linear-gradient(#525252,#484848);border-top:1px solid #5e5e5e;border-radius:2px;box-sizing:border-box"></div>
<div class="t" style="left:987.38px;width:109.84px;text-align:center;top:213.28px;font-size:9.08px;color:#d0d0d0;font-weight:normal;">Bounce</div>
<div style="left:987.38px;top:227.44px;width:114.13px;height:11.22px;background:linear-gradient(#525252,#484848);border-top:1px solid #5e5e5e;border-radius:2px;box-sizing:border-box"></div>
<div class="t" style="left:987.38px;width:109.84px;text-align:center;top:227.67px;font-size:9.08px;color:#d0d0d0;font-weight:normal;">Double Content</div>
<div style="left:987.38px;top:241.4px;width:114.13px;height:11.8px;background:linear-gradient(#525252,#484848);border-top:1px solid #5e5e5e;border-radius:2px;box-sizing:border-box"></div>
<div class="t" style="left:987.38px;width:109.84px;text-align:center;top:242.2px;font-size:9.08px;color:#d0d0d0;font-weight:normal;">Reverse</div>
<div style="left:987.38px;top:256.51px;width:53.62px;height:11.08px;background:linear-gradient(#525252,#484848);border-top:1px solid #5e5e5e;border-radius:2px;box-sizing:border-box"></div>
<div class="t" style="left:987.38px;width:53.62px;text-align:center;top:256.59px;font-size:9.08px;color:#d0d0d0;font-weight:normal;">Scale /2</div>
<div style="left:1043.08px;top:256.51px;width:58.43px;height:11.08px;background:linear-gradient(#525252,#484848);border-top:1px solid #5e5e5e;border-radius:2px;box-sizing:border-box"></div>
<div class="t" style="left:1043.08px;width:54.15px;text-align:center;top:256.59px;font-size:9.08px;color:#d0d0d0;font-weight:normal;">Scale x2</div>
<div class="t" style="left:987.38px;top:318.75px;font-size:10.69px;color:#ddd;font-weight:bold;">&#8505;</div>
<div class="t" style="left:994.42px;top:320.33px;font-size:9.79px;color:#d6d6d6;font-weight:bold;">NOTES (25)</div>
<div style="left:980.38px;top:334.01px;width:200px;height:1.2px;background:#2a2a2a"></div>
<div class="t" style="left:987.38px;top:338.5px;font-size:10.14px;color:#cfcfcf;font-weight:normal;">Length</div>
<div style="left:1032.74px;top:338.95px;width:51.26px;height:10.58px;background:#1b1b1b;border-radius:1px"></div>
<div class="t" style="left:732.74px;width:349.57px;text-align:right;top:338.55px;font-size:9.54px;color:#f0921e;font-weight:normal;">0.0.0.47</div>
<div style="left:1085.28px;top:339.74px;width:16.23px;height:10.65px;background:#4c4c4c"></div>
<div class="t" style="left:1087.62px;top:340.81px;font-size:7.01px;color:#ccc;font-weight:normal;">&#9654;</div>
<div style="left:980.38px;top:353.68px;width:200px;height:1.2px;background:#2a2a2a"></div>
<div class="t" style="left:987.38px;top:359.4px;font-size:10.14px;color:#cfcfcf;font-weight:normal;">Key</div>
<div style="left:1032.12px;top:358.55px;width:26.16px;height:9.94px;background:#1b1b1b"></div>
<div class="t" style="left:1037.28px;top:358.35px;font-size:9.09px;color:#f0921e;font-weight:normal;">C0</div>
<div style="left:1071.73px;top:359.42px;width:29.78px;height:10.06px;background:#1b1b1b"></div>
<div class="t" style="left:1078.07px;top:359.36px;font-size:9.2px;color:#f0921e;font-weight:normal;">G0</div>
<div class="t" style="left:987.38px;top:373.61px;font-size:10.14px;color:#cfcfcf;font-weight:normal;">Velocity</div>
<div style="left:1032.74px;top:374.17px;width:51.26px;height:11.16px;background:#1b1b1b;border-radius:1px"></div>
<div class="t" style="left:732.74px;width:349.57px;text-align:right;top:374.35px;font-size:9.54px;color:#f0921e;font-weight:normal;">80.4 %</div>
<div style="left:1085.28px;top:375.2px;width:16.23px;height:11.24px;background:#4c4c4c"></div>
<div class="t" style="left:1087.62px;top:376.86px;font-size:7.01px;color:#ccc;font-weight:normal;">&#9654;</div>
<div style="left:1033.15px;top:374.94px;width:2.68px;height:7.18px;background:#f0921e"></div>
<div class="t" style="left:987.38px;top:387.83px;font-size:10.14px;color:#cfcfcf;font-weight:normal;">R-Vel.</div>
<div style="left:1032.74px;top:387.94px;width:51.26px;height:11.89px;background:#1b1b1b;border-radius:1px"></div>
<div class="t" style="left:732.74px;width:349.57px;text-align:right;top:388.85px;font-size:9.54px;color:#f0921e;font-weight:normal;">80.4 %</div>
<div style="left:1085.28px;top:389.06px;width:16.23px;height:11.97px;background:#4c4c4c"></div>
<div class="t" style="left:1087.62px;top:391.45px;font-size:7.01px;color:#ccc;font-weight:normal;">&#9654;</div>
<div style="left:1033.15px;top:388.59px;width:2.68px;height:7.61px;background:#f0921e"></div>
<div style="left:980.38px;top:404.82px;width:200px;height:1.2px;background:#2a2a2a"></div>
<div class="t" style="left:987.38px;top:409.58px;font-size:10.14px;color:#cfcfcf;font-weight:normal;">Gain</div>
<div style="left:1032.74px;top:409.68px;width:51.26px;height:11.45px;background:#1b1b1b;border-radius:1px"></div>
<div class="t" style="left:732.74px;width:349.57px;text-align:right;top:410.16px;font-size:9.54px;color:#f0921e;font-weight:normal;">+0.00 dB</div>
<div style="left:1085.28px;top:410.96px;width:16.23px;height:11.53px;background:#4c4c4c"></div>
<div class="t" style="left:1087.62px;top:412.9px;font-size:7.01px;color:#ccc;font-weight:normal;">&#9654;</div>
<div class="t" style="left:987.38px;top:423.8px;font-size:10.14px;color:#cfcfcf;font-weight:normal;">Pan</div>
<div style="left:1032.74px;top:423.46px;width:51.26px;height:11.6px;background:#1b1b1b;border-radius:1px"></div>
<div class="t" style="left:732.74px;width:349.57px;text-align:right;top:424.07px;font-size:9.54px;color:#f0921e;font-weight:normal;">0.00 %</div>
<div style="left:1085.28px;top:424.82px;width:16.23px;height:11.67px;background:#4c4c4c"></div>
<div class="t" style="left:1087.62px;top:426.91px;font-size:7.01px;color:#ccc;font-weight:normal;">&#9654;</div>
<div class="t" style="left:987.38px;top:438.02px;font-size:10.14px;color:#cfcfcf;font-weight:normal;">Pitch</div>
<div style="left:1032.74px;top:437.95px;width:51.26px;height:11.6px;background:#1b1b1b;border-radius:1px"></div>
<div class="t" style="left:732.74px;width:349.57px;text-align:right;top:438.57px;font-size:9.54px;color:#f0921e;font-weight:normal;">0.00</div>
<div style="left:1085.28px;top:439.41px;width:16.23px;height:11.67px;background:#4c4c4c"></div>
<div class="t" style="left:1087.62px;top:441.51px;font-size:7.01px;color:#ccc;font-weight:normal;">&#9654;</div>
<div class="t" style="left:987.38px;top:452.8px;font-size:10.14px;color:#cfcfcf;font-weight:normal;">Timbre</div>
<div style="left:1032.74px;top:451px;width:51.26px;height:11.6px;background:#1b1b1b;border-radius:1px"></div>
<div class="t" style="left:732.74px;width:349.57px;text-align:right;top:451.61px;font-size:9.54px;color:#f0921e;font-weight:normal;">0.00 %</div>
<div style="left:1085.28px;top:452.55px;width:16.23px;height:11.67px;background:#4c4c4c"></div>
<div class="t" style="left:1087.62px;top:454.64px;font-size:7.01px;color:#ccc;font-weight:normal;">&#9654;</div>
<div style="left:980.38px;top:467.3px;width:200px;height:1.2px;background:#2a2a2a"></div>
<div style="left:987.38px;top:472.93px;width:114.13px;height:14.25px;background:linear-gradient(#525252,#484848);border-top:1px solid #5e5e5e;border-radius:2px;box-sizing:border-box"></div>
<div class="t" style="left:987.38px;width:109.84px;text-align:center;top:476.18px;font-size:9.08px;color:#d0d0d0;font-weight:normal;">Quantize Time</div>
<div style="left:987.38px;top:489.62px;width:114.13px;height:13.67px;background:linear-gradient(#525252,#484848);border-top:1px solid #5e5e5e;border-radius:2px;box-sizing:border-box"></div>
<div class="t" style="left:987.38px;width:109.84px;text-align:center;top:492.29px;font-size:9.08px;color:#d0d0d0;font-weight:normal;">Octave Up</div>
<div style="left:987.38px;top:504.44px;width:114.13px;height:12.52px;background:linear-gradient(#525252,#484848);border-top:1px solid #5e5e5e;border-radius:2px;box-sizing:border-box"></div>
<div class="t" style="left:987.38px;width:109.84px;text-align:center;top:505.96px;font-size:9.08px;color:#d0d0d0;font-weight:normal;">Octave Down</div>
<div class="t" style="left:1086.55px;top:481.64px;font-size:7.01px;color:#ccc;font-weight:normal;">&#9654;</div>
<div class="t" style="left:973.39px;top:-88.49px;font-size:9.61px;color:#c8c8c8;font-weight:normal;">Bitwig Studio Demo Song</div>
<div style="left:958.73px;top:-87.46px;width:8.7px;height:8.44px;background:#cfcfcf"></div>
<div class="t" style="left:1085.49px;top:-93.7px;font-size:10.01px;color:#bbb;font-weight:bold;">&#215;</div>
<div style="left:3px;top:351.5px;width:968px;height:200px;background:#2f2f2f;border-top:2px solid #5e5e5e;border-left:2px solid #5e5e5e;border-radius:5px 0 0 0;box-sizing:border-box"></div>
<div style="left:5.71px;top:354.95px;width:4.03px;height:95.82px;background:#e42c2c;border-radius:2px 2px 0 0"></div>
<div style="left:9.74px;top:355.01px;width:17.98px;height:96.73px;background:#454545"></div>
<div class="t" style="left:14.86px;top:433.71px;width:74.6px;text-align:center;font-size:9px;color:#d6d6d6;font-weight:bold;transform:rotate(-90deg);transform-origin:0 0;letter-spacing:-0.95px">UNAFFECTED KEYS</div>
<div style="left:27.72px;top:356.09px;width:21.27px;height:97.52px;background:#1b1b1b"></div>
<div style="left:34.19px;top:368.28px;width:6.5px;height:5.79px;background:#3c3c3c"></div>
<div style="left:47.95px;top:363.28px;width:17.83px;height:92.14px;background:#444;border-radius:3px 0 0 0"></div>
<div style="left:50.76px;top:365.32px;width:12.37px;height:10.75px;background:#ef8b1c;border-radius:1.5px"></div>
<div style="left:52.64px;top:368.91px;width:8.39px;height:3.58px;background:#5a3000;border-radius:2px"></div>
<div class="t" style="left:53.58px;top:429.96px;width:50.2px;text-align:center;font-size:8.8px;color:#dcdcdc;font-weight:bold;transform:rotate(-90deg);transform-origin:0 0;letter-spacing:-0.4px">POLYSYNTH</div>
<div class="t" style="left:54.74px;top:433.1px;font-size:7.73px;color:#ddd;font-weight:bold;">&#10084;</div>
<div class="t" style="left:33.98px;top:438.57px;font-size:6.97px;color:#aaa;font-weight:bold;">&#10010;</div>
<div style="left:65.78px;top:362.8px;width:145.52px;height:93.53px;background:#3d3d3d;border-top:1.5px solid #555"></div>
<div style="left:68.31px;top:367.06px;width:139.19px;height:22.63px;background:#1c1c1c"></div>
<svg style="position:absolute;left:0;top:340px" width="230" height="70"><polyline points="69.8,46.09 75.75,46.49 75.75,33.7 136.87,44.68 138.1,33.33 201.13,45.27 204.79,34.53 207.74,34.7" fill="none" stroke="#ef8b1c" stroke-width="1.6"/></svg>
<svg style="position:absolute;left:72.86px;top:394.83px" width="20.09" height="20.09"><circle cx="10.05" cy="10.05" r="9.05" fill="#2a2a2a"/><circle cx="10.05" cy="10.05" r="6.33" fill="url(#kg)" stroke="#1e1e1e" stroke-width="0.8"/><line x1="10.05" y1="7.78" x2="10.05" y2="4.08" stroke="#f2f2f2" stroke-width="1.27" stroke-linecap="round"/><circle cx="10.05" cy="1.2" r="0.9" fill="#f0901e"/></svg>
<svg style="position:absolute;left:100.7px;top:393.99px" width="20.3" height="20.3"><circle cx="10.15" cy="10.15" r="9.15" fill="#2a2a2a"/><circle cx="10.15" cy="10.15" r="6.4" fill="url(#kg)" stroke="#1e1e1e" stroke-width="0.8"/><line x1="10.15" y1="7.86" x2="10.15" y2="4.11" stroke="#f2f2f2" stroke-width="1.28" stroke-linecap="round"/><circle cx="10.15" cy="1.2" r="0.9" fill="#f0901e"/></svg>
<svg style="position:absolute;left:126.63px;top:393.37px" width="20.49" height="20.49"><circle cx="10.24" cy="10.24" r="9.24" fill="#2a2a2a"/><circle cx="10.24" cy="10.24" r="6.47" fill="url(#kg)" stroke="#1e1e1e" stroke-width="0.8"/><line x1="8.61" y1="11.88" x2="5.93" y2="14.56" stroke="#f2f2f2" stroke-width="1.29" stroke-linecap="round"/></svg>
<svg style="position:absolute;left:153.1px;top:393.38px" width="20.69" height="20.69"><circle cx="10.34" cy="10.34" r="9.34" fill="#2a2a2a"/><circle cx="10.34" cy="10.34" r="6.54" fill="url(#kg)" stroke="#1e1e1e" stroke-width="0.8"/><line x1="8.84" y1="12.13" x2="6.38" y2="15.07" stroke="#f2f2f2" stroke-width="1.31" stroke-linecap="round"/></svg>
<svg style="position:absolute;left:182.17px;top:394.97px" width="19.4" height="19.4"><circle cx="9.7" cy="9.7" r="8.7" fill="#2a2a2a"/><circle cx="9.7" cy="9.7" r="6.09" fill="url(#kg)" stroke="#1e1e1e" stroke-width="0.8"/><line x1="8.16" y1="11.24" x2="5.64" y2="13.76" stroke="#888" stroke-width="1.22" stroke-linecap="round"/></svg>
<div class="t" style="left:73.19px;top:412.57px;font-size:9.51px;color:#e4e4e4;font-weight:normal;">Pitch</div>
<div class="t" style="left:98.64px;top:411.95px;font-size:9.61px;color:#e4e4e4;font-weight:normal;">Shape</div>
<div class="t" style="left:130.62px;top:412.09px;font-size:9.73px;color:#e4e4e4;font-weight:normal;">Sub</div>
<div class="t" style="left:155.58px;top:412.07px;font-size:9.83px;color:#e4e4e4;font-weight:normal;">Sync</div>
<div class="t" style="left:179.66px;top:411.94px;font-size:9.92px;color:#7c7c7c;font-weight:normal;">Unison</div>
<div style="left:69.8px;top:424.6px;width:26.46px;height:11px;background:#1c1c1c;border-radius:1px"></div>
<div class="t" style="left:69.8px;top:425.56px;width:26.46px;text-align:center;font-size:9.5px;color:#f0921e;font-weight:bold;text-align:center">4'</div>
<div style="left:99.84px;top:424.6px;width:22.13px;height:11px;background:#1c1c1c;border-radius:1px"></div>
<div style="left:101.84px;top:426.2px;width:11.07px;height:7.8px;background:#6a4418"></div>
<div style="left:112.9px;top:426.2px;width:1.8px;height:7.8px;background:#e0821c"></div>
<div style="left:126.4px;top:424.6px;width:22.39px;height:11px;background:#1c1c1c;border-radius:1px"></div>
<div style="left:128.4px;top:426.2px;width:11.19px;height:7.8px;background:#6a4418"></div>
<div style="left:139.59px;top:426.2px;width:1.8px;height:7.8px;background:#e0821c"></div>
<div style="left:153.32px;top:424.6px;width:22.18px;height:11px;background:#1c1c1c;border-radius:1px"></div>
<div class="t" style="left:153.32px;top:425.56px;width:22.18px;text-align:center;font-size:9.5px;color:#f0921e;font-weight:bold;text-align:center">R</div>
<div style="left:179.66px;top:424.6px;width:28.08px;height:11px;background:#1c1c1c;border-radius:1px"></div>
<div class="t" style="left:179.66px;top:425.56px;width:28.08px;text-align:center;font-size:9.5px;color:#f0921e;font-weight:bold;text-align:center">1v</div>
<div style="left:64px;top:438px;width:150px;height:2px;background:#2c2c2c"></div>
<div style="left:68.31px;top:438.39px;width:140.61px;height:18.55px;background:#1c1c1c"></div>
<svg style="position:absolute;left:0;top:420px" width="230" height="40"><polyline points="163.56,40.38 163.56,28.41 188.25,30.62 188.25,42.71" fill="none" stroke="#ef8b1c" stroke-width="1.5"/></svg>
<svg style="position:absolute;left:0;top:420px" width="230" height="40"><polyline points="200.08,43.82 200.08,30.81 208.93,31.59" fill="none" stroke="#ef8b1c" stroke-width="1.5"/></svg>
<div style="left:212.13px;top:364.63px;width:36.47px;height:107.53px;background:#3b3b3b;border-left:2px solid #2a2a2a;box-sizing:border-box"></div>
<div class="t" style="left:222.02px;top:367.68px;font-size:8.58px;color:#e0e0e0;font-weight:bold;">MIX</div>
<svg style="position:absolute;left:217.56px;top:378.32px" width="25.72" height="25.72"><circle cx="12.86" cy="12.86" r="11.86" fill="#2a2a2a"/><path d="M3.16 9.33 A10.32 10.32 0 0 1 11.07 2.7" stroke="#f0901e" stroke-width="2.85" fill="none"/><circle cx="12.86" cy="12.86" r="8.3" fill="url(#kg)" stroke="#1e1e1e" stroke-width="0.8"/><line x1="10.95" y1="10.59" x2="7.83" y2="6.86" stroke="#f2f2f2" stroke-width="1.66" stroke-linecap="round"/></svg>
<div class="t" style="left:224.77px;top:400.58px;font-size:8.73px;color:#e4e4e4;font-weight:normal;">1/2</div>
<svg style="position:absolute;left:217.81px;top:412.15px" width="25.22" height="25.22"><circle cx="12.61" cy="12.61" r="11.61" fill="#2a2a2a"/><circle cx="12.61" cy="12.61" r="8.13" fill="url(#kg)" stroke="#1e1e1e" stroke-width="0.8"/><line x1="10.74" y1="14.83" x2="7.68" y2="18.48" stroke="#f2f2f2" stroke-width="1.63" stroke-linecap="round"/></svg>
<div class="t" style="left:219.15px;top:435.73px;font-size:9.33px;color:#e4e4e4;font-weight:normal;">Noise</div>
<svg style="position:absolute;left:217.81px;top:441.78px" width="25.22" height="25.22"><circle cx="12.61" cy="12.61" r="11.61" fill="#2a2a2a"/><path d="M3.86 7.56 A10.1 10.1 0 0 1 14.36 2.66" stroke="#f0901e" stroke-width="2.79" fill="none"/><circle cx="12.61" cy="12.61" r="8.13" fill="url(#kg)" stroke="#1e1e1e" stroke-width="0.8"/><line x1="11.16" y1="10.1" x2="8.78" y2="5.97" stroke="#f2f2f2" stroke-width="1.63" stroke-linecap="round"/></svg>
<div style="left:248.6px;top:367.14px;width:141.55px;height:113.4px;background:#3e3e3e;border-left:2px solid #2a2a2a;box-sizing:border-box"></div>
<div class="t" style="left:305.99px;top:366.67px;font-size:9.03px;color:#e0e0e0;font-weight:bold;">FILTER</div>
<div style="left:254.72px;top:377.55px;width:16.54px;height:10.56px;background:#525252;border-radius:1.5px;"></div>
<svg style="position:absolute;left:254.72px;top:377.55px" width="16.54" height="10.56" viewBox="0 0 12 10" preserveAspectRatio="none"><path d="M3,4 H6 Q8.5,4 9,8" fill="none" stroke="#d8d8d8" stroke-width="1.1" stroke-linecap="round"/></svg>
<div style="left:272.75px;top:377.73px;width:17.78px;height:10.63px;background:#525252;border-radius:1.5px;"></div>
<svg style="position:absolute;left:272.75px;top:377.73px" width="17.78" height="10.63" viewBox="0 0 12 10" preserveAspectRatio="none"><path d="M3,5 H5.5 Q7,1 8,4 L9,8" fill="none" stroke="#d8d8d8" stroke-width="1.1" stroke-linecap="round"/></svg>
<div style="left:292.04px;top:377.91px;width:17.91px;height:10.71px;background:#ef8b1c;border-radius:1.5px;"></div>
<svg style="position:absolute;left:292.04px;top:377.91px" width="17.91" height="10.71" viewBox="0 0 12 10" preserveAspectRatio="none"><path d="M3,8 Q6,0 9,8" fill="none" stroke="#2a1500" stroke-width="1.1" stroke-linecap="round"/></svg>
<div style="left:311.1px;top:378.1px;width:18.56px;height:10.79px;background:#525252;border-radius:1.5px;"></div>
<svg style="position:absolute;left:311.1px;top:378.1px" width="18.56" height="10.79" viewBox="0 0 12 10" preserveAspectRatio="none"><path d="M3,8 L4,4 Q5,1 6.5,5 H9" fill="none" stroke="#d8d8d8" stroke-width="1.1" stroke-linecap="round"/></svg>
<div style="left:331.08px;top:378.28px;width:18.18px;height:10.87px;background:#525252;border-radius:1.5px;"></div>
<svg style="position:absolute;left:331.08px;top:378.28px" width="18.18" height="10.87" viewBox="0 0 12 10" preserveAspectRatio="none"><path d="M3,8 Q4,4 6,4 H9" fill="none" stroke="#d8d8d8" stroke-width="1.1" stroke-linecap="round"/></svg>
<div style="left:351.1px;top:378.47px;width:17.25px;height:10.94px;background:#525252;border-radius:1.5px;"></div>
<svg style="position:absolute;left:351.1px;top:378.47px" width="17.25" height="10.94" viewBox="0 0 12 10" preserveAspectRatio="none"><path d="M3,3.5 H5 L6,7.5 L7,3.5 H9" fill="none" stroke="#d8d8d8" stroke-width="1.1" stroke-linecap="round"/></svg>
<div style="left:369.95px;top:378.64px;width:13.97px;height:11.01px;background:#525252;border-radius:1.5px;"></div>
<svg style="position:absolute;left:369.95px;top:378.64px" width="13.97" height="11.01" viewBox="0 0 12 10" preserveAspectRatio="none"><path d="M3,3.5 L6,7.5 L9,3.5" fill="none" stroke="#d8d8d8" stroke-width="1.1" stroke-linecap="round"/></svg>
<svg style="position:absolute;left:254.5px;top:394.57px" width="26.57" height="26.57"><circle cx="13.29" cy="13.29" r="12.29" fill="#2a2a2a"/><path d="M5.73 20.85 A10.69 10.69 0 0 1 7.16 4.53" stroke="#f0901e" stroke-width="2.95" fill="none"/><circle cx="13.29" cy="13.29" r="8.6" fill="url(#kg)" stroke="#1e1e1e" stroke-width="0.8"/><line x1="11.12" y1="11.12" x2="7.55" y2="7.55" stroke="#f2f2f2" stroke-width="1.72" stroke-linecap="round"/></svg>
<svg style="position:absolute;left:288.22px;top:394.32px" width="26.89" height="26.89"><circle cx="13.45" cy="13.45" r="12.45" fill="#2a2a2a"/><path d="M5.79 21.1 A10.83 10.83 0 0 1 9.74 3.27" stroke="#f0901e" stroke-width="2.99" fill="none"/><circle cx="13.45" cy="13.45" r="8.71" fill="url(#kg)" stroke="#1e1e1e" stroke-width="0.8"/><line x1="12.13" y1="10.63" x2="9.97" y2="6" stroke="#f2f2f2" stroke-width="1.74" stroke-linecap="round"/></svg>
<svg style="position:absolute;left:322.94px;top:395.21px" width="27.22" height="27.22"><circle cx="13.61" cy="13.61" r="12.61" fill="#2a2a2a"/><path d="M5.85 21.36 A10.97 10.97 0 1 1 22.59 19.9" stroke="#f0901e" stroke-width="3.03" fill="none"/><circle cx="13.61" cy="13.61" r="8.83" fill="url(#kg)" stroke="#1e1e1e" stroke-width="0.8"/><line x1="16.57" y1="14.69" x2="21.43" y2="16.45" stroke="#f2f2f2" stroke-width="1.77" stroke-linecap="round"/></svg>
<svg style="position:absolute;left:355.39px;top:395.92px" width="27.52" height="27.52"><circle cx="13.76" cy="13.76" r="12.76" fill="#2a2a2a"/><circle cx="13.76" cy="13.76" r="8.93" fill="url(#kg)" stroke="#1e1e1e" stroke-width="0.8"/><line x1="11.71" y1="16.2" x2="8.35" y2="20.21" stroke="#f2f2f2" stroke-width="1.79" stroke-linecap="round"/></svg>
<div class="t" style="left:259.02px;top:419.32px;font-size:10.23px;color:#e4e4e4;font-weight:normal;">Freq</div>
<div class="t" style="left:292.8px;top:418.93px;font-size:10.37px;color:#e4e4e4;font-weight:normal;">Reso</div>
<div class="t" style="left:327.84px;top:418.79px;font-size:10.5px;color:#e4e4e4;font-weight:normal;">Key</div>
<div class="t" style="left:356.65px;top:419.63px;font-size:10.61px;color:#e4e4e4;font-weight:normal;">Osc FM</div>
<svg style="position:absolute;left:254.1px;top:432.4px" width="21.43" height="21.43"><circle cx="10.72" cy="10.72" r="9.72" fill="#2a2a2a"/><path d="M4.74 16.69 A8.45 8.45 0 1 1 18.66 7.83" stroke="#f0901e" stroke-width="2.33" fill="none"/><circle cx="10.72" cy="10.72" r="6.8" fill="url(#kg)" stroke="#1e1e1e" stroke-width="0.8"/><line x1="13" y1="9.89" x2="16.74" y2="8.52" stroke="#f2f2f2" stroke-width="1.36" stroke-linecap="round"/></svg>
<svg style="position:absolute;left:276.08px;top:432.82px" width="21.6" height="21.6"><circle cx="10.8" cy="10.8" r="9.8" fill="#2a2a2a"/><path d="M4.77 16.83 A8.52 8.52 0 1 1 18.18 15.06" stroke="#f0901e" stroke-width="2.35" fill="none"/><circle cx="10.8" cy="10.8" r="6.86" fill="url(#kg)" stroke="#1e1e1e" stroke-width="0.8"/><line x1="12.92" y1="12.02" x2="16.4" y2="14.03" stroke="#f2f2f2" stroke-width="1.37" stroke-linecap="round"/></svg>
<svg style="position:absolute;left:296.9px;top:431.89px" width="21.75" height="21.75"><circle cx="10.87" cy="10.87" r="9.87" fill="#2a2a2a"/><path d="M4.8 16.95 A8.59 8.59 0 1 1 17.46 16.4" stroke="#f0901e" stroke-width="2.37" fill="none"/><circle cx="10.87" cy="10.87" r="6.91" fill="url(#kg)" stroke="#1e1e1e" stroke-width="0.8"/><line x1="12.77" y1="12.46" x2="15.87" y2="15.06" stroke="#f2f2f2" stroke-width="1.38" stroke-linecap="round"/></svg>
<svg style="position:absolute;left:319.47px;top:432.31px" width="21.92" height="21.92"><circle cx="10.96" cy="10.96" r="9.96" fill="#2a2a2a"/><path d="M4.83 17.08 A8.66 8.66 0 0 1 3.46 6.63" stroke="#f0901e" stroke-width="2.39" fill="none"/><circle cx="10.96" cy="10.96" r="6.97" fill="url(#kg)" stroke="#1e1e1e" stroke-width="0.8"/><line x1="8.8" y1="9.71" x2="5.27" y2="7.67" stroke="#f2f2f2" stroke-width="1.39" stroke-linecap="round"/></svg>
<div class="t" style="left:261.48px;top:451.08px;font-size:9.15px;color:#e4e4e4;font-weight:normal;">A</div>
<div class="t" style="left:283.49px;top:451.31px;font-size:9.23px;color:#e4e4e4;font-weight:normal;">D</div>
<div class="t" style="left:304.46px;top:450.98px;font-size:9.3px;color:#e4e4e4;font-weight:normal;">S</div>
<div class="t" style="left:327.06px;top:451.32px;font-size:9.38px;color:#e4e4e4;font-weight:normal;">R</div>
<div style="left:344.27px;top:435.67px;width:17.03px;height:14.93px;background:#2a2a2a;border-radius:1.5px;"></div>
<svg style="position:absolute;left:344.27px;top:435.67px" width="20" height="20"><line x1="1" y1="16" x2="15" y2="2" stroke="#aaa" stroke-width="1"/></svg>
<svg style="position:absolute;left:364.72px;top:433.57px" width="21.18" height="21.18"><circle cx="10.59" cy="10.59" r="9.59" fill="#2a2a2a"/><circle cx="10.59" cy="10.59" r="6.71" fill="url(#kg)" stroke="#1e1e1e" stroke-width="0.8"/><line x1="10.59" y1="8.19" x2="10.59" y2="4.26" stroke="#f2f2f2" stroke-width="1.34" stroke-linecap="round"/><circle cx="10.59" cy="1.2" r="0.9" fill="#f0901e"/></svg>
<div class="t" style="left:369.15px;top:451.38px;font-size:9.53px;color:#e4e4e4;font-weight:normal;">EG</div>
<div style="left:390.15px;top:363.21px;width:107.67px;height:129.36px;background:#3b3b3b;border-left:2px solid #2a2a2a;box-sizing:border-box"></div>
<div class="t" style="left:396.81px;top:369.97px;font-size:8.84px;color:#e0e0e0;font-weight:bold;">LFO1</div>
<div class="t" style="left:400.08px;top:377.75px;font-size:10.45px;color:#ececec;font-weight:bold;letter-spacing:-1.5px">&#9679;&#10230;</div>
<div style="left:403.5px;top:390.34px;width:5.08px;height:4.33px;background:#5ad21e;border-radius:1.5px;"></div>
<div style="left:396.81px;top:398.89px;width:20.32px;height:10.31px;background:#575757;border-radius:1.5px;"></div>
<div class="t" style="left:398.99px;top:400.33px;font-size:7.71px;color:#eee;font-weight:bold;">&#9833;&#9662;</div>
<svg style="position:absolute;left:423.99px;top:367.21px" width="20.51" height="20.51"><circle cx="10.25" cy="10.25" r="9.25" fill="#2a2a2a"/><circle cx="10.25" cy="10.25" r="6.48" fill="url(#kg)" stroke="#1e1e1e" stroke-width="0.8"/><line x1="8.77" y1="12.02" x2="6.33" y2="14.93" stroke="#f2f2f2" stroke-width="1.3" stroke-linecap="round"/></svg>
<svg style="position:absolute;left:453.6px;top:366.73px" width="20.7" height="20.7"><circle cx="10.35" cy="10.35" r="9.35" fill="#2a2a2a"/><path d="M4.6 16.1 A8.14 8.14 0 1 1 18 13.13" stroke="#f0901e" stroke-width="2.24" fill="none"/><circle cx="10.35" cy="10.35" r="6.55" fill="url(#kg)" stroke="#1e1e1e" stroke-width="0.8"/><line x1="9.55" y1="8.15" x2="8.24" y2="4.55" stroke="#f2f2f2" stroke-width="1.31" stroke-linecap="round"/></svg>
<div class="t" style="left:422.25px;top:385.72px;font-size:9.25px;color:#e4e4e4;font-weight:normal;">Phase</div>
<div class="t" style="left:451.57px;top:385.07px;font-size:9.35px;color:#e4e4e4;font-weight:normal;">Depth</div>
<div style="left:483.39px;top:368.65px;width:10.91px;height:11.82px;background:#2a2a2a;border-radius:1.5px;"></div>
<div class="t" style="left:484.84px;top:370.57px;font-size:8.27px;color:#bbb;font-weight:normal;">&#177;</div>
<div style="left:483.39px;top:384.81px;width:10.91px;height:9.05px;background:#2a2a2a;border-radius:1.5px;"></div>
<div class="t" style="left:485.28px;top:385.32px;font-size:7.94px;color:#ccc;font-weight:normal;">R</div>
<div style="left:422.25px;top:398.46px;width:41.7px;height:11.63px;background:#1c1c1c;border-radius:1.5px;"></div>
<div class="t" style="left:122.25px;width:338.84px;text-align:right;top:400.28px;font-size:8.79px;color:#f0921e;font-weight:bold;">1/2</div>
<div style="left:467.39px;top:399.31px;width:26.91px;height:10.35px;background:#1c1c1c;border-radius:1.5px;"></div>
<svg style="position:absolute;left:468.25px;top:399.31px" width="28" height="14"><path d="M2 7 C6 -1,9 -1,13 7 S20 15,24 7" fill="none" stroke="#f0901e" stroke-width="1.3"/></svg>
<div style="left:390.15px;top:413.65px;width:107.67px;height:2.37px;background:#2a2a2a"></div>
<div class="t" style="left:396.81px;top:420.93px;font-size:8.84px;color:#e0e0e0;font-weight:bold;">LFO2</div>
<div class="t" style="left:400.08px;top:428.71px;font-size:10.45px;color:#ececec;font-weight:bold;letter-spacing:-1.5px">&#9679;&#10230;</div>
<div style="left:403.5px;top:441.3px;width:5.08px;height:4.33px;background:#5ad21e;border-radius:1.5px;"></div>
<div style="left:396.81px;top:449.85px;width:20.32px;height:10.31px;background:#575757;border-radius:1.5px;"></div>
<div class="t" style="left:398.99px;top:451.29px;font-size:7.71px;color:#eee;font-weight:bold;">&#9719;&#9662;</div>
<svg style="position:absolute;left:423.99px;top:418.68px" width="20.51" height="20.51"><circle cx="10.25" cy="10.25" r="9.25" fill="#2a2a2a"/><circle cx="10.25" cy="10.25" r="6.48" fill="url(#kg)" stroke="#1e1e1e" stroke-width="0.8"/><line x1="8.77" y1="12.02" x2="6.33" y2="14.93" stroke="#f2f2f2" stroke-width="1.3" stroke-linecap="round"/></svg>
<svg style="position:absolute;left:453.6px;top:418.74px" width="20.7" height="20.7"><circle cx="10.35" cy="10.35" r="9.35" fill="#2a2a2a"/><path d="M4.6 16.1 A8.14 8.14 0 1 1 18 13.13" stroke="#f0901e" stroke-width="2.24" fill="none"/><circle cx="10.35" cy="10.35" r="6.55" fill="url(#kg)" stroke="#1e1e1e" stroke-width="0.8"/><line x1="9.55" y1="8.15" x2="8.24" y2="4.55" stroke="#f2f2f2" stroke-width="1.31" stroke-linecap="round"/></svg>
<div class="t" style="left:422.25px;top:437.19px;font-size:9.25px;color:#e4e4e4;font-weight:normal;">Phase</div>
<div class="t" style="left:451.57px;top:437.08px;font-size:9.35px;color:#e4e4e4;font-weight:normal;">Depth</div>
<div style="left:483.39px;top:421.11px;width:10.91px;height:11.82px;background:#2a2a2a;border-radius:1.5px;"></div>
<div class="t" style="left:484.84px;top:423.04px;font-size:8.27px;color:#bbb;font-weight:normal;">&#177;</div>
<div style="left:483.39px;top:437.28px;width:10.91px;height:9.05px;background:#2a2a2a;border-radius:1.5px;"></div>
<div class="t" style="left:485.28px;top:437.79px;font-size:7.94px;color:#ccc;font-weight:normal;">R</div>
<div style="left:422.25px;top:450.09px;width:41.7px;height:11.63px;background:#1c1c1c;border-radius:1.5px;"></div>
<div class="t" style="left:122.25px;width:338.84px;text-align:right;top:451.9px;font-size:8.79px;color:#f0921e;font-weight:bold;">0.37 Hz</div>
<div style="left:467.39px;top:451.65px;width:26.91px;height:10.35px;background:#1c1c1c;border-radius:1.5px;"></div>
<svg style="position:absolute;left:468.25px;top:451.65px" width="28" height="14"><path d="M2 7 C6 -1,9 -1,13 7 S20 15,24 7" fill="none" stroke="#f0901e" stroke-width="1.3"/></svg>
<div style="left:390.15px;top:465.28px;width:107.67px;height:2.37px;background:#2a2a2a"></div>
<div class="t" style="left:396.81px;top:471.89px;font-size:8.84px;color:#e0e0e0;font-weight:bold;">LFO3</div>
<div class="t" style="left:400.08px;top:479.67px;font-size:10.45px;color:#ececec;font-weight:bold;letter-spacing:-1.5px">&#9679;&#10230;</div>
<div style="left:403.5px;top:492.26px;width:5.08px;height:4.33px;background:#5ad21e;border-radius:1.5px;"></div>
<div style="left:396.81px;top:500.81px;width:20.32px;height:10.31px;background:#575757;border-radius:1.5px;"></div>
<div class="t" style="left:398.99px;top:502.25px;font-size:7.71px;color:#eee;font-weight:bold;">&#9719;&#9662;</div>
<svg style="position:absolute;left:423.99px;top:470.15px" width="20.51" height="20.51"><circle cx="10.25" cy="10.25" r="9.25" fill="#2a2a2a"/><circle cx="10.25" cy="10.25" r="6.48" fill="url(#kg)" stroke="#1e1e1e" stroke-width="0.8"/><line x1="8.77" y1="12.02" x2="6.33" y2="14.93" stroke="#f2f2f2" stroke-width="1.3" stroke-linecap="round"/></svg>
<svg style="position:absolute;left:453.6px;top:470.76px" width="20.7" height="20.7"><circle cx="10.35" cy="10.35" r="9.35" fill="#2a2a2a"/><path d="M4.6 16.1 A8.14 8.14 0 1 1 18 13.13" stroke="#f0901e" stroke-width="2.24" fill="none"/><circle cx="10.35" cy="10.35" r="6.55" fill="url(#kg)" stroke="#1e1e1e" stroke-width="0.8"/><line x1="9.55" y1="8.15" x2="8.24" y2="4.55" stroke="#f2f2f2" stroke-width="1.31" stroke-linecap="round"/></svg>
<div class="t" style="left:422.25px;top:488.66px;font-size:9.25px;color:#e4e4e4;font-weight:normal;">Phase</div>
<div class="t" style="left:451.57px;top:489.1px;font-size:9.35px;color:#e4e4e4;font-weight:normal;">Depth</div>
<div style="left:483.39px;top:473.58px;width:10.91px;height:11.82px;background:#2a2a2a;border-radius:1.5px;"></div>
<div class="t" style="left:484.84px;top:475.5px;font-size:8.27px;color:#bbb;font-weight:normal;">&#177;</div>
<div style="left:483.39px;top:489.74px;width:10.91px;height:9.05px;background:#2a2a2a;border-radius:1.5px;"></div>
<div class="t" style="left:485.28px;top:490.26px;font-size:7.94px;color:#ccc;font-weight:normal;">R</div>
<div style="left:422.25px;top:501.71px;width:41.7px;height:11.63px;background:#1c1c1c;border-radius:1.5px;"></div>
<div style="left:467.39px;top:503.98px;width:26.91px;height:10.35px;background:#1c1c1c;border-radius:1.5px;"></div>
<svg style="position:absolute;left:468.25px;top:503.98px" width="28" height="14"><path d="M2 7 C6 -1,9 -1,13 7 S20 15,24 7" fill="none" stroke="#f0901e" stroke-width="1.3"/></svg>
<div style="left:390.15px;top:516.9px;width:107.67px;height:2.37px;background:#2a2a2a"></div>
<div style="left:497.81px;top:366.69px;width:28.99px;height:132.54px;background:#3b3b3b;border-left:2px solid #2a2a2a;box-sizing:border-box"></div>
<div class="t" style="left:506.77px;top:370.29px;font-size:8.34px;color:#e0e0e0;font-weight:bold;">VEL</div>
<div class="t" style="left:506.48px;top:378.08px;font-size:10.35px;color:#ececec;font-weight:bold;letter-spacing:-1.5px">&#9679;&#10230;</div>
<div class="t" style="left:506.77px;top:390.66px;font-size:8.34px;color:#e0e0e0;font-weight:bold;">KEY</div>
<div class="t" style="left:506.48px;top:398.46px;font-size:10.35px;color:#ececec;font-weight:bold;letter-spacing:-1.5px">&#9679;&#10230;</div>
<div class="t" style="left:506.77px;top:411.04px;font-size:8.34px;color:#e0e0e0;font-weight:bold;">TMB</div>
<div class="t" style="left:506.48px;top:418.84px;font-size:10.35px;color:#ececec;font-weight:bold;letter-spacing:-1.5px">&#9679;&#10230;</div>
<div class="t" style="left:506.77px;top:431.42px;font-size:8.34px;color:#e0e0e0;font-weight:bold;">FEG</div>
<div class="t" style="left:506.48px;top:439.22px;font-size:10.35px;color:#ececec;font-weight:bold;letter-spacing:-1.5px">&#9679;&#10230;</div>
<div class="t" style="left:506.77px;top:451.8px;font-size:8.34px;color:#e0e0e0;font-weight:bold;">AEG</div>
<div class="t" style="left:506.48px;top:459.59px;font-size:10.35px;color:#ececec;font-weight:bold;letter-spacing:-1.5px">&#9679;&#10230;</div>
<div class="t" style="left:506.77px;top:472.18px;font-size:8.34px;color:#e0e0e0;font-weight:bold;">MW</div>
<div class="t" style="left:506.48px;top:479.97px;font-size:10.35px;color:#ececec;font-weight:bold;letter-spacing:-1.5px">&#9679;&#10230;</div>
<div style="left:526.8px;top:363.94px;width:58.37px;height:139.48px;background:#3b3b3b;border-left:2px solid #2a2a2a;box-sizing:border-box"></div>
<div style="left:536.09px;top:367.52px;width:41.48px;height:12.1px;background:#2b2b2b;border-radius:1.5px;border:1px solid #4a4a4a;box-sizing:border-box"></div>
<div class="t" style="left:536.09px;width:41.48px;text-align:center;top:369.44px;font-size:8.8px;color:#bbb;font-weight:normal;">Note FX</div>
<div style="left:534.29px;top:387.27px;width:43.28px;height:15.18px;background:#2b2b2b;border-radius:1.5px;border:1px solid #4a4a4a;box-sizing:border-box"></div>
<div class="t" style="left:534.29px;width:43.28px;text-align:center;top:391.05px;font-size:8.8px;color:#bbb;font-weight:normal;">FX</div>
<div style="left:534.29px;top:408.37px;width:45.14px;height:10.86px;background:#2b2b2b;border-radius:1.5px;"></div>
<div class="t" style="left:534.29px;width:45.14px;text-align:center;top:409.31px;font-size:8.8px;color:#999;font-weight:normal;">MONO</div>
<div style="left:534.29px;top:422.97px;width:18.59px;height:10.45px;background:#2b2b2b;border-radius:1.5px;"></div>
<div class="t" style="left:536.55px;top:424.19px;font-size:8.43px;color:#888;font-weight:normal;">LG</div>
<div style="left:534.29px;top:436.61px;width:18.59px;height:10.57px;background:#2b2b2b;border-radius:1.5px;"></div>
<div class="t" style="left:536.55px;top:437.96px;font-size:8.43px;color:#888;font-weight:normal;">ST</div>
<svg style="position:absolute;left:558.46px;top:419.7px" width="19.11" height="19.11"><circle cx="9.55" cy="9.55" r="8.55" fill="#2a2a2a"/><circle cx="9.55" cy="9.55" r="5.99" fill="url(#kg)" stroke="#1e1e1e" stroke-width="0.8"/><line x1="8.48" y1="7.7" x2="6.73" y2="4.66" stroke="#f2f2f2" stroke-width="1.2" stroke-linecap="round"/></svg>
<div class="t" style="left:558.52px;top:438.05px;font-size:9.35px;color:#e4e4e4;font-weight:normal;">Glide</div>
<svg style="position:absolute;left:546.03px;top:449.66px" width="21.31" height="21.31"><circle cx="10.66" cy="10.66" r="9.66" fill="#2a2a2a"/><path d="M4.72 16.6 A8.4 8.4 0 0 1 7.78 2.76" stroke="#f0901e" stroke-width="2.32" fill="none"/><circle cx="10.66" cy="10.66" r="6.76" fill="url(#kg)" stroke="#1e1e1e" stroke-width="0.8"/><line x1="9.45" y1="8.57" x2="7.47" y2="5.14" stroke="#f2f2f2" stroke-width="1.35" stroke-linecap="round"/></svg>
<div class="t" style="left:538.05px;top:467.64px;font-size:9.31px;color:#e4e4e4;font-weight:normal;">Vel Sens.</div>
<svg style="position:absolute;left:534.03px;top:474.23px" width="24.64" height="24.64"><circle cx="12.32" cy="12.32" r="11.32" fill="#2a2a2a"/><path d="M5.36 19.29 A9.85 9.85 0 0 1 7.4 3.79" stroke="#f0901e" stroke-width="2.72" fill="none"/><circle cx="12.32" cy="12.32" r="7.92" fill="url(#kg)" stroke="#1e1e1e" stroke-width="0.8"/><line x1="10.91" y1="9.87" x2="8.58" y2="5.85" stroke="#f2f2f2" stroke-width="1.58" stroke-linecap="round"/></svg>
<svg style="position:absolute;left:561.22px;top:477.96px" width="19.12" height="19.12"><circle cx="9.56" cy="9.56" r="8.56" fill="#2a2a2a"/><circle cx="9.56" cy="9.56" r="5.99" fill="url(#kg)" stroke="#1e1e1e" stroke-width="0.8"/><line x1="9.56" y1="7.42" x2="9.56" y2="3.91" stroke="#f2f2f2" stroke-width="1.2" stroke-linecap="round"/></svg>
<div class="t" style="left:592.5px;top:432.04px;font-size:12.02px;color:#bbb;font-weight:bold;">+</div>
<div style="left:594.38px;top:366.46px;width:5.01px;height:6.26px;background:#474747"></div>
<div style="left:605.53px;top:360.61px;width:326.59px;height:162.4px;background:#3a3a3a;border-top:1.5px solid #555;border-left:1.5px solid #555;border-radius:3px 0 0 0;box-sizing:border-box"></div>
<div style="left:609.79px;top:365.29px;width:11.11px;height:9.32px;background:#ef8b1c;border-radius:1.5px"></div>
<div class="t" style="left:611.51px;top:403.4px;width:25.2px;text-align:center;font-size:8.6px;color:#e0e0e0;font-weight:bold;transform:rotate(-90deg);transform-origin:0 0;letter-spacing:0px">EQ-5</div>
<div style="left:625.2px;top:360.62px;width:257.96px;height:86.57px;background:#1b1b1b;background-image:linear-gradient(90deg,rgba(255,255,255,0.05) 1px,transparent 1px),linear-gradient(rgba(255,255,255,0.05) 1px,transparent 1px);background-size:10px 8.5px"></div>
<div style="left:688.48px;top:360.62px;width:1px;height:86.57px;background:rgba(255,255,255,0.16)"></div>
<div style="left:767.23px;top:360.62px;width:1px;height:86.57px;background:rgba(255,255,255,0.16)"></div>
<div style="left:854.4px;top:360.62px;width:1px;height:86.57px;background:rgba(255,255,255,0.16)"></div>
<svg style="position:absolute;left:600px;top:340px" width="300" height="120"><line x1="27.92" y1="66.66" x2="78.02" y2="65.89" stroke="#9a9a9a" stroke-width="1.3"/><polyline points="27.92,105.62 29.35,104.57 31.25,103.17 33.52,101.5 36.03,99.65 38.71,97.69 41.43,95.71 44.09,93.78 46.6,92 49,90.27 51.43,88.5 53.89,86.71 56.35,84.94 58.82,83.21 61.28,81.56 63.73,80.02 66.16,78.63 68.57,77.37 70.97,76.23 73.36,75.19 75.74,74.23 78.12,73.34 80.51,72.51 82.91,71.73 85.32,70.97 87.71,70.26 90.06,69.61 92.39,69.02 94.74,68.48 97.14,67.98 99.61,67.53 102.18,67.11 104.89,66.73 107.61,66.38 110.26,66.07 112.93,65.81 115.72,65.58 118.71,65.39 122,65.25 125.68,65.15 129.83,65.09 134.61,65.11 139.98,65.22 145.78,65.4 151.86,65.6 158.04,65.82 164.18,66.01 170.11,66.14 175.67,66.2 180.86,66.19 185.85,66.11 190.69,66 195.45,65.86 200.19,65.7 204.97,65.55 209.86,65.4 214.91,65.28 220.24,65.17 225.85,65.05 231.61,64.94 237.39,64.82 243.06,64.72 248.49,64.63 253.54,64.55 258.1,64.49 262.27,64.46 266.23,64.45 269.93,64.45 273.33,64.46 276.39,64.49 279.08,64.51 281.35,64.53 283.16,64.54" fill="none" stroke="#f0901e" stroke-width="1.8"/><circle cx="78.02" cy="65.89" r="2.6" fill="#1b1b1b" stroke="#f0901e" stroke-width="1.3"/><circle cx="129.83" cy="65.09" r="2.6" fill="#1b1b1b" stroke="#f0901e" stroke-width="1.3"/><circle cx="175.67" cy="66.2" r="2.6" fill="#1b1b1b" stroke="#f0901e" stroke-width="1.3"/><circle cx="214.91" cy="65.28" r="2.6" fill="#1b1b1b" stroke="#f0901e" stroke-width="1.3"/><circle cx="258.1" cy="64.49" r="2.6" fill="#1b1b1b" stroke="#f0901e" stroke-width="1.3"/></svg>
<div class="t" style="left:676.04px;top:393.28px;font-size:8.82px;color:#f0921e;font-weight:bold;">1</div>
<div class="t" style="left:727.78px;top:392.27px;font-size:8.97px;color:#f0921e;font-weight:bold;">2</div>
<div class="t" style="left:773.55px;top:393.19px;font-size:9.1px;color:#f0921e;font-weight:bold;">3</div>
<div class="t" style="left:812.74px;top:392.1px;font-size:9.22px;color:#f0921e;font-weight:bold;">4</div>
<div class="t" style="left:855.88px;top:391.14px;font-size:9.34px;color:#f0921e;font-weight:bold;">5</div>
<div class="t" style="left:689.31px;top:438.18px;font-size:6.39px;color:#aaa;font-weight:normal;">100</div>
<div class="t" style="left:771.44px;top:439.1px;font-size:6.55px;color:#aaa;font-weight:normal;">1k</div>
<div class="t" style="left:854.4px;top:438.74px;font-size:6.36px;color:#aaa;font-weight:normal;">10k</div>
<div class="t" style="left:628.88px;top:439.29px;font-size:5.91px;color:#888;font-weight:normal;">20</div>
<div style="left:625.2px;top:447.19px;width:257.96px;height:60px;background:#3c3c3c"></div>
<div style="left:640.13px;top:455.83px;width:13.77px;height:10.69px;background:#ef8b1c;border-radius:1.5px;"></div>
<div class="t" style="left:640.13px;width:13.77px;text-align:center;top:456.8px;font-size:9.08px;color:#3a2000;font-weight:bold;">1</div>
<div style="left:657.98px;top:456.2px;width:27.34px;height:10.78px;background:#555;border-radius:1.5px;"></div>
<div class="t" style="left:661.25px;top:458.41px;font-size:7.39px;color:#ddd;font-weight:normal;">&#8767; &#9662;</div>
<div style="left:689.98px;top:456.2px;width:13.73px;height:10.87px;background:#ef8b1c;border-radius:1.5px;"></div>
<div class="t" style="left:689.98px;width:13.73px;text-align:center;top:457.18px;font-size:9.23px;color:#3a2000;font-weight:bold;">2</div>
<div style="left:707.75px;top:456.44px;width:25.51px;height:10.95px;background:#555;border-radius:1.5px;"></div>
<div class="t" style="left:711.13px;top:458.68px;font-size:7.51px;color:#ddd;font-weight:normal;">&#8767; &#9662;</div>
<div style="left:738.41px;top:456.24px;width:14.52px;height:11.04px;background:#ef8b1c;border-radius:1.5px;"></div>
<div class="t" style="left:738.41px;width:14.52px;text-align:center;top:457.25px;font-size:9.38px;color:#3a2000;font-weight:bold;">3</div>
<div style="left:757.45px;top:456.59px;width:28.11px;height:11.13px;background:#555;border-radius:1.5px;"></div>
<div class="t" style="left:760.94px;top:458.88px;font-size:7.64px;color:#ddd;font-weight:normal;">&#8767; &#9662;</div>
<div style="left:790.36px;top:456.46px;width:12.32px;height:11.22px;background:#ef8b1c;border-radius:1.5px;"></div>
<div class="t" style="left:790.36px;width:12.32px;text-align:center;top:457.48px;font-size:9.53px;color:#3a2000;font-weight:bold;">4</div>
<div style="left:806.98px;top:456.55px;width:25.36px;height:11.3px;background:#555;border-radius:1.5px;"></div>
<div class="t" style="left:810.58px;top:458.87px;font-size:7.75px;color:#ddd;font-weight:normal;">&#8767; &#9662;</div>
<div style="left:837.46px;top:456.15px;width:12.5px;height:11.39px;background:#ef8b1c;border-radius:1.5px;"></div>
<div class="t" style="left:837.46px;width:12.5px;text-align:center;top:457.19px;font-size:9.67px;color:#3a2000;font-weight:bold;">5</div>
<div style="left:855.14px;top:456.18px;width:22.94px;height:11.47px;background:#555;border-radius:1.5px;"></div>
<div class="t" style="left:858.85px;top:458.54px;font-size:7.87px;color:#ddd;font-weight:normal;">&#8767; &#9662;</div>
<div style="left:689.98px;top:469.69px;width:43.97px;height:10.66px;background:#1c1c1c;border-radius:1.5px;"></div>
<div class="t" style="left:389.98px;width:342.25px;text-align:right;top:470.9px;font-size:8.56px;color:#f0921e;font-weight:normal;">+0.60 dB</div>
<div style="left:738.41px;top:470.41px;width:47.15px;height:10.84px;background:#1c1c1c;border-radius:1.5px;"></div>
<div class="t" style="left:438.41px;width:345.38px;text-align:right;top:471.63px;font-size:8.7px;color:#f0921e;font-weight:normal;">+0.00 dB</div>
<div style="left:790.36px;top:470.3px;width:41.98px;height:11.01px;background:#1c1c1c;border-radius:1.5px;"></div>
<div class="t" style="left:490.36px;width:340.16px;text-align:right;top:471.54px;font-size:8.84px;color:#f0921e;font-weight:normal;">+0.00 dB</div>
<div style="left:837.46px;top:470.24px;width:40.62px;height:11.17px;background:#1c1c1c;border-radius:1.5px;"></div>
<div class="t" style="left:537.46px;width:338.74px;text-align:right;top:471.51px;font-size:8.97px;color:#f0921e;font-weight:normal;">+0.00 dB</div>
<div style="left:640.45px;top:485.07px;width:44.87px;height:10.49px;background:#1c1c1c;border-radius:1.5px;"></div>
<div class="t" style="left:340.45px;width:343.21px;text-align:right;top:486.26px;font-size:8.43px;color:#f0921e;font-weight:normal;">80.0 Hz</div>
<div style="left:641.26px;top:485.82px;width:1.78px;height:6.35px;background:#f0921e"></div>
<div style="left:689.98px;top:485.95px;width:43.97px;height:10.66px;background:#1c1c1c;border-radius:1.5px;"></div>
<div class="t" style="left:389.98px;width:342.25px;text-align:right;top:487.15px;font-size:8.56px;color:#f0921e;font-weight:normal;">352 Hz</div>
<div style="left:690.81px;top:486.81px;width:1.84px;height:6.46px;background:#f0921e"></div>
<div style="left:738.41px;top:485.6px;width:47.15px;height:10.84px;background:#1c1c1c;border-radius:1.5px;"></div>
<div class="t" style="left:438.41px;width:345.38px;text-align:right;top:486.83px;font-size:8.7px;color:#f0921e;font-weight:normal;">1.20 kHz</div>
<div style="left:739.27px;top:486.41px;width:1.89px;height:6.56px;background:#f0921e"></div>
<div style="left:790.36px;top:485.06px;width:41.98px;height:11.01px;background:#1c1c1c;border-radius:1.5px;"></div>
<div class="t" style="left:490.36px;width:340.16px;text-align:right;top:486.31px;font-size:8.84px;color:#f0921e;font-weight:normal;">3.60 kHz</div>
<div style="left:791.24px;top:486.16px;width:1.96px;height:6.67px;background:#f0921e"></div>
<div style="left:837.46px;top:485.23px;width:40.62px;height:11.17px;background:#1c1c1c;border-radius:1.5px;"></div>
<div class="t" style="left:537.46px;width:338.74px;text-align:right;top:486.49px;font-size:8.97px;color:#f0921e;font-weight:normal;">12.0 kHz</div>
<div style="left:838.37px;top:486.44px;width:2.02px;height:6.77px;background:#f0921e"></div>
<div style="left:689.98px;top:499.99px;width:43.97px;height:10.66px;background:#1c1c1c;border-radius:1.5px;"></div>
<div class="t" style="left:389.98px;width:342.25px;text-align:right;top:501.2px;font-size:8.56px;color:#f0921e;font-weight:normal;">0.71</div>
<div style="left:738.41px;top:499.48px;width:47.15px;height:10.84px;background:#1c1c1c;border-radius:1.5px;"></div>
<div class="t" style="left:438.41px;width:345.38px;text-align:right;top:500.7px;font-size:8.7px;color:#f0921e;font-weight:normal;">0.71</div>
<div style="left:790.36px;top:499.29px;width:41.98px;height:11.01px;background:#1c1c1c;border-radius:1.5px;"></div>
<div class="t" style="left:490.36px;width:340.16px;text-align:right;top:500.54px;font-size:8.84px;color:#f0921e;font-weight:normal;">0.71</div>
<div style="left:837.46px;top:499.8px;width:40.62px;height:11.17px;background:#1c1c1c;border-radius:1.5px;"></div>
<div class="t" style="left:537.46px;width:338.74px;text-align:right;top:501.06px;font-size:8.97px;color:#f0921e;font-weight:normal;">0.71</div>
<div class="t" style="left:629.52px;top:471.81px;font-size:8.34px;color:#ccc;font-weight:bold;">G</div>
<div class="t" style="left:627.28px;top:485.6px;font-size:8.34px;color:#ccc;font-weight:bold;">F</div>
<div style="left:682.66px;top:487.96px;width:2.5px;height:2.5px;background:#28a6d8;border-radius:50%"></div>
<div style="left:883.16px;top:360.17px;width:47.99px;height:176.89px;background:#3b3b3b;border-left:1.5px solid #2a2a2a;box-sizing:border-box"></div>
<div class="t" style="left:888.06px;top:366.35px;font-size:8.53px;color:#e8e8e8;font-weight:bold;">GLOBAL</div>
<svg style="position:absolute;left:892.02px;top:377.91px" width="29.35" height="29.35"><circle cx="14.67" cy="14.67" r="13.67" fill="#2a2a2a"/><path d="M6.26 23.09 A11.9 11.9 0 1 1 26.39 16.74" stroke="#f0901e" stroke-width="3.28" fill="none"/><circle cx="14.67" cy="14.67" r="9.57" fill="url(#kg)" stroke="#1e1e1e" stroke-width="0.8"/><line x1="12.48" y1="12.05" x2="8.87" y2="7.76" stroke="#f2f2f2" stroke-width="1.91" stroke-linecap="round"/></svg>
<div class="t" style="left:889.01px;top:401.8px;font-size:9.1px;color:#e4e4e4;font-weight:normal;">Amount</div>
<svg style="position:absolute;left:893.29px;top:411.39px" width="26.8" height="26.8"><circle cx="13.4" cy="13.4" r="12.4" fill="#2a2a2a"/><circle cx="13.4" cy="13.4" r="8.68" fill="url(#kg)" stroke="#1e1e1e" stroke-width="0.8"/><line x1="13.4" y1="10.3" x2="13.4" y2="5.22" stroke="#f2f2f2" stroke-width="1.74" stroke-linecap="round"/><circle cx="13.4" cy="1.2" r="0.9" fill="#f0901e"/></svg>
<div class="t" style="left:896.21px;top:437.87px;font-size:9.1px;color:#e4e4e4;font-weight:normal;">Shift</div>
<svg style="position:absolute;left:892.15px;top:475.73px" width="26.79" height="26.79"><circle cx="13.4" cy="13.4" r="12.4" fill="#2a2a2a"/><circle cx="13.4" cy="13.4" r="8.68" fill="url(#kg)" stroke="#1e1e1e" stroke-width="0.8"/><line x1="13.4" y1="10.3" x2="13.4" y2="5.22" stroke="#f2f2f2" stroke-width="1.74" stroke-linecap="round"/><circle cx="13.4" cy="1.2" r="0.9" fill="#f0901e"/></svg>
<div class="t" style="left:890.9px;top:500.33px;font-size:9.1px;color:#e4e4e4;font-weight:normal;">Output</div>
<div class="t" style="left:935.03px;top:432.19px;font-size:10.53px;color:#bbb;font-weight:bold;">+</div>
<div style="left:935.03px;top:361.55px;width:4.87px;height:8.37px;background:#474747"></div>
<div style="left:936px;top:456.46px;width:4.87px;height:69.79px;background:#474747"></div>
<div style="left:946.74px;top:356.68px;width:19.7px;height:155.75px;background:#474747;border-radius:2px;border:1px solid #5a5a5a;box-sizing:border-box"></div>
<div style="left:951.25px;top:364.4px;width:11.43px;height:8.42px;background:#ef8b1c;border-radius:1px"></div>
<div class="t" style="left:953.4px;top:422.75px;width:46.33px;text-align:center;font-size:8.3px;color:#e4e4e4;font-weight:bold;transform:rotate(-90deg);transform-origin:0 0;letter-spacing:0px">DYNAMICS</div>
<div class="t" style="left:953.22px;top:488.91px;font-size:8.09px;color:#ddd;font-weight:normal;">&#9673;</div>
<div class="t" style="left:953.22px;top:500.84px;font-size:8.09px;color:#ddd;font-weight:normal;">&#9673;</div>
<div style="left:470px;top:509.5px;width:500px;height:2px;background:#6a6a6a;border-radius:0 0 4px 4px"></div>
<div style="left:470px;top:511.5px;width:500px;height:100px;background:#242424"></div>
<div style="left:883.16px;top:503.89px;width:47.99px;height:2.07px;background:#555"></div>
<div style="left:10.04px;top:331.59px;width:27.85px;height:10.91px;background:#313131;border-radius:1.5px"></div>
<div style="left:60.19px;top:331.69px;width:12.68px;height:11.62px;background:#313131;border-radius:1.5px"></div>
<div style="left:79.91px;top:332.16px;width:12.24px;height:11.09px;background:#313131;border-radius:1.5px"></div>
<div style="left:12.47px;top:335.11px;width:2.53px;height:2.22px;background:#f0901e"></div>
<div style="left:12.47px;top:338.03px;width:2.53px;height:2.22px;background:#f0901e"></div>
<div style="left:15.6px;top:335.11px;width:2.54px;height:2.22px;background:#f0901e"></div>
<div style="left:15.6px;top:338.03px;width:2.54px;height:2.22px;background:#f0901e"></div>
<div style="left:18.75px;top:335.11px;width:2.54px;height:2.22px;background:#f0901e"></div>
<div style="left:18.75px;top:338.03px;width:2.54px;height:2.22px;background:#f0901e"></div>
<div style="left:26.6px;top:335.38px;width:9.14px;height:2.13px;background:#f0901e"></div>
<div style="left:26.6px;top:338.52px;width:9.14px;height:2.13px;background:#f0901e"></div>
<div style="left:48.47px;top:336px;width:6.05px;height:0.82px;background:#e8e8e8"></div>
<div style="left:48.47px;top:338.86px;width:6.05px;height:0.82px;background:#e8e8e8"></div>
<div class="t" style="left:47.53px;top:334.63px;font-size:3.92px;color:#e8e8e8;font-weight:normal;">&#9664;</div>
<div class="t" style="left:52.96px;top:337.69px;font-size:3.93px;color:#e8e8e8;font-weight:normal;">&#9654;</div>
<svg style="position:absolute;left:61.03px;top:332.53px" width="14" height="12" viewBox="0 0 14 12"><path d="M2.5 3 H8 V9 M5 6.5 L8 9.5 L11 6.5" fill="none" stroke="#f0901e" stroke-width="1.8" stroke-linejoin="round"/></svg>
<div style="left:82.58px;top:335.17px;width:2.79px;height:6.73px;background:#f0901e"></div>
<div style="left:86.44px;top:335.36px;width:4.09px;height:2.7px;background:#f0901e"></div>
<div style="left:86.44px;top:339.2px;width:4.09px;height:2.7px;background:#f0901e"></div>
<div style="left:161px;top:331.5px;width:400px;height:12.5px;background:#3c3c3c"></div>
<div style="left:162.07px;top:332.15px;width:11.01px;height:10.28px;background:#454545;border-radius:1px"></div>
<div class="t" style="left:164.47px;top:335.06px;font-size:6.17px;color:#aaa;font-weight:normal;">&#9664;</div>
<div style="left:174.35px;top:331.07px;width:105.13px;height:12.92px;background:#515151"></div>
<div class="t" style="left:549.39px;top:334.41px;font-size:7.11px;color:#999;font-weight:normal;">&#9654;</div>
<div style="left:563px;top:327px;width:402px;height:17px;background:#3c3c3c"></div>
<div style="left:566.17px;top:331.18px;width:10.78px;height:11.17px;background:#454545;border-radius:1px"></div>
<div class="t" style="left:567.71px;top:334.1px;font-size:6.81px;color:#aaa;font-weight:normal;">&#9664;</div>
<div style="left:578.5px;top:332.91px;width:189.43px;height:12.18px;background:#515151"></div>
<div style="left:839.66px;top:331.43px;width:74.31px;height:12.06px;background:#262626;border-radius:1.5px"></div>
<div class="t" style="left:842.04px;top:330.56px;font-size:12.11px;color:#f0901e;font-weight:bold;">&#9881;</div>
<div class="t" style="left:828.69px;top:333.28px;font-size:6.67px;color:#999;font-weight:normal;">&#9654;</div>
<div class="t" style="left:882.03px;top:332.65px;font-size:9.81px;color:#cfcfcf;font-weight:normal;">8/1</div>
<div style="left:918.2px;top:330.14px;width:41.32px;height:12.56px;background:#262626;border-radius:1.5px"></div>
<div class="t" style="left:920.51px;top:331.64px;font-size:10.11px;color:#f0901e;font-weight:bold;">&#8904;</div>
<div class="t" style="left:933.09px;top:332.46px;font-size:8.81px;color:#777;font-weight:bold;">IC</div>
<div class="t" style="left:944.78px;top:332.2px;font-size:10.19px;color:#f0901e;font-weight:bold;">&#9711;</div>
</div></body></html>
